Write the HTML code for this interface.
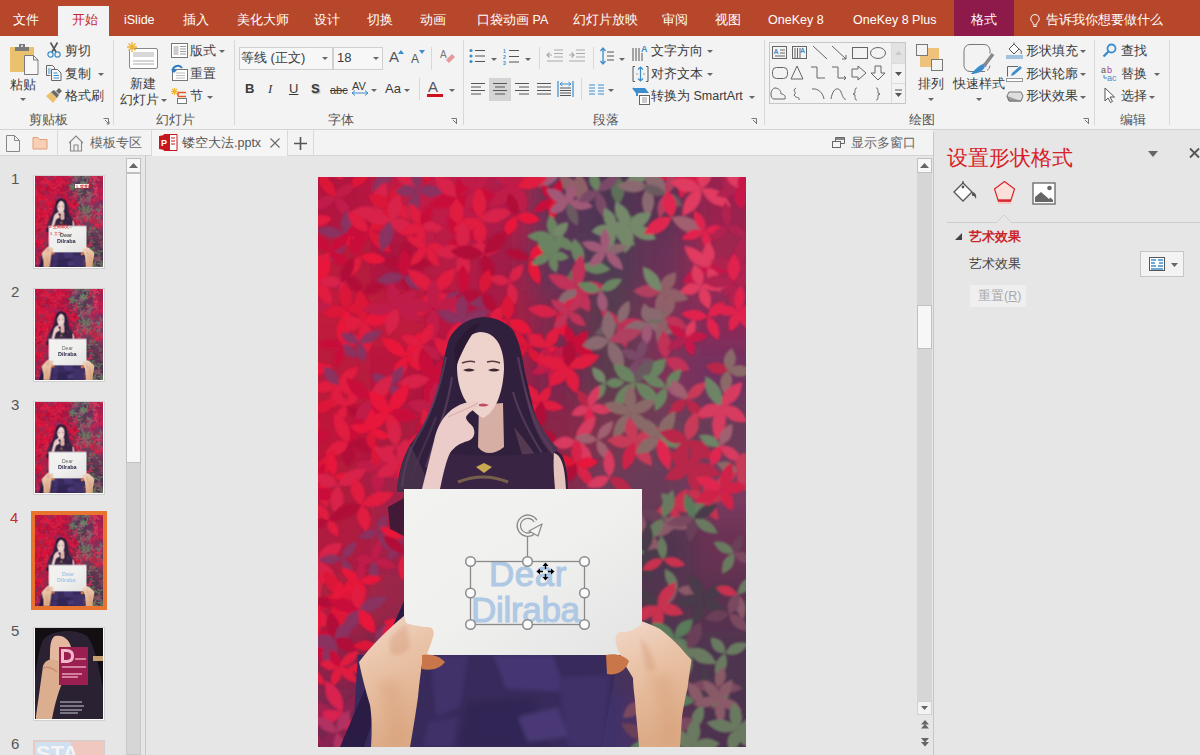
<!DOCTYPE html>
<html><head><meta charset="utf-8">
<style>
*{box-sizing:border-box;margin:0;padding:0}
html,body{width:1200px;height:755px;overflow:hidden;background:#e6e6e6;font-family:"Liberation Sans",sans-serif;color:#444}
.a{position:absolute}
.t{position:absolute;font-size:12.5px;line-height:14px;white-space:nowrap;color:#3a3a3a}
.w{color:#fff}
.dd{position:absolute;width:0;height:0;border-left:3px solid transparent;border-right:3px solid transparent;border-top:3px solid #666}
.vs{position:absolute;width:1px;background:#d8d8d8}
svg{position:absolute;overflow:visible}
</style></head><body>
<!-- TAB BAR -->
<div class="a" style="left:0;top:0;width:1200px;height:36px;background:#b7472a"></div>
<div class="a" style="left:58px;top:6px;width:51px;height:30px;background:#f3f3f3"></div>
<div class="a" style="left:954px;top:0;width:60px;height:36px;background:#8e1a4a"></div>
<div class="t w" style="left:13px;top:13px">文件</div>
<div class="t" style="left:72px;top:13px;color:#c8262b">开始</div>
<div class="t w" style="left:124px;top:13px">iSlide</div>
<div class="t w" style="left:183px;top:13px">插入</div>
<div class="t w" style="left:237px;top:13px">美化大师</div>
<div class="t w" style="left:314px;top:13px">设计</div>
<div class="t w" style="left:367px;top:13px">切换</div>
<div class="t w" style="left:420px;top:13px">动画</div>
<div class="t w" style="left:477px;top:13px">口袋动画 PA</div>
<div class="t w" style="left:573px;top:13px">幻灯片放映</div>
<div class="t w" style="left:662px;top:13px">审阅</div>
<div class="t w" style="left:715px;top:13px">视图</div>
<div class="t w" style="left:768px;top:13px">OneKey 8</div>
<div class="t w" style="left:853px;top:13px">OneKey 8 Plus</div>
<div class="t w" style="left:971px;top:13px">格式</div>
<svg style="left:1029px;top:13px" width="12" height="16" viewBox="0 0 12 16"><path d="M6 1.5a4.3 4.3 0 0 0-2.6 7.7c.6.5.9 1.2.9 2V12h3.4v-.8c0-.8.3-1.5.9-2A4.3 4.3 0 0 0 6 1.5z" fill="none" stroke="#fff" stroke-width="1"/><path d="M4.3 13.5h3.4" stroke="#fff"/></svg>
<div class="t w" style="left:1046px;top:13px">告诉我你想要做什么</div>

<!-- RIBBON -->
<div class="a" style="left:0;top:36px;width:1200px;height:94px;background:#f3f3f3;border-bottom:1px solid #d4d4d4"></div>
<!-- clipboard group -->
<svg style="left:10px;top:44px" width="29" height="31" viewBox="0 0 29 31"><path d="M0 3h24v25H0z" fill="#ecc16e"/><path d="M5 3h14v4H5z" fill="#7a7a7a"/><path d="M9 0h6v3H9z" fill="#7a7a7a"/><circle cx="12" cy="2" r="1" fill="#f3f3f3"/><path d="M14.5 11.5h9l4.5 4.5v14.5h-13.5z" fill="#f7f7f7" stroke="#7a7a7a"/><path d="M23.5 11.5v4.5h4.5" fill="none" stroke="#7a7a7a"/></svg>
<div class="t" style="left:10px;top:78px">粘贴</div>
<div class="dd" style="left:20px;top:98px"></div>
<svg style="left:46px;top:42px" width="16" height="16" viewBox="0 0 16 16"><path d="M4.5 0.5L10 10M11.5 0.5L6 10" stroke="#555" stroke-width="1.6"/><circle cx="4.5" cy="12.5" r="2.6" fill="none" stroke="#3c8dcc" stroke-width="1.2"/><circle cx="11.5" cy="12.5" r="2.6" fill="none" stroke="#3c8dcc" stroke-width="1.2"/></svg>
<div class="t" style="left:65px;top:44px">剪切</div>
<svg style="left:46px;top:65px" width="16" height="16" viewBox="0 0 16 16"><path d="M0.5 0.5h6l2 2v3" fill="none" stroke="#666"/><path d="M0.5 0.5v10h4" fill="none" stroke="#666"/><path d="M2 4h2.5M2 6h2.5M2 8h2.5" stroke="#3c8dcc"/><path d="M5.5 4.5h6l3.5 3.5v7.5h-9.5z" fill="#f7f7f7" stroke="#666"/><path d="M7.5 8h4M7.5 10.5h5.5M7.5 13h5.5" stroke="#3c8dcc"/></svg>
<div class="t" style="left:65px;top:67px">复制</div>
<div class="dd" style="left:98px;top:73px"></div>
<svg style="left:46px;top:88px" width="17" height="16" viewBox="0 0 17 16"><path d="M0 8l5 -4 6 6 -4 5z" fill="#ecc16e"/><path d="M5 4l3 -2 5 5 -2 3z" fill="#6a6a6a"/><path d="M10 3l3 -3 3 3 -3 3z" fill="#6a6a6a"/></svg>
<div class="t" style="left:65px;top:89px">格式刷</div>
<div class="t" style="left:29px;top:113px;color:#555">剪贴板</div>
<svg style="left:103px;top:118px" width="7" height="7" viewBox="0 0 7 7"><path d="M0.5 0.5h5v5M2 2l4 4M3.5 6h2.5v-2.5" fill="none" stroke="#777" stroke-width="1"/></svg>
<div class="vs" style="left:113px;top:40px;height:85px"></div>
<!-- slides group -->
<svg style="left:126px;top:42px" width="32" height="28" viewBox="0 0 32 28"><rect x="3.5" y="6.5" width="28" height="20" rx="1.5" fill="#fff" stroke="#888"/><rect x="7" y="10" width="21" height="5" fill="#d8d8d8"/><path d="M7 19h21M7 22h21" stroke="#aaa"/><g stroke="#f0b535" stroke-width="1.4"><path d="M6 0v10M1 5h10M2.5 1.5l7 7M9.5 1.5l-7 7"/></g></svg>
<div class="t" style="left:130px;top:77px">新建</div>
<div class="t" style="left:120px;top:93px">幻灯片</div>
<div class="dd" style="left:161px;top:99px"></div>
<svg style="left:171px;top:43px" width="17" height="15" viewBox="0 0 17 15"><rect x="0.5" y="0.5" width="16" height="14" fill="#fff" stroke="#777"/><rect x="2.5" y="3" width="5" height="9" fill="#ccc"/><path d="M9 3.5h6M9 6h6M9 8.5h6M9 11h6" stroke="#999"/></svg>
<div class="t" style="left:190px;top:44px">版式</div>
<div class="dd" style="left:219px;top:50px"></div>
<svg style="left:171px;top:65px" width="17" height="16" viewBox="0 0 17 16"><rect x="1.5" y="4.5" width="15" height="11" fill="#fff" stroke="#777"/><path d="M5 8h9M5 10.5h9M5 13h9" stroke="#bbb"/><path d="M2 7a5 5 0 0 1 9-4" fill="none" stroke="#2e7dc2" stroke-width="2"/><path d="M0 4l3 4 3-3z" fill="#2e7dc2"/></svg>
<div class="t" style="left:190px;top:67px">重置</div>
<svg style="left:171px;top:88px" width="17" height="16" viewBox="0 0 17 16"><g stroke="#f0b535" stroke-width="1.1"><path d="M3.5 0v7M0 3.5h7M1 1l5 5M6 1L1 6"/></g><path d="M7 4.5h8M7 4.5v4M7 8.5h8" fill="none" stroke="#e05a2a" stroke-width="1.5"/><rect x="6.5" y="10.5" width="9" height="5" fill="#fff" stroke="#777"/></svg>
<div class="t" style="left:190px;top:89px">节</div>
<div class="dd" style="left:207px;top:96px"></div>
<div class="t" style="left:156px;top:113px;color:#555">幻灯片</div>
<div class="vs" style="left:234px;top:40px;height:85px"></div>
<!-- font group -->
<div class="a" style="left:239px;top:47px;width:94px;height:23px;background:#fff0;border:1px solid #d0d0d0;background:#f7f7f7"></div>
<div class="a" style="left:333px;top:47px;width:50px;height:23px;border:1px solid #d0d0d0;background:#f7f7f7"></div>
<div class="t" style="left:241px;top:51px;font-size:13px">等线 (正文)</div>
<div class="dd" style="left:322px;top:57px"></div>
<div class="t" style="left:337px;top:51px;font-size:13px">18</div>
<div class="dd" style="left:373px;top:57px"></div>
<div class="t" style="left:389px;top:50px;font-size:15px;color:#555">A</div>
<svg style="left:398px;top:50px" width="6" height="4" viewBox="0 0 6 4"><path d="M0 4L3 0l3 4z" fill="#3c8dcc"/></svg>
<div class="t" style="left:411px;top:52px;font-size:12px;color:#555">A</div>
<svg style="left:419px;top:50px" width="6" height="4" viewBox="0 0 6 4"><path d="M0 0h6L3 4z" fill="#3c8dcc"/></svg>
<div class="vs" style="left:431px;top:47px;height:23px"></div>
<svg style="left:440px;top:49px" width="16" height="16" viewBox="0 0 16 16"><text x="0" y="9" font-size="10" fill="#777" font-family="Liberation Sans">A</text><path d="M6 11l6-6 3 3-6 6z" fill="#e8989a"/></svg>
<div class="t" style="left:245px;top:82px;font-weight:bold;font-size:13px">B</div>
<div class="t" style="left:268px;top:82px;font-style:italic;font-size:13px;font-family:'Liberation Serif'">I</div>
<div class="t" style="left:289px;top:82px;text-decoration:underline;font-size:13px">U</div>
<div class="t" style="left:311px;top:82px;font-weight:bold;font-size:13px;text-shadow:1px 1px 1px #aaa">S</div>
<div class="t" style="left:330px;top:83px;font-size:11px;text-decoration:line-through">abc</div>
<div class="t" style="left:352px;top:79px;font-size:11px">AV</div>
<svg style="left:351px;top:90px" width="18" height="6" viewBox="0 0 18 6"><path d="M1 3h16M4 0.5L1 3l3 2.5M14 0.5L17 3l-3 2.5" fill="none" stroke="#3c8dcc"/></svg>
<div class="dd" style="left:371px;top:89px"></div>
<div class="t" style="left:385px;top:82px;font-size:13px">Aa</div>
<div class="dd" style="left:404px;top:89px"></div>
<div class="vs" style="left:419px;top:78px;height:22px"></div>
<div class="t" style="left:428px;top:80px;font-size:15px;color:#555">A</div>
<div class="a" style="left:427px;top:94px;width:16px;height:3px;background:#d0101a"></div>
<div class="dd" style="left:449px;top:89px"></div>
<div class="t" style="left:328px;top:113px;color:#555">字体</div>
<svg style="left:451px;top:118px" width="7" height="7" viewBox="0 0 7 7"><path d="M0.5 0.5h5v5M2 2l4 4" fill="none" stroke="#777"/></svg>
<div class="vs" style="left:463px;top:40px;height:85px"></div>
<!-- paragraph group -->
<svg style="left:469px;top:48px" width="17" height="16" viewBox="0 0 17 16"><g fill="#3c8dcc"><circle cx="2" cy="2.5" r="1.6"/><circle cx="2" cy="8" r="1.6"/><circle cx="2" cy="13.5" r="1.6"/></g><path d="M6 2.5h10M6 8h10M6 13.5h10" stroke="#555"/></svg>
<div class="dd" style="left:491px;top:58px"></div>
<svg style="left:503px;top:48px" width="17" height="17" viewBox="0 0 17 17"><g fill="#3c8dcc" font-size="5" font-family="Liberation Sans" font-weight="bold"><text x="0" y="5">1</text><text x="0" y="11">2</text><text x="0" y="16.5">3</text></g><path d="M6 2.5h10M6 8.5h10M6 14h10" stroke="#555"/></svg>
<div class="dd" style="left:525px;top:58px"></div>
<div class="vs" style="left:539px;top:47px;height:22px"></div>
<svg style="left:546px;top:49px" width="18" height="14" viewBox="0 0 18 14"><path d="M8 1h9M8 4.5h9M8 8h9M1 12h16" stroke="#aaa"/><path d="M6 6H1M3.5 3.5L1 6l2.5 2.5" fill="none" stroke="#aaa" stroke-width="1.2"/></svg>
<svg style="left:568px;top:49px" width="18" height="14" viewBox="0 0 18 14"><path d="M8 1h9M8 4.5h9M8 8h9M1 12h16" stroke="#aaa"/><path d="M1 6h5M3.5 3.5L6 6 3.5 8.5" fill="none" stroke="#aaa" stroke-width="1.2"/></svg>
<div class="vs" style="left:593px;top:47px;height:22px"></div>
<svg style="left:600px;top:47px" width="14" height="18" viewBox="0 0 14 18"><path d="M3 1v16M0.5 4L3 1l2.5 3M0.5 14L3 17l2.5-3" fill="none" stroke="#3c8dcc" stroke-width="1.3"/><path d="M7 5h7M7 9h7M7 13h7" stroke="#555"/></svg>
<div class="dd" style="left:619px;top:58px"></div>
<svg style="left:632px;top:44px" width="17" height="18" viewBox="0 0 17 18"><path d="M1 4v13M4 4v13M7 4v13M10 9v8" stroke="#555"/><text x="9" y="8" font-size="9" fill="#3c8dcc" font-family="Liberation Sans" font-weight="bold">A</text></svg>
<div class="t" style="left:651px;top:44px">文字方向</div>
<div class="dd" style="left:707px;top:50px"></div>
<svg style="left:632px;top:65px" width="17" height="18" viewBox="0 0 17 18"><path d="M3 1.5H1v15h2M14 1.5h2v15h-2" fill="none" stroke="#555"/><path d="M8.5 2v14M6 4.5L8.5 2 11 4.5M6 13.5L8.5 16l2.5-2.5" fill="none" stroke="#3c8dcc" stroke-width="1.2"/><path d="M4 9h2M11 9h2" stroke="#999"/></svg>
<div class="t" style="left:651px;top:67px">对齐文本</div>
<div class="dd" style="left:707px;top:73px"></div>
<svg style="left:632px;top:87px" width="19" height="18" viewBox="0 0 19 18"><path d="M1 1h12l4 5H5z" fill="#3c8dcc"/><path d="M1 1l4 5v3" fill="none" stroke="#3c8dcc" stroke-width="2"/><rect x="7.5" y="8.5" width="10" height="9" fill="#fff" stroke="#666"/><path d="M10 11h5M10 13h5M10 15h5" stroke="#999"/></svg>
<div class="t" style="left:651px;top:89px">转换为 SmartArt</div>
<div class="dd" style="left:749px;top:96px"></div>
<svg style="left:470px;top:82px" width="16" height="14" viewBox="0 0 16 14"><path d="M1 1.5h14M1 5h10M1 8.5h14M1 12h10" stroke="#555"/></svg>
<div class="a" style="left:489px;top:78px;width:22px;height:23px;background:#d4d4d4"></div>
<svg style="left:492px;top:82px" width="16" height="14" viewBox="0 0 16 14"><path d="M1 1.5h14M3 5h10M1 8.5h14M3 12h10" stroke="#555"/></svg>
<svg style="left:514px;top:82px" width="16" height="14" viewBox="0 0 16 14"><path d="M1 1.5h14M5 5h10M1 8.5h14M5 12h10" stroke="#555"/></svg>
<svg style="left:536px;top:82px" width="16" height="14" viewBox="0 0 16 14"><path d="M1 1.5h14M1 5h14M1 8.5h14M1 12h14" stroke="#555"/></svg>
<svg style="left:557px;top:80px" width="17" height="18" viewBox="0 0 17 18"><path d="M1 1v16M16 1v16" stroke="#3c8dcc" stroke-width="1.2"/><path d="M3 4h11M5.5 2L3 4l2.5 2M11.5 2L14 4l-2.5 2" fill="none" stroke="#3c8dcc"/><path d="M3 8h11M3 10.5h11M3 13h11M3 15.5h11" stroke="#555"/></svg>
<div class="vs" style="left:581px;top:78px;height:22px"></div>
<svg style="left:589px;top:84px" width="15" height="11" viewBox="0 0 15 11"><path d="M0 1h6M9 1h6M0 4h6M9 4h6M0 7h6M9 7h6M0 10h6M9 10h6" stroke="#3c8dcc"/></svg>
<div class="dd" style="left:608px;top:89px"></div>
<div class="t" style="left:593px;top:113px;color:#555">段落</div>
<svg style="left:751px;top:118px" width="7" height="7" viewBox="0 0 7 7"><path d="M0.5 0.5h5v5M2 2l4 4" fill="none" stroke="#777"/></svg>
<div class="vs" style="left:764px;top:40px;height:85px"></div>
<!-- drawing group -->
<div class="a" style="left:769px;top:42px;width:137px;height:62px;border:1px solid #c6c6c6;background:#f3f3f3"></div>
<div class="a" style="left:891px;top:43px;width:14px;height:60px;border-left:1px solid #dcdcdc;background:#f3f3f3"></div>
<div class="a" style="left:892px;top:43px;width:13px;height:20px;background:#e2e2e2"></div>
<div class="a" style="left:892px;top:83px;width:13px;height:1px;background:#dcdcdc"></div>
<div class="a" style="left:892px;top:63px;width:13px;height:1px;background:#dcdcdc"></div>
<svg style="left:895px;top:51px" width="7" height="4"><path d="M0 4L3.5 0 7 4z" fill="#c8c8c8"/></svg>
<svg style="left:895px;top:72px" width="7" height="4"><path d="M0 0h7L3.5 4z" fill="#555"/></svg>
<svg style="left:895px;top:89px" width="7" height="8"><path d="M0 1h7" stroke="#555"/><path d="M0 4h7L3.5 8z" fill="#555"/></svg>
<svg style="left:769px;top:44px" width="120" height="58" viewBox="0 0 120 58" fill="none" stroke="#666" stroke-width="1">
<rect x="3.5" y="2.5" width="14" height="12"/><path d="M11 6h5M11 9h5M6 12h10" stroke="#666"/><text x="4.5" y="10" font-size="7" fill="#3c8dcc" stroke="none" font-family="Liberation Sans" font-weight="bold">A</text>
<rect x="23.5" y="2.5" width="14" height="12"/><path d="M26 4v10M28.5 4v10M31 4v10" /><text x="31" y="9" font-size="7" fill="#3c8dcc" stroke="none" font-family="Liberation Sans" font-weight="bold">A</text>
<path d="M44 2l14 13M63 2l14 13M77 11v4h-4"/>
<rect x="83.5" y="3.5" width="15" height="11"/><ellipse cx="109" cy="9" rx="7.5" ry="5.5"/>
<rect x="3.5" y="23.5" width="15" height="11" rx="4"/><path d="M28 22l-6 13h12z"/><path d="M42 23h6v11h8M63 23h6v11h8M75 32l2 2-2 2"/><path d="M83 25h6v-3l8 7-8 7v-3h-6z"/><path d="M106 22h6v7h4l-7 7-7-7h4z"/>
<path d="M5 55h11c1-4-2-5-4-5 0-4-3-6-6-6-2 0-4 3-4 6s1 5 3 5z"/><path d="M27 44c-5 3 2 4-2 7 2 4 6 1 5 5"/><path d="M43 45c6-1 11 4 12 10M62 55c2-12 8-12 10-7s3 8 5 7"/><path d="M88 44c-2 0-2 1-2 5l-2 1 2 1c0 4 0 5 2 5M107 44c2 0 2 1 2 5l2 1-2 1c0 4 0 5-2 5"/>
</svg>
<svg style="left:915px;top:43px" width="30" height="30" viewBox="0 0 30 30"><rect x="5" y="5" width="19" height="19" fill="#eec27a"/><rect x="1.5" y="1.5" width="11" height="11" fill="#f3f3f3" stroke="#777"/><rect x="16.5" y="16.5" width="11" height="11" fill="#f3f3f3" stroke="#777"/></svg>
<div class="t" style="left:918px;top:77px">排列</div>
<div class="dd" style="left:928px;top:98px"></div>
<svg style="left:963px;top:44px" width="32" height="32" viewBox="0 0 32 32"><path d="M22 27.5H7a6 6 0 0 1-6-6v-15a6 6 0 0 1 6-6h14a6 6 0 0 1 6 6v3" fill="none" stroke="#777"/><path d="M27 21.5a6 6 0 0 1-3 5" fill="none" stroke="#777"/><path d="M30 10l-9 12" stroke="#888" stroke-width="3.5"/><path d="M20 20c-3 1-8 5-12 10 6 0 11-2 14-7z" fill="#3c8dcc"/><path d="M20 20c2 0 3 1 3 3" stroke="#a070c0" fill="none" stroke-width="0.8"/></svg>
<div class="t" style="left:953px;top:77px">快速样式</div>
<div class="dd" style="left:976px;top:98px"></div>
<div class="t" style="left:909px;top:113px;color:#555">绘图</div>
<svg style="left:1083px;top:118px" width="7" height="7" viewBox="0 0 7 7"><path d="M0.5 0.5h5v5M2 2l4 4" fill="none" stroke="#777"/></svg>
<svg style="left:1006px;top:42px" width="18" height="17" viewBox="0 0 18 17"><path d="M3 7l5-5 5 5-5 5z" fill="#fff" stroke="#555"/><path d="M8 2V0.5M13 7c2 1 3 3 2 5" fill="none" stroke="#555"/><rect x="0" y="13" width="17" height="4" fill="#a3c2e0"/></svg>
<div class="t" style="left:1026px;top:44px">形状填充</div>
<div class="dd" style="left:1080px;top:50px"></div>
<svg style="left:1006px;top:65px" width="18" height="17" viewBox="0 0 18 17"><path d="M12 1.5H1.5v10" fill="none" stroke="#666"/><path d="M5 11l1-3 8-7 2 2-8 7z" fill="#3c8dcc"/><rect x="0.5" y="13.5" width="16" height="3" fill="#fff" stroke="#999"/></svg>
<div class="t" style="left:1026px;top:67px">形状轮廓</div>
<div class="dd" style="left:1080px;top:73px"></div>
<svg style="left:1006px;top:88px" width="18" height="16" viewBox="0 0 18 16"><path d="M3 4h12l2 4-2 5H3L1 8z" fill="#ddd" stroke="#777"/><path d="M1 8l2 5h12" fill="#999" stroke="#777"/></svg>
<div class="t" style="left:1026px;top:89px">形状效果</div>
<div class="dd" style="left:1080px;top:96px"></div>
<div class="vs" style="left:1094px;top:40px;height:85px"></div>
<!-- editing group -->
<svg style="left:1102px;top:43px" width="15" height="15" viewBox="0 0 15 15"><circle cx="9.5" cy="5.5" r="4" fill="none" stroke="#3c8dcc" stroke-width="1.8"/><path d="M6.5 8.5L1.5 13.5" stroke="#3c8dcc" stroke-width="2.4"/></svg>
<div class="t" style="left:1121px;top:44px">查找</div>
<svg style="left:1101px;top:65px" width="18" height="17" viewBox="0 0 18 17"><text x="0" y="8" font-size="9" fill="#555" font-family="Liberation Sans">a</text><text x="6" y="8" font-size="9" fill="#a0409a" font-family="Liberation Sans">b</text><text x="6" y="16" font-size="9" fill="#3c8dcc" font-family="Liberation Sans">ac</text><path d="M3 10v3H6" fill="none" stroke="#3c8dcc"/></svg>
<div class="t" style="left:1121px;top:67px">替换</div>
<div class="dd" style="left:1154px;top:73px"></div>
<svg style="left:1104px;top:87px" width="12" height="16" viewBox="0 0 12 16"><path d="M1 1v13l3-3 2.5 4.5 2-1L6 10h4.5z" fill="#fff" stroke="#555"/></svg>
<div class="t" style="left:1121px;top:89px">选择</div>
<div class="dd" style="left:1149px;top:96px"></div>
<div class="t" style="left:1120px;top:113px;color:#555">编辑</div>
<div class="vs" style="left:1169px;top:40px;height:85px"></div>


<!-- TAB ROW -->
<div class="a" style="left:0;top:130px;width:933px;height:26px;background:#f3f3f3;border-bottom:1px solid #d5d5d5"></div>
<svg style="left:5px;top:135px" width="16" height="17" viewBox="0 0 16 17"><path d="M1.5 0.5h8l5 5v11h-13z" fill="none" stroke="#888"/><path d="M9.5 0.5v5h5" fill="none" stroke="#888"/></svg>
<svg style="left:32px;top:136px" width="16" height="14" viewBox="0 0 16 14"><path d="M1 1.5h5l1.5 2H15v9.5H1z" fill="#f8ceb4" stroke="#e0a078"/></svg>
<div class="a" style="left:57px;top:130px;width:1px;height:25px;background:#dadada"></div>
<svg style="left:68px;top:135px" width="16" height="17" viewBox="0 0 16 17"><path d="M1 8L8 1l7 7M2.5 6.5v9.5h11V6.5M6 16v-6h4v6" fill="none" stroke="#888" stroke-width="1.1"/></svg>
<div class="t" style="left:90px;top:136px;color:#666">模板专区</div>
<div class="a" style="left:151px;top:130px;width:1px;height:25px;background:#dadada"></div>
<div class="a" style="left:152px;top:130px;width:135px;height:26px;background:#f5f5f5"></div>
<svg style="left:159px;top:134px" width="19" height="17" viewBox="0 0 19 17"><path d="M5 0.5h13v16H5z" fill="#fff" stroke="#c8161d"/><path d="M0 2l11-2v17L0 15z" fill="#c8161d"/><text x="2" y="12" font-size="9" font-weight="bold" fill="#fff" font-family="Liberation Sans">P</text><path d="M12 4h4M12 7h4M12 10h4" stroke="#c8161d"/></svg>
<div class="t" style="left:182px;top:136px;color:#555;font-size:12.5px">镂空大法.pptx</div>
<svg style="left:270px;top:138px" width="10" height="10" viewBox="0 0 10 10"><path d="M0.5 0.5l9 9M9.5 0.5l-9 9" stroke="#666" stroke-width="1.1"/></svg>
<div class="a" style="left:287px;top:130px;width:1px;height:25px;background:#dadada"></div>
<svg style="left:294px;top:137px" width="13" height="13" viewBox="0 0 13 13"><path d="M6.5 0v13M0 6.5h13" stroke="#555" stroke-width="1.6"/></svg>
<div class="a" style="left:313px;top:130px;width:1px;height:25px;background:#dadada"></div>
<svg style="left:832px;top:137px" width="13" height="11" viewBox="0 0 13 11"><rect x="0.5" y="4.5" width="8" height="6" fill="none" stroke="#666"/><path d="M3.5 4.5v-4h9v6h-4" fill="none" stroke="#666"/><path d="M3.5 2h9" stroke="#666" stroke-width="1.5"/></svg>
<div class="t" style="left:851px;top:136px;color:#666">显示多窗口</div>


<!-- LEFT PANEL -->
<div class="a" style="left:126px;top:158px;width:15px;height:597px;background:#d6d6d6;border:1px solid #c8c8c8;border-top:0"></div>
<div class="a" style="left:126px;top:158px;width:15px;height:15px;background:#f7f7f7;border:1px solid #c0c0c0"></div>
<svg style="left:129px;top:163px" width="9" height="5"><path d="M0 5L4.5 0 9 5z" fill="#666"/></svg>
<div class="a" style="left:126px;top:173px;width:15px;height:290px;background:#f7f7f7;border:1px solid #c0c0c0"></div>
<div class="a" style="left:145px;top:155px;width:1px;height:600px;background:#c8c8c8"></div>
<div class="t" style="left:11px;top:171px;font-size:15px;line-height:16px;color:#555">1</div>
<div class="t" style="left:11px;top:284px;font-size:15px;line-height:16px;color:#555">2</div>
<div class="t" style="left:11px;top:397px;font-size:15px;line-height:16px;color:#555">3</div>
<div class="t" style="left:10px;top:510px;font-size:15px;line-height:16px;color:#c43030">4</div>
<div class="t" style="left:11px;top:623px;font-size:15px;line-height:16px;color:#555">5</div>
<div class="t" style="left:11px;top:736px;font-size:15px;line-height:16px;color:#555">6</div>
<div class="a" style="left:33px;top:175px;width:72px;height:94px;border:1px solid #d0d0d0;background:#fff"></div>
<div class="a" style="left:33px;top:288px;width:72px;height:94px;border:1px solid #d0d0d0;background:#fff"></div>
<div class="a" style="left:33px;top:401px;width:72px;height:94px;border:1px solid #d0d0d0;background:#fff"></div>
<div class="a" style="left:31px;top:511px;width:76px;height:99px;background:#e8742f"></div>
<div class="a" style="left:33px;top:627px;width:72px;height:94px;border:1px solid #d0d0d0;background:#fff"></div>
<div class="a" style="left:33px;top:740px;width:72px;height:20px;border:1px solid #d0d0d0;background:#fff"></div>


<!-- SLIDE -->
<svg width="0" height="0" style="position:absolute;left:0;top:0">
<defs>
<filter id="bl" filterUnits="userSpaceOnUse" x="-60" y="-60" width="548" height="690"><feGaussianBlur stdDeviation="14"/></filter>
<filter id="bl3"><feGaussianBlur stdDeviation="0.8"/></filter>
<filter id="bl4" x="-50%" y="-50%" width="200%" height="200%"><feGaussianBlur stdDeviation="5"/></filter>
<filter id="bl2"><feGaussianBlur stdDeviation="2"/></filter>
<clipPath id="clp"><rect x="0" y="0" width="428" height="570"/></clipPath>
<symbol id="photo" viewBox="0 0 428 570">
<g clip-path="url(#clp)">
<g filter="url(#bl)"><rect x="-41.0" y="-41.0" width="95.5" height="99.0" fill="#B01840"/>
<rect x="52.5" y="-41.0" width="55.5" height="99.0" fill="#C01A44"/>
<rect x="106.0" y="-41.0" width="55.5" height="99.0" fill="#C01A48"/>
<rect x="159.5" y="-41.0" width="55.5" height="99.0" fill="#B01A48"/>
<rect x="213.0" y="-41.0" width="55.5" height="99.0" fill="#5A3458"/>
<rect x="266.5" y="-41.0" width="55.5" height="99.0" fill="#4E3452"/>
<rect x="320.0" y="-41.0" width="55.5" height="99.0" fill="#5A3052"/>
<rect x="373.5" y="-41.0" width="95.5" height="99.0" fill="#9A2450"/>
<rect x="-41.0" y="56.0" width="95.5" height="59.0" fill="#B81A3C"/>
<rect x="52.5" y="56.0" width="55.5" height="59.0" fill="#A81840"/>
<rect x="106.0" y="56.0" width="55.5" height="59.0" fill="#B81A44"/>
<rect x="159.5" y="56.0" width="55.5" height="59.0" fill="#A01A48"/>
<rect x="213.0" y="56.0" width="55.5" height="59.0" fill="#5A3658"/>
<rect x="266.5" y="56.0" width="55.5" height="59.0" fill="#503A52"/>
<rect x="320.0" y="56.0" width="55.5" height="59.0" fill="#6A3258"/>
<rect x="373.5" y="56.0" width="95.5" height="59.0" fill="#A02850"/>
<rect x="-41.0" y="113.0" width="95.5" height="59.0" fill="#C01A3C"/>
<rect x="52.5" y="113.0" width="55.5" height="59.0" fill="#C01A3C"/>
<rect x="106.0" y="113.0" width="55.5" height="59.0" fill="#B81840"/>
<rect x="159.5" y="113.0" width="55.5" height="59.0" fill="#A81A44"/>
<rect x="213.0" y="113.0" width="55.5" height="59.0" fill="#7A2A50"/>
<rect x="266.5" y="113.0" width="55.5" height="59.0" fill="#563A50"/>
<rect x="320.0" y="113.0" width="55.5" height="59.0" fill="#7A3058"/>
<rect x="373.5" y="113.0" width="95.5" height="59.0" fill="#8A2A58"/>
<rect x="-41.0" y="170.0" width="95.5" height="59.0" fill="#B81A3C"/>
<rect x="52.5" y="170.0" width="55.5" height="59.0" fill="#B8183C"/>
<rect x="106.0" y="170.0" width="55.5" height="59.0" fill="#A01840"/>
<rect x="159.5" y="170.0" width="55.5" height="59.0" fill="#A01A44"/>
<rect x="213.0" y="170.0" width="55.5" height="59.0" fill="#7A2850"/>
<rect x="266.5" y="170.0" width="55.5" height="59.0" fill="#5A3A50"/>
<rect x="320.0" y="170.0" width="55.5" height="59.0" fill="#803058"/>
<rect x="373.5" y="170.0" width="95.5" height="59.0" fill="#703060"/>
<rect x="-41.0" y="227.0" width="95.5" height="59.0" fill="#C0183A"/>
<rect x="52.5" y="227.0" width="55.5" height="59.0" fill="#A81A40"/>
<rect x="106.0" y="227.0" width="55.5" height="59.0" fill="#B01A40"/>
<rect x="159.5" y="227.0" width="55.5" height="59.0" fill="#901A40"/>
<rect x="213.0" y="227.0" width="55.5" height="59.0" fill="#8A2848"/>
<rect x="266.5" y="227.0" width="55.5" height="59.0" fill="#7A3450"/>
<rect x="320.0" y="227.0" width="55.5" height="59.0" fill="#6A4058"/>
<rect x="373.5" y="227.0" width="95.5" height="59.0" fill="#6A3A58"/>
<rect x="-41.0" y="284.0" width="95.5" height="59.0" fill="#B01A3C"/>
<rect x="52.5" y="284.0" width="55.5" height="59.0" fill="#A02448"/>
<rect x="106.0" y="284.0" width="55.5" height="59.0" fill="#982848"/>
<rect x="159.5" y="284.0" width="55.5" height="59.0" fill="#8A2848"/>
<rect x="213.0" y="284.0" width="55.5" height="59.0" fill="#8A2848"/>
<rect x="266.5" y="284.0" width="55.5" height="59.0" fill="#6A3A58"/>
<rect x="320.0" y="284.0" width="55.5" height="59.0" fill="#6A3A58"/>
<rect x="373.5" y="284.0" width="95.5" height="59.0" fill="#7A3A60"/>
<rect x="-41.0" y="341.0" width="95.5" height="59.0" fill="#B01E40"/>
<rect x="52.5" y="341.0" width="55.5" height="59.0" fill="#A02448"/>
<rect x="106.0" y="341.0" width="55.5" height="59.0" fill="#882444"/>
<rect x="159.5" y="341.0" width="55.5" height="59.0" fill="#6A4060"/>
<rect x="213.0" y="341.0" width="55.5" height="59.0" fill="#6A4060"/>
<rect x="266.5" y="341.0" width="55.5" height="59.0" fill="#4E3450"/>
<rect x="320.0" y="341.0" width="55.5" height="59.0" fill="#4E3450"/>
<rect x="373.5" y="341.0" width="95.5" height="59.0" fill="#6A3052"/>
<rect x="-41.0" y="398.0" width="95.5" height="59.0" fill="#A82040"/>
<rect x="52.5" y="398.0" width="55.5" height="59.0" fill="#982848"/>
<rect x="106.0" y="398.0" width="55.5" height="59.0" fill="#5A3A60"/>
<rect x="159.5" y="398.0" width="55.5" height="59.0" fill="#5A3A60"/>
<rect x="213.0" y="398.0" width="55.5" height="59.0" fill="#5A3A60"/>
<rect x="266.5" y="398.0" width="55.5" height="59.0" fill="#4E3450"/>
<rect x="320.0" y="398.0" width="55.5" height="59.0" fill="#523450"/>
<rect x="373.5" y="398.0" width="95.5" height="59.0" fill="#5A3050"/>
<rect x="-41.0" y="455.0" width="95.5" height="59.0" fill="#902448"/>
<rect x="52.5" y="455.0" width="55.5" height="59.0" fill="#502848"/>
<rect x="106.0" y="455.0" width="55.5" height="59.0" fill="#3A2C60"/>
<rect x="159.5" y="455.0" width="55.5" height="59.0" fill="#3A2C60"/>
<rect x="213.0" y="455.0" width="55.5" height="59.0" fill="#3A2C60"/>
<rect x="266.5" y="455.0" width="55.5" height="59.0" fill="#44305A"/>
<rect x="320.0" y="455.0" width="55.5" height="59.0" fill="#4E3450"/>
<rect x="373.5" y="455.0" width="95.5" height="59.0" fill="#4E3450"/>
<rect x="-41.0" y="512.0" width="95.5" height="99.0" fill="#782850"/>
<rect x="52.5" y="512.0" width="55.5" height="99.0" fill="#302040"/>
<rect x="106.0" y="512.0" width="55.5" height="99.0" fill="#3A2C60"/>
<rect x="159.5" y="512.0" width="55.5" height="99.0" fill="#3A2C60"/>
<rect x="213.0" y="512.0" width="55.5" height="99.0" fill="#3A2C60"/>
<rect x="266.5" y="512.0" width="55.5" height="99.0" fill="#40306A"/>
<rect x="320.0" y="512.0" width="55.5" height="99.0" fill="#5A3050"/>
<rect x="373.5" y="512.0" width="95.5" height="99.0" fill="#4E3050"/></g>
<g filter="url(#bl3)"><path transform="translate(-14.2 -18.4) rotate(186)" d="M0 0Q13.8 -13.7 0 -30.5Q-13.8 -13.7 0 0Z" fill="#e8143a" opacity="1"/><path transform="translate(-14.2 -18.4) rotate(277)" d="M0 0Q13.8 -12.1 0 -26.9Q-13.8 -12.1 0 0Z" fill="#e8143a" opacity="1"/><path transform="translate(-14.2 -18.4) rotate(374)" d="M0 0Q13.8 -14.4 0 -32.0Q-13.8 -14.4 0 0Z" fill="#e8143a" opacity="1"/><path transform="translate(-14.2 -18.4) rotate(460)" d="M0 0Q13.8 -14.3 0 -31.8Q-13.8 -14.3 0 0Z" fill="#e8143a" opacity="1"/><path transform="translate(11.2 -11.9) rotate(203)" d="M0 0Q9.8 -8.7 0 -19.3Q-9.8 -8.7 0 0Z" fill="#e01a40" opacity="1"/><path transform="translate(11.2 -11.9) rotate(279)" d="M0 0Q9.8 -10.3 0 -22.9Q-9.8 -10.3 0 0Z" fill="#e01a40" opacity="1"/><path transform="translate(11.2 -11.9) rotate(346)" d="M0 0Q9.8 -10.8 0 -24.0Q-9.8 -10.8 0 0Z" fill="#e01a40" opacity="1"/><path transform="translate(11.2 -11.9) rotate(417)" d="M0 0Q9.8 -9.3 0 -20.7Q-9.8 -9.3 0 0Z" fill="#b01038" opacity="1"/><path transform="translate(11.2 -11.9) rotate(497)" d="M0 0Q9.8 -9.1 0 -20.3Q-9.8 -9.1 0 0Z" fill="#e01a40" opacity="1"/><path transform="translate(51.8 -9.4) rotate(96)" d="M0 0Q11.8 -13.7 0 -30.4Q-11.8 -13.7 0 0Z" fill="#dc1238" opacity="1"/><path transform="translate(51.8 -9.4) rotate(222)" d="M0 0Q11.8 -13.0 0 -29.0Q-11.8 -13.0 0 0Z" fill="#dc1238" opacity="1"/><path transform="translate(51.8 -9.4) rotate(345)" d="M0 0Q11.8 -11.4 0 -25.4Q-11.8 -11.4 0 0Z" fill="#b01038" opacity="1"/><path transform="translate(76.4 -10.1) rotate(23)" d="M0 0Q12.8 -13.6 0 -30.2Q-12.8 -13.6 0 0Z" fill="#d82448" opacity="1"/><path transform="translate(76.4 -10.1) rotate(136)" d="M0 0Q12.8 -13.9 0 -30.8Q-12.8 -13.9 0 0Z" fill="#d82448" opacity="1"/><path transform="translate(76.4 -10.1) rotate(223)" d="M0 0Q12.8 -14.8 0 -32.9Q-12.8 -14.8 0 0Z" fill="#8a3060" opacity="1"/><path transform="translate(76.4 -10.1) rotate(300)" d="M0 0Q12.8 -13.0 0 -28.8Q-12.8 -13.0 0 0Z" fill="#8a3060" opacity="1"/><path transform="translate(103.2 -15.1) rotate(328)" d="M0 0Q10.1 -9.1 0 -20.2Q-10.1 -9.1 0 0Z" fill="#dc1238" opacity="1"/><path transform="translate(103.2 -15.1) rotate(418)" d="M0 0Q10.1 -10.9 0 -24.3Q-10.1 -10.9 0 0Z" fill="#dc1238" opacity="1"/><path transform="translate(103.2 -15.1) rotate(522)" d="M0 0Q10.1 -9.9 0 -21.9Q-10.1 -9.9 0 0Z" fill="#dc1238" opacity="1"/><path transform="translate(103.2 -15.1) rotate(594)" d="M0 0Q10.1 -9.1 0 -20.3Q-10.1 -9.1 0 0Z" fill="#dc1238" opacity="1"/><path transform="translate(143.8 -21.7) rotate(104)" d="M0 0Q11.9 -10.7 0 -23.8Q-11.9 -10.7 0 0Z" fill="#e01a40" opacity="1"/><path transform="translate(143.8 -21.7) rotate(230)" d="M0 0Q11.9 -12.0 0 -26.6Q-11.9 -12.0 0 0Z" fill="#e8143a" opacity="1"/><path transform="translate(143.8 -21.7) rotate(350)" d="M0 0Q11.9 -11.7 0 -26.1Q-11.9 -11.7 0 0Z" fill="#c01a48" opacity="1"/><path transform="translate(167.6 -19.5) rotate(20)" d="M0 0Q10.1 -8.6 0 -19.2Q-10.1 -8.6 0 0Z" fill="#8a3060" opacity="1"/><path transform="translate(167.6 -19.5) rotate(136)" d="M0 0Q10.1 -9.8 0 -21.8Q-10.1 -9.8 0 0Z" fill="#8a3060" opacity="1"/><path transform="translate(167.6 -19.5) rotate(253)" d="M0 0Q10.1 -9.1 0 -20.2Q-10.1 -9.1 0 0Z" fill="#e01a40" opacity="1"/><path transform="translate(194.1 -13.7) rotate(296)" d="M0 0Q11.7 -11.3 0 -25.1Q-11.7 -11.3 0 0Z" fill="#8a3060" opacity="1"/><path transform="translate(194.1 -13.7) rotate(390)" d="M0 0Q11.7 -11.9 0 -26.6Q-11.7 -11.9 0 0Z" fill="#e01a40" opacity="1"/><path transform="translate(194.1 -13.7) rotate(479)" d="M0 0Q11.7 -10.6 0 -23.5Q-11.7 -10.6 0 0Z" fill="#b01038" opacity="1"/><path transform="translate(194.1 -13.7) rotate(577)" d="M0 0Q11.7 -12.0 0 -26.7Q-11.7 -12.0 0 0Z" fill="#8a3060" opacity="1"/><path transform="translate(241.5 -1.3) rotate(133)" d="M0 0Q13.1 -13.9 0 -31.0Q-13.1 -13.9 0 0Z" fill="#906068" opacity="1"/><path transform="translate(241.5 -1.3) rotate(255)" d="M0 0Q13.1 -14.7 0 -32.6Q-13.1 -14.7 0 0Z" fill="#a05a78" opacity="1"/><path transform="translate(241.5 -1.3) rotate(380)" d="M0 0Q13.1 -12.1 0 -26.9Q-13.1 -12.1 0 0Z" fill="#a05a78" opacity="1"/><path transform="translate(259.8 -4.5) rotate(169)" d="M0 0Q14.1 -16.4 0 -36.4Q-14.1 -16.4 0 0Z" fill="#906068" opacity="1"/><path transform="translate(259.8 -4.5) rotate(287)" d="M0 0Q14.1 -13.1 0 -29.1Q-14.1 -13.1 0 0Z" fill="#c03058" opacity="1"/><path transform="translate(259.8 -4.5) rotate(403)" d="M0 0Q14.1 -14.9 0 -33.1Q-14.1 -14.9 0 0Z" fill="#c03058" opacity="1"/><path transform="translate(299.6 -1.8) rotate(295)" d="M0 0Q13.8 -15.8 0 -35.1Q-13.8 -15.8 0 0Z" fill="#5e7058" opacity="1"/><path transform="translate(299.6 -1.8) rotate(406)" d="M0 0Q13.8 -12.2 0 -27.2Q-13.8 -12.2 0 0Z" fill="#74886a" opacity="1"/><path transform="translate(299.6 -1.8) rotate(539)" d="M0 0Q13.8 -13.6 0 -30.3Q-13.8 -13.6 0 0Z" fill="#5e7058" opacity="1"/><path transform="translate(330.7 -4.6) rotate(57)" d="M0 0Q12.3 -14.3 0 -31.7Q-12.3 -14.3 0 0Z" fill="#8a6a70" opacity="1"/><path transform="translate(330.7 -4.6) rotate(136)" d="M0 0Q12.3 -10.6 0 -23.7Q-12.3 -10.6 0 0Z" fill="#8a6a70" opacity="1"/><path transform="translate(330.7 -4.6) rotate(242)" d="M0 0Q12.3 -12.6 0 -28.1Q-12.3 -12.6 0 0Z" fill="#74886a" opacity="1"/><path transform="translate(330.7 -4.6) rotate(335)" d="M0 0Q12.3 -14.0 0 -31.1Q-12.3 -14.0 0 0Z" fill="#8a6a70" opacity="1"/><path transform="translate(357.8 -16.9) rotate(85)" d="M0 0Q10.5 -12.1 0 -26.9Q-10.5 -12.1 0 0Z" fill="#c81848" opacity="1"/><path transform="translate(357.8 -16.9) rotate(155)" d="M0 0Q10.5 -11.0 0 -24.5Q-10.5 -11.0 0 0Z" fill="#c81848" opacity="1"/><path transform="translate(357.8 -16.9) rotate(240)" d="M0 0Q10.5 -12.2 0 -27.0Q-10.5 -12.2 0 0Z" fill="#c81848" opacity="1"/><path transform="translate(357.8 -16.9) rotate(303)" d="M0 0Q10.5 -10.8 0 -24.0Q-10.5 -10.8 0 0Z" fill="#c81848" opacity="1"/><path transform="translate(357.8 -16.9) rotate(363)" d="M0 0Q10.5 -9.7 0 -21.5Q-10.5 -9.7 0 0Z" fill="#c81848" opacity="1"/><path transform="translate(368.1 -2.8) rotate(262)" d="M0 0Q10.9 -12.1 0 -26.8Q-10.9 -12.1 0 0Z" fill="#d81a48" opacity="1"/><path transform="translate(368.1 -2.8) rotate(324)" d="M0 0Q10.9 -10.2 0 -22.7Q-10.9 -10.2 0 0Z" fill="#d81a48" opacity="1"/><path transform="translate(368.1 -2.8) rotate(400)" d="M0 0Q10.9 -10.9 0 -24.2Q-10.9 -10.9 0 0Z" fill="#b02050" opacity="1"/><path transform="translate(368.1 -2.8) rotate(466)" d="M0 0Q10.9 -10.9 0 -24.2Q-10.9 -10.9 0 0Z" fill="#d81a48" opacity="1"/><path transform="translate(368.1 -2.8) rotate(552)" d="M0 0Q10.9 -11.1 0 -24.7Q-10.9 -11.1 0 0Z" fill="#d81a48" opacity="1"/><path transform="translate(414.6 -11.1) rotate(350)" d="M0 0Q13.7 -14.2 0 -31.5Q-13.7 -14.2 0 0Z" fill="#b02050" opacity="1"/><path transform="translate(414.6 -11.1) rotate(422)" d="M0 0Q13.7 -13.5 0 -30.1Q-13.7 -13.5 0 0Z" fill="#e0204e" opacity="1"/><path transform="translate(414.6 -11.1) rotate(480)" d="M0 0Q13.7 -14.7 0 -32.6Q-13.7 -14.7 0 0Z" fill="#b02050" opacity="1"/><path transform="translate(414.6 -11.1) rotate(553)" d="M0 0Q13.7 -13.0 0 -29.0Q-13.7 -13.0 0 0Z" fill="#b02050" opacity="1"/><path transform="translate(414.6 -11.1) rotate(618)" d="M0 0Q13.7 -12.3 0 -27.4Q-13.7 -12.3 0 0Z" fill="#c81848" opacity="1"/><path transform="translate(17.6 19.7) rotate(56)" d="M0 0Q11.3 -10.0 0 -22.2Q-11.3 -10.0 0 0Z" fill="#c01a48" opacity="1"/><path transform="translate(17.6 19.7) rotate(145)" d="M0 0Q11.3 -11.3 0 -25.2Q-11.3 -11.3 0 0Z" fill="#c01a48" opacity="1"/><path transform="translate(17.6 19.7) rotate(243)" d="M0 0Q11.3 -11.5 0 -25.6Q-11.3 -11.5 0 0Z" fill="#c01a48" opacity="1"/><path transform="translate(17.6 19.7) rotate(323)" d="M0 0Q11.3 -13.2 0 -29.4Q-11.3 -13.2 0 0Z" fill="#dc1238" opacity="1"/><path transform="translate(56.9 31.3) rotate(22)" d="M0 0Q13.0 -12.9 0 -28.6Q-13.0 -12.9 0 0Z" fill="#d82448" opacity="1"/><path transform="translate(56.9 31.3) rotate(135)" d="M0 0Q13.0 -13.3 0 -29.5Q-13.0 -13.3 0 0Z" fill="#d82448" opacity="1"/><path transform="translate(56.9 31.3) rotate(250)" d="M0 0Q13.0 -14.5 0 -32.3Q-13.0 -14.5 0 0Z" fill="#d82448" opacity="1"/><path transform="translate(72.4 29.5) rotate(25)" d="M0 0Q12.3 -11.0 0 -24.5Q-12.3 -11.0 0 0Z" fill="#dc1238" opacity="1"/><path transform="translate(72.4 29.5) rotate(110)" d="M0 0Q12.3 -14.2 0 -31.6Q-12.3 -14.2 0 0Z" fill="#e01a40" opacity="1"/><path transform="translate(72.4 29.5) rotate(206)" d="M0 0Q12.3 -12.6 0 -28.1Q-12.3 -12.6 0 0Z" fill="#dc1238" opacity="1"/><path transform="translate(72.4 29.5) rotate(296)" d="M0 0Q12.3 -11.2 0 -24.9Q-12.3 -11.2 0 0Z" fill="#dc1238" opacity="1"/><path transform="translate(99.2 12.8) rotate(266)" d="M0 0Q11.8 -10.1 0 -22.6Q-11.8 -10.1 0 0Z" fill="#8a3060" opacity="1"/><path transform="translate(99.2 12.8) rotate(357)" d="M0 0Q11.8 -12.9 0 -28.6Q-11.8 -12.9 0 0Z" fill="#8a3060" opacity="1"/><path transform="translate(99.2 12.8) rotate(455)" d="M0 0Q11.8 -11.9 0 -26.4Q-11.8 -11.9 0 0Z" fill="#8a3060" opacity="1"/><path transform="translate(99.2 12.8) rotate(554)" d="M0 0Q11.8 -13.2 0 -29.3Q-11.8 -13.2 0 0Z" fill="#8a3060" opacity="1"/><path transform="translate(138.4 19.9) rotate(179)" d="M0 0Q14.2 -14.0 0 -31.1Q-14.2 -14.0 0 0Z" fill="#e01a40" opacity="1"/><path transform="translate(138.4 19.9) rotate(251)" d="M0 0Q14.2 -12.8 0 -28.3Q-14.2 -12.8 0 0Z" fill="#c8103a" opacity="1"/><path transform="translate(138.4 19.9) rotate(316)" d="M0 0Q14.2 -14.1 0 -31.4Q-14.2 -14.1 0 0Z" fill="#d82448" opacity="1"/><path transform="translate(138.4 19.9) rotate(388)" d="M0 0Q14.2 -13.9 0 -30.9Q-14.2 -13.9 0 0Z" fill="#c8103a" opacity="1"/><path transform="translate(138.4 19.9) rotate(471)" d="M0 0Q14.2 -15.3 0 -34.1Q-14.2 -15.3 0 0Z" fill="#c8103a" opacity="1"/><path transform="translate(159.1 12.4) rotate(120)" d="M0 0Q10.9 -10.6 0 -23.5Q-10.9 -10.6 0 0Z" fill="#c8103a" opacity="1"/><path transform="translate(159.1 12.4) rotate(209)" d="M0 0Q10.9 -11.0 0 -24.4Q-10.9 -11.0 0 0Z" fill="#c01a48" opacity="1"/><path transform="translate(159.1 12.4) rotate(311)" d="M0 0Q10.9 -11.1 0 -24.6Q-10.9 -11.1 0 0Z" fill="#c01a48" opacity="1"/><path transform="translate(159.1 12.4) rotate(389)" d="M0 0Q10.9 -9.6 0 -21.4Q-10.9 -9.6 0 0Z" fill="#c01a48" opacity="1"/><path transform="translate(197.6 9.0) rotate(76)" d="M0 0Q13.5 -14.9 0 -33.2Q-13.5 -14.9 0 0Z" fill="#e01a40" opacity="1"/><path transform="translate(197.6 9.0) rotate(161)" d="M0 0Q13.5 -12.8 0 -28.5Q-13.5 -12.8 0 0Z" fill="#c01a48" opacity="1"/><path transform="translate(197.6 9.0) rotate(231)" d="M0 0Q13.5 -15.2 0 -33.8Q-13.5 -15.2 0 0Z" fill="#c01a48" opacity="1"/><path transform="translate(197.6 9.0) rotate(305)" d="M0 0Q13.5 -13.5 0 -29.9Q-13.5 -13.5 0 0Z" fill="#c01a48" opacity="1"/><path transform="translate(197.6 9.0) rotate(377)" d="M0 0Q13.5 -15.6 0 -34.6Q-13.5 -15.6 0 0Z" fill="#c01a48" opacity="1"/><path transform="translate(236.1 21.6) rotate(236)" d="M0 0Q9.7 -11.3 0 -25.0Q-9.7 -11.3 0 0Z" fill="#c8103a" opacity="1"/><path transform="translate(236.1 21.6) rotate(316)" d="M0 0Q9.7 -8.4 0 -18.8Q-9.7 -8.4 0 0Z" fill="#c8103a" opacity="1"/><path transform="translate(236.1 21.6) rotate(380)" d="M0 0Q9.7 -9.0 0 -20.1Q-9.7 -9.0 0 0Z" fill="#c8103a" opacity="1"/><path transform="translate(236.1 21.6) rotate(457)" d="M0 0Q9.7 -8.5 0 -18.9Q-9.7 -8.5 0 0Z" fill="#c8103a" opacity="1"/><path transform="translate(236.1 21.6) rotate(546)" d="M0 0Q9.7 -10.3 0 -23.0Q-9.7 -10.3 0 0Z" fill="#dc1238" opacity="1"/><path transform="translate(249.6 25.7) rotate(99)" d="M0 0Q10.4 -11.7 0 -26.1Q-10.4 -11.7 0 0Z" fill="#a05a78" opacity="1"/><path transform="translate(249.6 25.7) rotate(157)" d="M0 0Q10.4 -11.5 0 -25.5Q-10.4 -11.5 0 0Z" fill="#6a5a60" opacity="1"/><path transform="translate(249.6 25.7) rotate(242)" d="M0 0Q10.4 -9.2 0 -20.4Q-10.4 -9.2 0 0Z" fill="#a05a78" opacity="1"/><path transform="translate(249.6 25.7) rotate(303)" d="M0 0Q10.4 -11.4 0 -25.3Q-10.4 -11.4 0 0Z" fill="#a05a78" opacity="1"/><path transform="translate(249.6 25.7) rotate(379)" d="M0 0Q10.4 -9.0 0 -19.9Q-10.4 -9.0 0 0Z" fill="#a05a78" opacity="1"/><path transform="translate(279.5 14.5) rotate(242)" d="M0 0Q10.7 -9.8 0 -21.9Q-10.7 -9.8 0 0Z" fill="#7a4a68" opacity="1"/><path transform="translate(279.5 14.5) rotate(345)" d="M0 0Q10.7 -10.1 0 -22.6Q-10.7 -10.1 0 0Z" fill="#6a8462" opacity="1"/><path transform="translate(279.5 14.5) rotate(413)" d="M0 0Q10.7 -12.6 0 -27.9Q-10.7 -12.6 0 0Z" fill="#7a4a68" opacity="1"/><path transform="translate(279.5 14.5) rotate(525)" d="M0 0Q10.7 -12.3 0 -27.3Q-10.7 -12.3 0 0Z" fill="#7a4a68" opacity="1"/><path transform="translate(330.3 9.8) rotate(97)" d="M0 0Q12.3 -11.0 0 -24.4Q-12.3 -11.0 0 0Z" fill="#8a6a70" opacity="1"/><path transform="translate(330.3 9.8) rotate(181)" d="M0 0Q12.3 -14.0 0 -31.1Q-12.3 -14.0 0 0Z" fill="#8a6a70" opacity="1"/><path transform="translate(330.3 9.8) rotate(272)" d="M0 0Q12.3 -14.3 0 -31.7Q-12.3 -14.3 0 0Z" fill="#8a6a70" opacity="1"/><path transform="translate(330.3 9.8) rotate(369)" d="M0 0Q12.3 -13.4 0 -29.8Q-12.3 -13.4 0 0Z" fill="#8a6a70" opacity="1"/><path transform="translate(348.0 17.0) rotate(127)" d="M0 0Q9.8 -9.2 0 -20.5Q-9.8 -9.2 0 0Z" fill="#6a5a60" opacity="1"/><path transform="translate(348.0 17.0) rotate(196)" d="M0 0Q9.8 -11.2 0 -24.9Q-9.8 -11.2 0 0Z" fill="#b04060" opacity="1"/><path transform="translate(348.0 17.0) rotate(287)" d="M0 0Q9.8 -11.1 0 -24.8Q-9.8 -11.1 0 0Z" fill="#6a5a60" opacity="1"/><path transform="translate(348.0 17.0) rotate(382)" d="M0 0Q9.8 -10.5 0 -23.4Q-9.8 -10.5 0 0Z" fill="#b04060" opacity="1"/><path transform="translate(383.2 11.6) rotate(121)" d="M0 0Q13.7 -15.8 0 -35.0Q-13.7 -15.8 0 0Z" fill="#e03a60" opacity="1"/><path transform="translate(383.2 11.6) rotate(214)" d="M0 0Q13.7 -14.9 0 -33.1Q-13.7 -14.9 0 0Z" fill="#e03a60" opacity="1"/><path transform="translate(383.2 11.6) rotate(283)" d="M0 0Q13.7 -14.4 0 -32.1Q-13.7 -14.4 0 0Z" fill="#e03a60" opacity="1"/><path transform="translate(383.2 11.6) rotate(375)" d="M0 0Q13.7 -12.0 0 -26.6Q-13.7 -12.0 0 0Z" fill="#e03a60" opacity="1"/><path transform="translate(420.2 11.1) rotate(101)" d="M0 0Q11.3 -12.1 0 -26.9Q-11.3 -12.1 0 0Z" fill="#c81848" opacity="1"/><path transform="translate(420.2 11.1) rotate(170)" d="M0 0Q11.3 -9.9 0 -22.1Q-11.3 -9.9 0 0Z" fill="#c81848" opacity="1"/><path transform="translate(420.2 11.1) rotate(251)" d="M0 0Q11.3 -10.5 0 -23.3Q-11.3 -10.5 0 0Z" fill="#b02050" opacity="1"/><path transform="translate(420.2 11.1) rotate(333)" d="M0 0Q11.3 -11.2 0 -24.9Q-11.3 -11.2 0 0Z" fill="#e03a60" opacity="1"/><path transform="translate(420.2 11.1) rotate(396)" d="M0 0Q11.3 -10.3 0 -22.9Q-11.3 -10.3 0 0Z" fill="#c81848" opacity="1"/><path transform="translate(-8.7 45.7) rotate(79)" d="M0 0Q11.2 -10.5 0 -23.4Q-11.2 -10.5 0 0Z" fill="#e01a40" opacity="1"/><path transform="translate(-8.7 45.7) rotate(199)" d="M0 0Q11.2 -11.6 0 -25.9Q-11.2 -11.6 0 0Z" fill="#e01a40" opacity="1"/><path transform="translate(-8.7 45.7) rotate(309)" d="M0 0Q11.2 -11.5 0 -25.5Q-11.2 -11.5 0 0Z" fill="#e01a40" opacity="1"/><path transform="translate(27.0 58.4) rotate(134)" d="M0 0Q11.4 -10.3 0 -22.8Q-11.4 -10.3 0 0Z" fill="#e8143a" opacity="1"/><path transform="translate(27.0 58.4) rotate(209)" d="M0 0Q11.4 -13.3 0 -29.6Q-11.4 -13.3 0 0Z" fill="#8a3060" opacity="1"/><path transform="translate(27.0 58.4) rotate(282)" d="M0 0Q11.4 -13.2 0 -29.3Q-11.4 -13.2 0 0Z" fill="#8a3060" opacity="1"/><path transform="translate(27.0 58.4) rotate(365)" d="M0 0Q11.4 -11.5 0 -25.6Q-11.4 -11.5 0 0Z" fill="#8a3060" opacity="1"/><path transform="translate(27.0 58.4) rotate(425)" d="M0 0Q11.4 -10.4 0 -23.0Q-11.4 -10.4 0 0Z" fill="#c8103a" opacity="1"/><path transform="translate(50.5 54.4) rotate(222)" d="M0 0Q12.0 -12.5 0 -27.8Q-12.0 -12.5 0 0Z" fill="#c8103a" opacity="1"/><path transform="translate(50.5 54.4) rotate(312)" d="M0 0Q12.0 -12.7 0 -28.3Q-12.0 -12.7 0 0Z" fill="#e01a40" opacity="1"/><path transform="translate(50.5 54.4) rotate(414)" d="M0 0Q12.0 -13.3 0 -29.5Q-12.0 -13.3 0 0Z" fill="#dc1238" opacity="1"/><path transform="translate(50.5 54.4) rotate(493)" d="M0 0Q12.0 -13.9 0 -31.0Q-12.0 -13.9 0 0Z" fill="#dc1238" opacity="1"/><path transform="translate(72.6 44.3) rotate(197)" d="M0 0Q14.1 -14.4 0 -32.1Q-14.1 -14.4 0 0Z" fill="#8a3060" opacity="1"/><path transform="translate(72.6 44.3) rotate(285)" d="M0 0Q14.1 -13.9 0 -30.9Q-14.1 -13.9 0 0Z" fill="#d82448" opacity="1"/><path transform="translate(72.6 44.3) rotate(377)" d="M0 0Q14.1 -12.9 0 -28.8Q-14.1 -12.9 0 0Z" fill="#d82448" opacity="1"/><path transform="translate(72.6 44.3) rotate(473)" d="M0 0Q14.1 -12.4 0 -27.6Q-14.1 -12.4 0 0Z" fill="#d82448" opacity="1"/><path transform="translate(103.5 48.2) rotate(248)" d="M0 0Q11.1 -10.5 0 -23.4Q-11.1 -10.5 0 0Z" fill="#e01a40" opacity="1"/><path transform="translate(103.5 48.2) rotate(331)" d="M0 0Q11.1 -11.2 0 -25.0Q-11.1 -11.2 0 0Z" fill="#e01a40" opacity="1"/><path transform="translate(103.5 48.2) rotate(387)" d="M0 0Q11.1 -10.3 0 -22.9Q-11.1 -10.3 0 0Z" fill="#c8103a" opacity="1"/><path transform="translate(103.5 48.2) rotate(460)" d="M0 0Q11.1 -9.9 0 -21.9Q-11.1 -9.9 0 0Z" fill="#d82448" opacity="1"/><path transform="translate(103.5 48.2) rotate(541)" d="M0 0Q11.1 -12.7 0 -28.2Q-11.1 -12.7 0 0Z" fill="#e01a40" opacity="1"/><path transform="translate(139.6 59.8) rotate(334)" d="M0 0Q9.4 -10.2 0 -22.6Q-9.4 -10.2 0 0Z" fill="#c8103a" opacity="1"/><path transform="translate(139.6 59.8) rotate(444)" d="M0 0Q9.4 -10.2 0 -22.6Q-9.4 -10.2 0 0Z" fill="#c8103a" opacity="1"/><path transform="translate(139.6 59.8) rotate(567)" d="M0 0Q9.4 -8.3 0 -18.4Q-9.4 -8.3 0 0Z" fill="#c8103a" opacity="1"/><path transform="translate(162.0 42.6) rotate(180)" d="M0 0Q13.5 -12.0 0 -26.7Q-13.5 -12.0 0 0Z" fill="#e01a40" opacity="1"/><path transform="translate(162.0 42.6) rotate(248)" d="M0 0Q13.5 -13.4 0 -29.7Q-13.5 -13.4 0 0Z" fill="#e01a40" opacity="1"/><path transform="translate(162.0 42.6) rotate(358)" d="M0 0Q13.5 -14.8 0 -33.0Q-13.5 -14.8 0 0Z" fill="#e01a40" opacity="1"/><path transform="translate(162.0 42.6) rotate(435)" d="M0 0Q13.5 -15.1 0 -33.6Q-13.5 -15.1 0 0Z" fill="#d82448" opacity="1"/><path transform="translate(198.4 39.2) rotate(341)" d="M0 0Q11.1 -11.0 0 -24.3Q-11.1 -11.0 0 0Z" fill="#b01038" opacity="1"/><path transform="translate(198.4 39.2) rotate(459)" d="M0 0Q11.1 -10.8 0 -24.1Q-11.1 -10.8 0 0Z" fill="#e8143a" opacity="1"/><path transform="translate(198.4 39.2) rotate(570)" d="M0 0Q11.1 -10.4 0 -23.1Q-11.1 -10.4 0 0Z" fill="#e8143a" opacity="1"/><path transform="translate(235.9 59.6) rotate(350)" d="M0 0Q10.6 -10.0 0 -22.2Q-10.6 -10.0 0 0Z" fill="#6a8462" opacity="1"/><path transform="translate(235.9 59.6) rotate(405)" d="M0 0Q10.6 -9.1 0 -20.3Q-10.6 -9.1 0 0Z" fill="#74886a" opacity="1"/><path transform="translate(235.9 59.6) rotate(482)" d="M0 0Q10.6 -12.3 0 -27.3Q-10.6 -12.3 0 0Z" fill="#6a8462" opacity="1"/><path transform="translate(235.9 59.6) rotate(572)" d="M0 0Q10.6 -9.9 0 -22.0Q-10.6 -9.9 0 0Z" fill="#6a8462" opacity="1"/><path transform="translate(235.9 59.6) rotate(631)" d="M0 0Q10.6 -12.2 0 -27.1Q-10.6 -12.2 0 0Z" fill="#6a8462" opacity="1"/><path transform="translate(296.5 52.6) rotate(128)" d="M0 0Q11.8 -11.7 0 -26.0Q-11.8 -11.7 0 0Z" fill="#74886a" opacity="1"/><path transform="translate(296.5 52.6) rotate(206)" d="M0 0Q11.8 -12.2 0 -27.1Q-11.8 -12.2 0 0Z" fill="#74886a" opacity="1"/><path transform="translate(296.5 52.6) rotate(266)" d="M0 0Q11.8 -10.5 0 -23.4Q-11.8 -10.5 0 0Z" fill="#74886a" opacity="1"/><path transform="translate(296.5 52.6) rotate(336)" d="M0 0Q11.8 -10.9 0 -24.3Q-11.8 -10.9 0 0Z" fill="#74886a" opacity="1"/><path transform="translate(296.5 52.6) rotate(416)" d="M0 0Q11.8 -10.8 0 -24.0Q-11.8 -10.8 0 0Z" fill="#5e7058" opacity="1"/><path transform="translate(311.2 49.1) rotate(189)" d="M0 0Q13.2 -12.4 0 -27.6Q-13.2 -12.4 0 0Z" fill="#74886a" opacity="1"/><path transform="translate(311.2 49.1) rotate(260)" d="M0 0Q13.2 -13.1 0 -29.2Q-13.2 -13.1 0 0Z" fill="#74886a" opacity="1"/><path transform="translate(311.2 49.1) rotate(330)" d="M0 0Q13.2 -12.5 0 -27.7Q-13.2 -12.5 0 0Z" fill="#74886a" opacity="1"/><path transform="translate(311.2 49.1) rotate(420)" d="M0 0Q13.2 -11.6 0 -25.7Q-13.2 -11.6 0 0Z" fill="#74886a" opacity="1"/><path transform="translate(311.2 49.1) rotate(476)" d="M0 0Q13.2 -13.5 0 -30.0Q-13.2 -13.5 0 0Z" fill="#74886a" opacity="1"/><path transform="translate(353.6 40.4) rotate(-9)" d="M0 0Q13.8 -12.4 0 -27.6Q-13.8 -12.4 0 0Z" fill="#e02850" opacity="1"/><path transform="translate(353.6 40.4) rotate(114)" d="M0 0Q13.8 -16.0 0 -35.6Q-13.8 -16.0 0 0Z" fill="#a06070" opacity="1"/><path transform="translate(353.6 40.4) rotate(239)" d="M0 0Q13.8 -14.6 0 -32.3Q-13.8 -14.6 0 0Z" fill="#e02850" opacity="1"/><path transform="translate(386.6 54.0) rotate(252)" d="M0 0Q9.4 -11.1 0 -24.7Q-9.4 -11.1 0 0Z" fill="#e0204e" opacity="1"/><path transform="translate(386.6 54.0) rotate(334)" d="M0 0Q9.4 -10.6 0 -23.4Q-9.4 -10.6 0 0Z" fill="#e0204e" opacity="1"/><path transform="translate(386.6 54.0) rotate(443)" d="M0 0Q9.4 -9.2 0 -20.5Q-9.4 -9.2 0 0Z" fill="#e0204e" opacity="1"/><path transform="translate(386.6 54.0) rotate(528)" d="M0 0Q9.4 -8.2 0 -18.2Q-9.4 -8.2 0 0Z" fill="#e0204e" opacity="1"/><path transform="translate(409.9 49.6) rotate(231)" d="M0 0Q9.7 -9.6 0 -21.3Q-9.7 -9.6 0 0Z" fill="#b02050" opacity="1"/><path transform="translate(409.9 49.6) rotate(354)" d="M0 0Q9.7 -11.3 0 -25.1Q-9.7 -11.3 0 0Z" fill="#b02050" opacity="1"/><path transform="translate(409.9 49.6) rotate(475)" d="M0 0Q9.7 -9.4 0 -20.9Q-9.7 -9.4 0 0Z" fill="#b02050" opacity="1"/><path transform="translate(-12.0 88.7) rotate(59)" d="M0 0Q10.3 -9.2 0 -20.4Q-10.3 -9.2 0 0Z" fill="#e01a40" opacity="1"/><path transform="translate(-12.0 88.7) rotate(133)" d="M0 0Q10.3 -10.0 0 -22.2Q-10.3 -10.0 0 0Z" fill="#e01a40" opacity="1"/><path transform="translate(-12.0 88.7) rotate(222)" d="M0 0Q10.3 -9.0 0 -19.9Q-10.3 -9.0 0 0Z" fill="#e01a40" opacity="1"/><path transform="translate(-12.0 88.7) rotate(278)" d="M0 0Q10.3 -9.1 0 -20.2Q-10.3 -9.1 0 0Z" fill="#e01a40" opacity="1"/><path transform="translate(-12.0 88.7) rotate(362)" d="M0 0Q10.3 -10.5 0 -23.3Q-10.3 -10.5 0 0Z" fill="#e01a40" opacity="1"/><path transform="translate(11.5 74.8) rotate(47)" d="M0 0Q10.8 -12.4 0 -27.5Q-10.8 -12.4 0 0Z" fill="#c8103a" opacity="1"/><path transform="translate(11.5 74.8) rotate(125)" d="M0 0Q10.8 -11.4 0 -25.4Q-10.8 -11.4 0 0Z" fill="#c8103a" opacity="1"/><path transform="translate(11.5 74.8) rotate(209)" d="M0 0Q10.8 -11.4 0 -25.4Q-10.8 -11.4 0 0Z" fill="#e01a40" opacity="1"/><path transform="translate(11.5 74.8) rotate(318)" d="M0 0Q10.8 -11.3 0 -25.2Q-10.8 -11.3 0 0Z" fill="#c8103a" opacity="1"/><path transform="translate(42.7 79.4) rotate(329)" d="M0 0Q11.1 -9.6 0 -21.4Q-11.1 -9.6 0 0Z" fill="#c8103a" opacity="1"/><path transform="translate(42.7 79.4) rotate(459)" d="M0 0Q11.1 -11.8 0 -26.3Q-11.1 -11.8 0 0Z" fill="#e8143a" opacity="1"/><path transform="translate(42.7 79.4) rotate(574)" d="M0 0Q11.1 -11.1 0 -24.6Q-11.1 -11.1 0 0Z" fill="#e01a40" opacity="1"/><path transform="translate(88.4 86.7) rotate(88)" d="M0 0Q11.5 -12.1 0 -27.0Q-11.5 -12.1 0 0Z" fill="#b01038" opacity="1"/><path transform="translate(88.4 86.7) rotate(179)" d="M0 0Q11.5 -12.7 0 -28.2Q-11.5 -12.7 0 0Z" fill="#b01038" opacity="1"/><path transform="translate(88.4 86.7) rotate(276)" d="M0 0Q11.5 -10.5 0 -23.4Q-11.5 -10.5 0 0Z" fill="#b01038" opacity="1"/><path transform="translate(88.4 86.7) rotate(359)" d="M0 0Q11.5 -10.3 0 -22.9Q-11.5 -10.3 0 0Z" fill="#b01038" opacity="1"/><path transform="translate(108.3 70.2) rotate(20)" d="M0 0Q9.7 -8.5 0 -18.9Q-9.7 -8.5 0 0Z" fill="#c01a48" opacity="1"/><path transform="translate(108.3 70.2) rotate(93)" d="M0 0Q9.7 -8.4 0 -18.6Q-9.7 -8.4 0 0Z" fill="#e01a40" opacity="1"/><path transform="translate(108.3 70.2) rotate(148)" d="M0 0Q9.7 -10.4 0 -23.2Q-9.7 -10.4 0 0Z" fill="#e01a40" opacity="1"/><path transform="translate(108.3 70.2) rotate(221)" d="M0 0Q9.7 -11.0 0 -24.5Q-9.7 -11.0 0 0Z" fill="#e01a40" opacity="1"/><path transform="translate(108.3 70.2) rotate(298)" d="M0 0Q9.7 -10.4 0 -23.1Q-9.7 -10.4 0 0Z" fill="#e01a40" opacity="1"/><path transform="translate(145.3 73.3) rotate(90)" d="M0 0Q13.8 -16.1 0 -35.8Q-13.8 -16.1 0 0Z" fill="#d82448" opacity="1"/><path transform="translate(145.3 73.3) rotate(180)" d="M0 0Q13.8 -14.6 0 -32.4Q-13.8 -14.6 0 0Z" fill="#d82448" opacity="1"/><path transform="translate(145.3 73.3) rotate(264)" d="M0 0Q13.8 -12.7 0 -28.2Q-13.8 -12.7 0 0Z" fill="#d82448" opacity="1"/><path transform="translate(145.3 73.3) rotate(358)" d="M0 0Q13.8 -13.1 0 -29.0Q-13.8 -13.1 0 0Z" fill="#d82448" opacity="1"/><path transform="translate(165.9 77.0) rotate(275)" d="M0 0Q14.1 -15.2 0 -33.8Q-14.1 -15.2 0 0Z" fill="#b01038" opacity="1"/><path transform="translate(165.9 77.0) rotate(406)" d="M0 0Q14.1 -14.5 0 -32.3Q-14.1 -14.5 0 0Z" fill="#b01038" opacity="1"/><path transform="translate(165.9 77.0) rotate(525)" d="M0 0Q14.1 -13.3 0 -29.5Q-14.1 -13.3 0 0Z" fill="#b01038" opacity="1"/><path transform="translate(211.8 81.9) rotate(160)" d="M0 0Q10.7 -12.5 0 -27.9Q-10.7 -12.5 0 0Z" fill="#e8143a" opacity="1"/><path transform="translate(211.8 81.9) rotate(288)" d="M0 0Q10.7 -11.7 0 -26.1Q-10.7 -11.7 0 0Z" fill="#b01038" opacity="1"/><path transform="translate(211.8 81.9) rotate(405)" d="M0 0Q10.7 -10.2 0 -22.7Q-10.7 -10.2 0 0Z" fill="#e8143a" opacity="1"/><path transform="translate(233.0 78.0) rotate(164)" d="M0 0Q9.4 -8.3 0 -18.5Q-9.4 -8.3 0 0Z" fill="#6a8462" opacity="1"/><path transform="translate(233.0 78.0) rotate(244)" d="M0 0Q9.4 -9.8 0 -21.7Q-9.4 -9.8 0 0Z" fill="#6a8462" opacity="1"/><path transform="translate(233.0 78.0) rotate(322)" d="M0 0Q9.4 -9.9 0 -22.0Q-9.4 -9.9 0 0Z" fill="#6a8462" opacity="1"/><path transform="translate(233.0 78.0) rotate(391)" d="M0 0Q9.4 -10.8 0 -24.1Q-9.4 -10.8 0 0Z" fill="#6a8462" opacity="1"/><path transform="translate(233.0 78.0) rotate(458)" d="M0 0Q9.4 -8.3 0 -18.5Q-9.4 -8.3 0 0Z" fill="#6a8462" opacity="1"/><path transform="translate(263.3 88.9) rotate(97)" d="M0 0Q12.5 -13.3 0 -29.6Q-12.5 -13.3 0 0Z" fill="#6a8462" opacity="1"/><path transform="translate(263.3 88.9) rotate(214)" d="M0 0Q12.5 -11.7 0 -26.0Q-12.5 -11.7 0 0Z" fill="#5e7058" opacity="1"/><path transform="translate(263.3 88.9) rotate(345)" d="M0 0Q12.5 -12.8 0 -28.5Q-12.5 -12.8 0 0Z" fill="#6a8462" opacity="1"/><path transform="translate(287.7 73.7) rotate(-3)" d="M0 0Q10.0 -10.2 0 -22.6Q-10.0 -10.2 0 0Z" fill="#a05a78" opacity="1"/><path transform="translate(287.7 73.7) rotate(80)" d="M0 0Q10.0 -10.2 0 -22.6Q-10.0 -10.2 0 0Z" fill="#8a6a70" opacity="1"/><path transform="translate(287.7 73.7) rotate(138)" d="M0 0Q10.0 -11.7 0 -26.0Q-10.0 -11.7 0 0Z" fill="#a05a78" opacity="1"/><path transform="translate(287.7 73.7) rotate(226)" d="M0 0Q10.0 -10.3 0 -22.8Q-10.0 -10.3 0 0Z" fill="#a05a78" opacity="1"/><path transform="translate(287.7 73.7) rotate(289)" d="M0 0Q10.0 -11.5 0 -25.5Q-10.0 -11.5 0 0Z" fill="#a05a78" opacity="1"/><path transform="translate(390.2 90.6) rotate(239)" d="M0 0Q12.7 -13.5 0 -30.0Q-12.7 -13.5 0 0Z" fill="#c81848" opacity="1"/><path transform="translate(390.2 90.6) rotate(312)" d="M0 0Q12.7 -14.5 0 -32.2Q-12.7 -14.5 0 0Z" fill="#e03a60" opacity="1"/><path transform="translate(390.2 90.6) rotate(361)" d="M0 0Q12.7 -11.8 0 -26.3Q-12.7 -11.8 0 0Z" fill="#e03a60" opacity="1"/><path transform="translate(390.2 90.6) rotate(451)" d="M0 0Q12.7 -11.7 0 -25.9Q-12.7 -11.7 0 0Z" fill="#c81848" opacity="1"/><path transform="translate(390.2 90.6) rotate(514)" d="M0 0Q12.7 -12.4 0 -27.6Q-12.7 -12.4 0 0Z" fill="#e03a60" opacity="1"/><path transform="translate(418.4 90.1) rotate(202)" d="M0 0Q12.8 -13.9 0 -30.9Q-12.8 -13.9 0 0Z" fill="#b02050" opacity="1"/><path transform="translate(418.4 90.1) rotate(285)" d="M0 0Q12.8 -11.8 0 -26.2Q-12.8 -11.8 0 0Z" fill="#b02050" opacity="1"/><path transform="translate(418.4 90.1) rotate(376)" d="M0 0Q12.8 -14.7 0 -32.6Q-12.8 -14.7 0 0Z" fill="#b02050" opacity="1"/><path transform="translate(418.4 90.1) rotate(455)" d="M0 0Q12.8 -11.4 0 -25.3Q-12.8 -11.4 0 0Z" fill="#b02050" opacity="1"/><path transform="translate(0.3 106.3) rotate(21)" d="M0 0Q12.8 -13.4 0 -29.7Q-12.8 -13.4 0 0Z" fill="#e8143a" opacity="1"/><path transform="translate(0.3 106.3) rotate(84)" d="M0 0Q12.8 -14.6 0 -32.4Q-12.8 -14.6 0 0Z" fill="#c01a48" opacity="1"/><path transform="translate(0.3 106.3) rotate(149)" d="M0 0Q12.8 -11.4 0 -25.3Q-12.8 -11.4 0 0Z" fill="#e01a40" opacity="1"/><path transform="translate(0.3 106.3) rotate(224)" d="M0 0Q12.8 -11.1 0 -24.6Q-12.8 -11.1 0 0Z" fill="#e8143a" opacity="1"/><path transform="translate(0.3 106.3) rotate(311)" d="M0 0Q12.8 -14.3 0 -31.8Q-12.8 -14.3 0 0Z" fill="#dc1238" opacity="1"/><path transform="translate(23.2 104.9) rotate(271)" d="M0 0Q10.8 -10.2 0 -22.7Q-10.8 -10.2 0 0Z" fill="#d82448" opacity="1"/><path transform="translate(23.2 104.9) rotate(387)" d="M0 0Q10.8 -12.5 0 -27.7Q-10.8 -12.5 0 0Z" fill="#b01038" opacity="1"/><path transform="translate(23.2 104.9) rotate(519)" d="M0 0Q10.8 -11.0 0 -24.4Q-10.8 -11.0 0 0Z" fill="#d82448" opacity="1"/><path transform="translate(44.9 115.9) rotate(176)" d="M0 0Q11.6 -12.6 0 -28.0Q-11.6 -12.6 0 0Z" fill="#b01038" opacity="1"/><path transform="translate(44.9 115.9) rotate(315)" d="M0 0Q11.6 -11.0 0 -24.5Q-11.6 -11.0 0 0Z" fill="#b01038" opacity="1"/><path transform="translate(44.9 115.9) rotate(425)" d="M0 0Q11.6 -11.0 0 -24.5Q-11.6 -11.0 0 0Z" fill="#b01038" opacity="1"/><path transform="translate(86.0 99.3) rotate(261)" d="M0 0Q12.2 -12.8 0 -28.3Q-12.2 -12.8 0 0Z" fill="#8a3060" opacity="1"/><path transform="translate(86.0 99.3) rotate(362)" d="M0 0Q12.2 -12.4 0 -27.6Q-12.2 -12.4 0 0Z" fill="#c8103a" opacity="1"/><path transform="translate(86.0 99.3) rotate(481)" d="M0 0Q12.2 -10.8 0 -24.0Q-12.2 -10.8 0 0Z" fill="#8a3060" opacity="1"/><path transform="translate(116.9 114.7) rotate(134)" d="M0 0Q13.7 -14.6 0 -32.5Q-13.7 -14.6 0 0Z" fill="#e01a40" opacity="1"/><path transform="translate(116.9 114.7) rotate(215)" d="M0 0Q13.7 -13.7 0 -30.4Q-13.7 -13.7 0 0Z" fill="#e01a40" opacity="1"/><path transform="translate(116.9 114.7) rotate(309)" d="M0 0Q13.7 -16.1 0 -35.8Q-13.7 -16.1 0 0Z" fill="#e01a40" opacity="1"/><path transform="translate(116.9 114.7) rotate(401)" d="M0 0Q13.7 -14.1 0 -31.4Q-13.7 -14.1 0 0Z" fill="#e01a40" opacity="1"/><path transform="translate(146.1 116.1) rotate(123)" d="M0 0Q12.6 -12.6 0 -27.9Q-12.6 -12.6 0 0Z" fill="#8a3060" opacity="1"/><path transform="translate(146.1 116.1) rotate(244)" d="M0 0Q12.6 -11.3 0 -25.1Q-12.6 -11.3 0 0Z" fill="#8a3060" opacity="1"/><path transform="translate(146.1 116.1) rotate(357)" d="M0 0Q12.6 -12.8 0 -28.5Q-12.6 -12.8 0 0Z" fill="#c8103a" opacity="1"/><path transform="translate(164.4 116.1) rotate(257)" d="M0 0Q12.3 -14.3 0 -31.8Q-12.3 -14.3 0 0Z" fill="#b01038" opacity="1"/><path transform="translate(164.4 116.1) rotate(375)" d="M0 0Q12.3 -11.2 0 -24.8Q-12.3 -11.2 0 0Z" fill="#dc1238" opacity="1"/><path transform="translate(164.4 116.1) rotate(504)" d="M0 0Q12.3 -11.1 0 -24.7Q-12.3 -11.1 0 0Z" fill="#b01038" opacity="1"/><path transform="translate(191.6 105.3) rotate(37)" d="M0 0Q10.3 -10.1 0 -22.5Q-10.3 -10.1 0 0Z" fill="#d82448" opacity="1"/><path transform="translate(191.6 105.3) rotate(166)" d="M0 0Q10.3 -10.5 0 -23.3Q-10.3 -10.5 0 0Z" fill="#d82448" opacity="1"/><path transform="translate(191.6 105.3) rotate(283)" d="M0 0Q10.3 -9.3 0 -20.6Q-10.3 -9.3 0 0Z" fill="#d82448" opacity="1"/><path transform="translate(258.3 111.8) rotate(87)" d="M0 0Q13.5 -13.6 0 -30.2Q-13.5 -13.6 0 0Z" fill="#c03058" opacity="1"/><path transform="translate(258.3 111.8) rotate(150)" d="M0 0Q13.5 -12.0 0 -26.7Q-13.5 -12.0 0 0Z" fill="#c03058" opacity="1"/><path transform="translate(258.3 111.8) rotate(224)" d="M0 0Q13.5 -12.7 0 -28.2Q-13.5 -12.7 0 0Z" fill="#8a6a70" opacity="1"/><path transform="translate(258.3 111.8) rotate(296)" d="M0 0Q13.5 -14.3 0 -31.8Q-13.5 -14.3 0 0Z" fill="#c03058" opacity="1"/><path transform="translate(258.3 111.8) rotate(368)" d="M0 0Q13.5 -15.6 0 -34.8Q-13.5 -15.6 0 0Z" fill="#c03058" opacity="1"/><path transform="translate(282.4 113.7) rotate(170)" d="M0 0Q10.5 -10.8 0 -23.9Q-10.5 -10.8 0 0Z" fill="#a05a78" opacity="1"/><path transform="translate(282.4 113.7) rotate(287)" d="M0 0Q10.5 -10.8 0 -24.1Q-10.5 -10.8 0 0Z" fill="#6a8462" opacity="1"/><path transform="translate(282.4 113.7) rotate(422)" d="M0 0Q10.5 -11.2 0 -24.8Q-10.5 -11.2 0 0Z" fill="#6a8462" opacity="1"/><path transform="translate(343.0 114.4) rotate(38)" d="M0 0Q12.5 -10.9 0 -24.3Q-12.5 -10.9 0 0Z" fill="#906068" opacity="1"/><path transform="translate(343.0 114.4) rotate(106)" d="M0 0Q12.5 -13.0 0 -28.9Q-12.5 -13.0 0 0Z" fill="#906068" opacity="1"/><path transform="translate(343.0 114.4) rotate(179)" d="M0 0Q12.5 -12.3 0 -27.3Q-12.5 -12.3 0 0Z" fill="#906068" opacity="1"/><path transform="translate(343.0 114.4) rotate(271)" d="M0 0Q12.5 -12.5 0 -27.8Q-12.5 -12.5 0 0Z" fill="#b04060" opacity="1"/><path transform="translate(343.0 114.4) rotate(324)" d="M0 0Q12.5 -13.9 0 -30.9Q-12.5 -13.9 0 0Z" fill="#74886a" opacity="1"/><path transform="translate(383.2 109.3) rotate(342)" d="M0 0Q11.6 -10.4 0 -23.1Q-11.6 -10.4 0 0Z" fill="#e03a60" opacity="1"/><path transform="translate(383.2 109.3) rotate(445)" d="M0 0Q11.6 -13.1 0 -29.1Q-11.6 -13.1 0 0Z" fill="#e03a60" opacity="1"/><path transform="translate(383.2 109.3) rotate(521)" d="M0 0Q11.6 -10.9 0 -24.2Q-11.6 -10.9 0 0Z" fill="#e03a60" opacity="1"/><path transform="translate(383.2 109.3) rotate(615)" d="M0 0Q11.6 -10.0 0 -22.1Q-11.6 -10.0 0 0Z" fill="#e03a60" opacity="1"/><path transform="translate(415.3 104.7) rotate(176)" d="M0 0Q12.5 -14.4 0 -32.0Q-12.5 -14.4 0 0Z" fill="#b02050" opacity="1"/><path transform="translate(415.3 104.7) rotate(271)" d="M0 0Q12.5 -14.0 0 -31.1Q-12.5 -14.0 0 0Z" fill="#b02050" opacity="1"/><path transform="translate(415.3 104.7) rotate(362)" d="M0 0Q12.5 -12.8 0 -28.4Q-12.5 -12.8 0 0Z" fill="#e0204e" opacity="1"/><path transform="translate(415.3 104.7) rotate(439)" d="M0 0Q12.5 -13.3 0 -29.6Q-12.5 -13.3 0 0Z" fill="#b02050" opacity="1"/><path transform="translate(-17.0 129.7) rotate(205)" d="M0 0Q13.2 -15.1 0 -33.5Q-13.2 -15.1 0 0Z" fill="#e01a40" opacity="1"/><path transform="translate(-17.0 129.7) rotate(335)" d="M0 0Q13.2 -15.0 0 -33.4Q-13.2 -15.0 0 0Z" fill="#e01a40" opacity="1"/><path transform="translate(-17.0 129.7) rotate(451)" d="M0 0Q13.2 -14.6 0 -32.5Q-13.2 -14.6 0 0Z" fill="#c01a48" opacity="1"/><path transform="translate(28.1 132.7) rotate(261)" d="M0 0Q12.0 -10.9 0 -24.1Q-12.0 -10.9 0 0Z" fill="#dc1238" opacity="1"/><path transform="translate(28.1 132.7) rotate(357)" d="M0 0Q12.0 -12.1 0 -26.9Q-12.0 -12.1 0 0Z" fill="#dc1238" opacity="1"/><path transform="translate(28.1 132.7) rotate(439)" d="M0 0Q12.0 -12.2 0 -27.2Q-12.0 -12.2 0 0Z" fill="#dc1238" opacity="1"/><path transform="translate(28.1 132.7) rotate(538)" d="M0 0Q12.0 -10.9 0 -24.3Q-12.0 -10.9 0 0Z" fill="#e8143a" opacity="1"/><path transform="translate(45.7 144.7) rotate(172)" d="M0 0Q14.3 -13.9 0 -30.9Q-14.3 -13.9 0 0Z" fill="#e01a40" opacity="1"/><path transform="translate(45.7 144.7) rotate(261)" d="M0 0Q14.3 -12.5 0 -27.7Q-14.3 -12.5 0 0Z" fill="#e01a40" opacity="1"/><path transform="translate(45.7 144.7) rotate(353)" d="M0 0Q14.3 -14.6 0 -32.4Q-14.3 -14.6 0 0Z" fill="#dc1238" opacity="1"/><path transform="translate(45.7 144.7) rotate(437)" d="M0 0Q14.3 -13.2 0 -29.4Q-14.3 -13.2 0 0Z" fill="#e8143a" opacity="1"/><path transform="translate(78.0 131.0) rotate(116)" d="M0 0Q13.1 -13.0 0 -29.0Q-13.1 -13.0 0 0Z" fill="#c01a48" opacity="1"/><path transform="translate(78.0 131.0) rotate(196)" d="M0 0Q13.1 -12.7 0 -28.3Q-13.1 -12.7 0 0Z" fill="#d82448" opacity="1"/><path transform="translate(78.0 131.0) rotate(267)" d="M0 0Q13.1 -15.4 0 -34.2Q-13.1 -15.4 0 0Z" fill="#c01a48" opacity="1"/><path transform="translate(78.0 131.0) rotate(348)" d="M0 0Q13.1 -12.1 0 -26.9Q-13.1 -12.1 0 0Z" fill="#c01a48" opacity="1"/><path transform="translate(78.0 131.0) rotate(411)" d="M0 0Q13.1 -12.1 0 -26.8Q-13.1 -12.1 0 0Z" fill="#c01a48" opacity="1"/><path transform="translate(115.1 131.1) rotate(360)" d="M0 0Q13.7 -13.1 0 -29.0Q-13.7 -13.1 0 0Z" fill="#c01a48" opacity="1"/><path transform="translate(115.1 131.1) rotate(437)" d="M0 0Q13.7 -15.8 0 -35.1Q-13.7 -15.8 0 0Z" fill="#c01a48" opacity="1"/><path transform="translate(115.1 131.1) rotate(541)" d="M0 0Q13.7 -15.2 0 -33.8Q-13.7 -15.2 0 0Z" fill="#c01a48" opacity="1"/><path transform="translate(115.1 131.1) rotate(639)" d="M0 0Q13.7 -14.5 0 -32.1Q-13.7 -14.5 0 0Z" fill="#c01a48" opacity="1"/><path transform="translate(143.0 144.7) rotate(69)" d="M0 0Q12.4 -14.1 0 -31.3Q-12.4 -14.1 0 0Z" fill="#8a3060" opacity="1"/><path transform="translate(143.0 144.7) rotate(147)" d="M0 0Q12.4 -14.3 0 -31.8Q-12.4 -14.3 0 0Z" fill="#8a3060" opacity="1"/><path transform="translate(143.0 144.7) rotate(209)" d="M0 0Q12.4 -13.8 0 -30.6Q-12.4 -13.8 0 0Z" fill="#e01a40" opacity="1"/><path transform="translate(143.0 144.7) rotate(294)" d="M0 0Q12.4 -11.8 0 -26.3Q-12.4 -11.8 0 0Z" fill="#8a3060" opacity="1"/><path transform="translate(143.0 144.7) rotate(363)" d="M0 0Q12.4 -12.3 0 -27.4Q-12.4 -12.3 0 0Z" fill="#8a3060" opacity="1"/><path transform="translate(173.4 150.4) rotate(24)" d="M0 0Q12.1 -10.5 0 -23.2Q-12.1 -10.5 0 0Z" fill="#e01a40" opacity="1"/><path transform="translate(173.4 150.4) rotate(131)" d="M0 0Q12.1 -14.1 0 -31.3Q-12.1 -14.1 0 0Z" fill="#e01a40" opacity="1"/><path transform="translate(173.4 150.4) rotate(266)" d="M0 0Q12.1 -12.0 0 -26.7Q-12.1 -12.0 0 0Z" fill="#e01a40" opacity="1"/><path transform="translate(190.4 143.5) rotate(-3)" d="M0 0Q12.7 -11.8 0 -26.1Q-12.7 -11.8 0 0Z" fill="#dc1238" opacity="1"/><path transform="translate(190.4 143.5) rotate(117)" d="M0 0Q12.7 -12.0 0 -26.7Q-12.7 -12.0 0 0Z" fill="#e8143a" opacity="1"/><path transform="translate(190.4 143.5) rotate(247)" d="M0 0Q12.7 -13.9 0 -30.9Q-12.7 -13.9 0 0Z" fill="#e8143a" opacity="1"/><path transform="translate(240.1 136.8) rotate(57)" d="M0 0Q12.4 -14.4 0 -31.9Q-12.4 -14.4 0 0Z" fill="#d82448" opacity="1"/><path transform="translate(240.1 136.8) rotate(166)" d="M0 0Q12.4 -10.7 0 -23.7Q-12.4 -10.7 0 0Z" fill="#e8143a" opacity="1"/><path transform="translate(240.1 136.8) rotate(280)" d="M0 0Q12.4 -13.9 0 -30.9Q-12.4 -13.9 0 0Z" fill="#d82448" opacity="1"/><path transform="translate(249.9 135.5) rotate(307)" d="M0 0Q9.5 -9.5 0 -21.2Q-9.5 -9.5 0 0Z" fill="#c03058" opacity="1"/><path transform="translate(249.9 135.5) rotate(404)" d="M0 0Q9.5 -10.6 0 -23.6Q-9.5 -10.6 0 0Z" fill="#c03058" opacity="1"/><path transform="translate(249.9 135.5) rotate(487)" d="M0 0Q9.5 -10.1 0 -22.5Q-9.5 -10.1 0 0Z" fill="#c03058" opacity="1"/><path transform="translate(249.9 135.5) rotate(578)" d="M0 0Q9.5 -10.6 0 -23.5Q-9.5 -10.6 0 0Z" fill="#c03058" opacity="1"/><path transform="translate(300.7 146.8) rotate(24)" d="M0 0Q10.9 -11.5 0 -25.5Q-10.9 -11.5 0 0Z" fill="#8a6a70" opacity="1"/><path transform="translate(300.7 146.8) rotate(89)" d="M0 0Q10.9 -12.5 0 -27.7Q-10.9 -12.5 0 0Z" fill="#c03058" opacity="1"/><path transform="translate(300.7 146.8) rotate(163)" d="M0 0Q10.9 -11.5 0 -25.5Q-10.9 -11.5 0 0Z" fill="#c03058" opacity="1"/><path transform="translate(300.7 146.8) rotate(247)" d="M0 0Q10.9 -11.8 0 -26.2Q-10.9 -11.8 0 0Z" fill="#6a5a60" opacity="1"/><path transform="translate(300.7 146.8) rotate(306)" d="M0 0Q10.9 -9.9 0 -22.0Q-10.9 -9.9 0 0Z" fill="#c03058" opacity="1"/><path transform="translate(330.1 146.3) rotate(59)" d="M0 0Q10.6 -10.3 0 -22.9Q-10.6 -10.3 0 0Z" fill="#5e7058" opacity="1"/><path transform="translate(330.1 146.3) rotate(113)" d="M0 0Q10.6 -11.8 0 -26.3Q-10.6 -11.8 0 0Z" fill="#8a6a70" opacity="1"/><path transform="translate(330.1 146.3) rotate(187)" d="M0 0Q10.6 -10.2 0 -22.6Q-10.6 -10.2 0 0Z" fill="#a05a78" opacity="1"/><path transform="translate(330.1 146.3) rotate(256)" d="M0 0Q10.6 -11.5 0 -25.6Q-10.6 -11.5 0 0Z" fill="#8a6a70" opacity="1"/><path transform="translate(330.1 146.3) rotate(349)" d="M0 0Q10.6 -9.1 0 -20.3Q-10.6 -9.1 0 0Z" fill="#8a6a70" opacity="1"/><path transform="translate(347.2 141.0) rotate(17)" d="M0 0Q11.9 -12.0 0 -26.6Q-11.9 -12.0 0 0Z" fill="#906068" opacity="1"/><path transform="translate(347.2 141.0) rotate(115)" d="M0 0Q11.9 -10.9 0 -24.2Q-11.9 -10.9 0 0Z" fill="#c03058" opacity="1"/><path transform="translate(347.2 141.0) rotate(195)" d="M0 0Q11.9 -12.4 0 -27.5Q-11.9 -12.4 0 0Z" fill="#906068" opacity="1"/><path transform="translate(347.2 141.0) rotate(289)" d="M0 0Q11.9 -11.1 0 -24.7Q-11.9 -11.1 0 0Z" fill="#8a6a70" opacity="1"/><path transform="translate(390.1 139.8) rotate(156)" d="M0 0Q10.8 -11.4 0 -25.3Q-10.8 -11.4 0 0Z" fill="#e0204e" opacity="1"/><path transform="translate(390.1 139.8) rotate(277)" d="M0 0Q10.8 -12.3 0 -27.4Q-10.8 -12.3 0 0Z" fill="#e0204e" opacity="1"/><path transform="translate(390.1 139.8) rotate(408)" d="M0 0Q10.8 -10.0 0 -22.3Q-10.8 -10.0 0 0Z" fill="#e0204e" opacity="1"/><path transform="translate(420.2 134.7) rotate(202)" d="M0 0Q10.5 -9.6 0 -21.4Q-10.5 -9.6 0 0Z" fill="#e0204e" opacity="1"/><path transform="translate(420.2 134.7) rotate(276)" d="M0 0Q10.5 -10.9 0 -24.2Q-10.5 -10.9 0 0Z" fill="#e0204e" opacity="1"/><path transform="translate(420.2 134.7) rotate(366)" d="M0 0Q10.5 -12.2 0 -27.2Q-10.5 -12.2 0 0Z" fill="#e0204e" opacity="1"/><path transform="translate(420.2 134.7) rotate(439)" d="M0 0Q10.5 -11.0 0 -24.5Q-10.5 -11.0 0 0Z" fill="#e0204e" opacity="1"/><path transform="translate(420.2 134.7) rotate(499)" d="M0 0Q10.5 -12.3 0 -27.2Q-10.5 -12.3 0 0Z" fill="#e0204e" opacity="1"/><path transform="translate(24.1 167.4) rotate(358)" d="M0 0Q10.1 -11.6 0 -25.8Q-10.1 -11.6 0 0Z" fill="#e8143a" opacity="1"/><path transform="translate(24.1 167.4) rotate(429)" d="M0 0Q10.1 -9.5 0 -21.1Q-10.1 -9.5 0 0Z" fill="#e8143a" opacity="1"/><path transform="translate(24.1 167.4) rotate(492)" d="M0 0Q10.1 -8.8 0 -19.7Q-10.1 -8.8 0 0Z" fill="#8a3060" opacity="1"/><path transform="translate(24.1 167.4) rotate(555)" d="M0 0Q10.1 -10.9 0 -24.1Q-10.1 -10.9 0 0Z" fill="#c8103a" opacity="1"/><path transform="translate(24.1 167.4) rotate(631)" d="M0 0Q10.1 -11.1 0 -24.7Q-10.1 -11.1 0 0Z" fill="#c8103a" opacity="1"/><path transform="translate(40.5 165.8) rotate(165)" d="M0 0Q10.4 -9.0 0 -20.0Q-10.4 -9.0 0 0Z" fill="#8a3060" opacity="1"/><path transform="translate(40.5 165.8) rotate(298)" d="M0 0Q10.4 -9.1 0 -20.2Q-10.4 -9.1 0 0Z" fill="#8a3060" opacity="1"/><path transform="translate(40.5 165.8) rotate(424)" d="M0 0Q10.4 -12.1 0 -26.9Q-10.4 -12.1 0 0Z" fill="#8a3060" opacity="1"/><path transform="translate(88.8 179.3) rotate(34)" d="M0 0Q12.4 -13.9 0 -30.9Q-12.4 -13.9 0 0Z" fill="#e8143a" opacity="1"/><path transform="translate(88.8 179.3) rotate(124)" d="M0 0Q12.4 -11.2 0 -24.9Q-12.4 -11.2 0 0Z" fill="#e8143a" opacity="1"/><path transform="translate(88.8 179.3) rotate(208)" d="M0 0Q12.4 -13.5 0 -30.0Q-12.4 -13.5 0 0Z" fill="#e8143a" opacity="1"/><path transform="translate(88.8 179.3) rotate(306)" d="M0 0Q12.4 -14.1 0 -31.3Q-12.4 -14.1 0 0Z" fill="#e8143a" opacity="1"/><path transform="translate(104.4 167.9) rotate(293)" d="M0 0Q10.6 -10.7 0 -23.7Q-10.6 -10.7 0 0Z" fill="#e01a40" opacity="1"/><path transform="translate(104.4 167.9) rotate(384)" d="M0 0Q10.6 -11.2 0 -24.9Q-10.6 -11.2 0 0Z" fill="#e01a40" opacity="1"/><path transform="translate(104.4 167.9) rotate(489)" d="M0 0Q10.6 -10.7 0 -23.7Q-10.6 -10.7 0 0Z" fill="#c01a48" opacity="1"/><path transform="translate(104.4 167.9) rotate(567)" d="M0 0Q10.6 -9.7 0 -21.6Q-10.6 -9.7 0 0Z" fill="#e01a40" opacity="1"/><path transform="translate(136.7 181.8) rotate(25)" d="M0 0Q13.8 -12.4 0 -27.6Q-13.8 -12.4 0 0Z" fill="#d82448" opacity="1"/><path transform="translate(136.7 181.8) rotate(128)" d="M0 0Q13.8 -14.0 0 -31.2Q-13.8 -14.0 0 0Z" fill="#e01a40" opacity="1"/><path transform="translate(136.7 181.8) rotate(215)" d="M0 0Q13.8 -15.3 0 -34.0Q-13.8 -15.3 0 0Z" fill="#e01a40" opacity="1"/><path transform="translate(136.7 181.8) rotate(316)" d="M0 0Q13.8 -13.4 0 -29.7Q-13.8 -13.4 0 0Z" fill="#e01a40" opacity="1"/><path transform="translate(159.0 167.8) rotate(296)" d="M0 0Q12.8 -11.4 0 -25.2Q-12.8 -11.4 0 0Z" fill="#c8103a" opacity="1"/><path transform="translate(159.0 167.8) rotate(378)" d="M0 0Q12.8 -12.1 0 -26.9Q-12.8 -12.1 0 0Z" fill="#c8103a" opacity="1"/><path transform="translate(159.0 167.8) rotate(441)" d="M0 0Q12.8 -13.9 0 -30.9Q-12.8 -13.9 0 0Z" fill="#c8103a" opacity="1"/><path transform="translate(159.0 167.8) rotate(527)" d="M0 0Q12.8 -11.8 0 -26.3Q-12.8 -11.8 0 0Z" fill="#c8103a" opacity="1"/><path transform="translate(159.0 167.8) rotate(581)" d="M0 0Q12.8 -14.5 0 -32.1Q-12.8 -14.5 0 0Z" fill="#e01a40" opacity="1"/><path transform="translate(210.0 170.4) rotate(240)" d="M0 0Q9.3 -10.6 0 -23.6Q-9.3 -10.6 0 0Z" fill="#dc1238" opacity="1"/><path transform="translate(210.0 170.4) rotate(314)" d="M0 0Q9.3 -10.5 0 -23.3Q-9.3 -10.5 0 0Z" fill="#dc1238" opacity="1"/><path transform="translate(210.0 170.4) rotate(407)" d="M0 0Q9.3 -9.1 0 -20.2Q-9.3 -9.1 0 0Z" fill="#dc1238" opacity="1"/><path transform="translate(210.0 170.4) rotate(502)" d="M0 0Q9.3 -9.5 0 -21.2Q-9.3 -9.5 0 0Z" fill="#dc1238" opacity="1"/><path transform="translate(228.7 170.4) rotate(304)" d="M0 0Q12.1 -10.8 0 -24.1Q-12.1 -10.8 0 0Z" fill="#e01a40" opacity="1"/><path transform="translate(228.7 170.4) rotate(389)" d="M0 0Q12.1 -10.5 0 -23.4Q-12.1 -10.5 0 0Z" fill="#e01a40" opacity="1"/><path transform="translate(228.7 170.4) rotate(481)" d="M0 0Q12.1 -11.4 0 -25.2Q-12.1 -11.4 0 0Z" fill="#e01a40" opacity="1"/><path transform="translate(228.7 170.4) rotate(554)" d="M0 0Q12.1 -11.1 0 -24.6Q-12.1 -11.1 0 0Z" fill="#e01a40" opacity="1"/><path transform="translate(255.5 171.3) rotate(342)" d="M0 0Q10.6 -10.6 0 -23.6Q-10.6 -10.6 0 0Z" fill="#c8103a" opacity="1"/><path transform="translate(255.5 171.3) rotate(399)" d="M0 0Q10.6 -10.2 0 -22.8Q-10.6 -10.2 0 0Z" fill="#c8103a" opacity="1"/><path transform="translate(255.5 171.3) rotate(468)" d="M0 0Q10.6 -10.0 0 -22.2Q-10.6 -10.0 0 0Z" fill="#c8103a" opacity="1"/><path transform="translate(255.5 171.3) rotate(549)" d="M0 0Q10.6 -11.6 0 -25.9Q-10.6 -11.6 0 0Z" fill="#c8103a" opacity="1"/><path transform="translate(255.5 171.3) rotate(612)" d="M0 0Q10.6 -12.1 0 -26.8Q-10.6 -12.1 0 0Z" fill="#c8103a" opacity="1"/><path transform="translate(291.0 163.5) rotate(155)" d="M0 0Q14.0 -15.1 0 -33.7Q-14.0 -15.1 0 0Z" fill="#8a6a70" opacity="1"/><path transform="translate(291.0 163.5) rotate(259)" d="M0 0Q14.0 -12.2 0 -27.1Q-14.0 -12.2 0 0Z" fill="#8a6a70" opacity="1"/><path transform="translate(291.0 163.5) rotate(358)" d="M0 0Q14.0 -13.7 0 -30.3Q-14.0 -13.7 0 0Z" fill="#8a6a70" opacity="1"/><path transform="translate(291.0 163.5) rotate(434)" d="M0 0Q14.0 -15.8 0 -35.1Q-14.0 -15.8 0 0Z" fill="#b04060" opacity="1"/><path transform="translate(321.5 181.7) rotate(206)" d="M0 0Q10.0 -11.3 0 -25.2Q-10.0 -11.3 0 0Z" fill="#7a4a68" opacity="1"/><path transform="translate(321.5 181.7) rotate(296)" d="M0 0Q10.0 -8.9 0 -19.8Q-10.0 -8.9 0 0Z" fill="#7a4a68" opacity="1"/><path transform="translate(321.5 181.7) rotate(374)" d="M0 0Q10.0 -9.2 0 -20.4Q-10.0 -9.2 0 0Z" fill="#7a4a68" opacity="1"/><path transform="translate(321.5 181.7) rotate(476)" d="M0 0Q10.0 -9.9 0 -22.0Q-10.0 -9.9 0 0Z" fill="#7a4a68" opacity="1"/><path transform="translate(347.5 181.9) rotate(356)" d="M0 0Q13.6 -12.9 0 -28.6Q-13.6 -12.9 0 0Z" fill="#c03058" opacity="1"/><path transform="translate(347.5 181.9) rotate(474)" d="M0 0Q13.6 -12.1 0 -26.9Q-13.6 -12.1 0 0Z" fill="#c03058" opacity="1"/><path transform="translate(347.5 181.9) rotate(584)" d="M0 0Q13.6 -12.7 0 -28.2Q-13.6 -12.7 0 0Z" fill="#6a8462" opacity="1"/><path transform="translate(368.9 160.7) rotate(24)" d="M0 0Q9.7 -8.7 0 -19.3Q-9.7 -8.7 0 0Z" fill="#e03a60" opacity="1"/><path transform="translate(368.9 160.7) rotate(85)" d="M0 0Q9.7 -9.5 0 -21.2Q-9.7 -9.5 0 0Z" fill="#c81848" opacity="1"/><path transform="translate(368.9 160.7) rotate(161)" d="M0 0Q9.7 -8.6 0 -19.0Q-9.7 -8.6 0 0Z" fill="#c81848" opacity="1"/><path transform="translate(368.9 160.7) rotate(239)" d="M0 0Q9.7 -10.4 0 -23.2Q-9.7 -10.4 0 0Z" fill="#b02050" opacity="1"/><path transform="translate(368.9 160.7) rotate(303)" d="M0 0Q9.7 -10.0 0 -22.2Q-9.7 -10.0 0 0Z" fill="#c81848" opacity="1"/><path transform="translate(-21.3 196.0) rotate(341)" d="M0 0Q13.9 -14.4 0 -32.0Q-13.9 -14.4 0 0Z" fill="#b01038" opacity="1"/><path transform="translate(-21.3 196.0) rotate(439)" d="M0 0Q13.9 -16.3 0 -36.3Q-13.9 -16.3 0 0Z" fill="#e8143a" opacity="1"/><path transform="translate(-21.3 196.0) rotate(524)" d="M0 0Q13.9 -14.4 0 -31.9Q-13.9 -14.4 0 0Z" fill="#e01a40" opacity="1"/><path transform="translate(-21.3 196.0) rotate(622)" d="M0 0Q13.9 -14.9 0 -33.0Q-13.9 -14.9 0 0Z" fill="#e8143a" opacity="1"/><path transform="translate(20.4 208.0) rotate(192)" d="M0 0Q11.3 -10.5 0 -23.2Q-11.3 -10.5 0 0Z" fill="#e01a40" opacity="1"/><path transform="translate(20.4 208.0) rotate(262)" d="M0 0Q11.3 -12.8 0 -28.4Q-11.3 -12.8 0 0Z" fill="#e01a40" opacity="1"/><path transform="translate(20.4 208.0) rotate(322)" d="M0 0Q11.3 -10.7 0 -23.8Q-11.3 -10.7 0 0Z" fill="#8a3060" opacity="1"/><path transform="translate(20.4 208.0) rotate(407)" d="M0 0Q11.3 -12.3 0 -27.3Q-11.3 -12.3 0 0Z" fill="#e01a40" opacity="1"/><path transform="translate(20.4 208.0) rotate(473)" d="M0 0Q11.3 -11.2 0 -24.9Q-11.3 -11.2 0 0Z" fill="#e01a40" opacity="1"/><path transform="translate(71.6 208.4) rotate(36)" d="M0 0Q10.7 -11.0 0 -24.4Q-10.7 -11.0 0 0Z" fill="#8a3060" opacity="1"/><path transform="translate(71.6 208.4) rotate(132)" d="M0 0Q10.7 -9.2 0 -20.4Q-10.7 -9.2 0 0Z" fill="#8a3060" opacity="1"/><path transform="translate(71.6 208.4) rotate(226)" d="M0 0Q10.7 -10.7 0 -23.8Q-10.7 -10.7 0 0Z" fill="#e01a40" opacity="1"/><path transform="translate(71.6 208.4) rotate(302)" d="M0 0Q10.7 -9.7 0 -21.5Q-10.7 -9.7 0 0Z" fill="#8a3060" opacity="1"/><path transform="translate(111.8 202.0) rotate(109)" d="M0 0Q14.1 -16.2 0 -36.0Q-14.1 -16.2 0 0Z" fill="#c8103a" opacity="1"/><path transform="translate(111.8 202.0) rotate(177)" d="M0 0Q14.1 -14.6 0 -32.5Q-14.1 -14.6 0 0Z" fill="#c8103a" opacity="1"/><path transform="translate(111.8 202.0) rotate(261)" d="M0 0Q14.1 -14.5 0 -32.2Q-14.1 -14.5 0 0Z" fill="#d82448" opacity="1"/><path transform="translate(111.8 202.0) rotate(345)" d="M0 0Q14.1 -14.4 0 -32.0Q-14.1 -14.4 0 0Z" fill="#c8103a" opacity="1"/><path transform="translate(111.8 202.0) rotate(409)" d="M0 0Q14.1 -13.7 0 -30.4Q-14.1 -13.7 0 0Z" fill="#c8103a" opacity="1"/><path transform="translate(142.3 196.4) rotate(187)" d="M0 0Q11.1 -11.6 0 -25.8Q-11.1 -11.6 0 0Z" fill="#e01a40" opacity="1"/><path transform="translate(142.3 196.4) rotate(318)" d="M0 0Q11.1 -11.0 0 -24.4Q-11.1 -11.0 0 0Z" fill="#8a3060" opacity="1"/><path transform="translate(142.3 196.4) rotate(436)" d="M0 0Q11.1 -12.0 0 -26.7Q-11.1 -12.0 0 0Z" fill="#b01038" opacity="1"/><path transform="translate(175.9 190.2) rotate(31)" d="M0 0Q10.1 -9.8 0 -21.8Q-10.1 -9.8 0 0Z" fill="#c01a48" opacity="1"/><path transform="translate(175.9 190.2) rotate(127)" d="M0 0Q10.1 -11.8 0 -26.3Q-10.1 -11.8 0 0Z" fill="#c01a48" opacity="1"/><path transform="translate(175.9 190.2) rotate(210)" d="M0 0Q10.1 -11.3 0 -25.2Q-10.1 -11.3 0 0Z" fill="#c01a48" opacity="1"/><path transform="translate(175.9 190.2) rotate(290)" d="M0 0Q10.1 -9.3 0 -20.6Q-10.1 -9.3 0 0Z" fill="#e01a40" opacity="1"/><path transform="translate(233.3 189.0) rotate(106)" d="M0 0Q9.3 -9.9 0 -22.1Q-9.3 -9.9 0 0Z" fill="#e8143a" opacity="1"/><path transform="translate(233.3 189.0) rotate(175)" d="M0 0Q9.3 -9.6 0 -21.3Q-9.3 -9.6 0 0Z" fill="#c01a48" opacity="1"/><path transform="translate(233.3 189.0) rotate(249)" d="M0 0Q9.3 -9.5 0 -21.2Q-9.3 -9.5 0 0Z" fill="#c01a48" opacity="1"/><path transform="translate(233.3 189.0) rotate(338)" d="M0 0Q9.3 -9.2 0 -20.4Q-9.3 -9.2 0 0Z" fill="#c01a48" opacity="1"/><path transform="translate(233.3 189.0) rotate(389)" d="M0 0Q9.3 -10.2 0 -22.7Q-9.3 -10.2 0 0Z" fill="#c01a48" opacity="1"/><path transform="translate(250.6 190.4) rotate(286)" d="M0 0Q13.3 -14.7 0 -32.7Q-13.3 -14.7 0 0Z" fill="#e01a40" opacity="1"/><path transform="translate(250.6 190.4) rotate(364)" d="M0 0Q13.3 -12.6 0 -28.0Q-13.3 -12.6 0 0Z" fill="#b01038" opacity="1"/><path transform="translate(250.6 190.4) rotate(429)" d="M0 0Q13.3 -15.1 0 -33.5Q-13.3 -15.1 0 0Z" fill="#e01a40" opacity="1"/><path transform="translate(250.6 190.4) rotate(523)" d="M0 0Q13.3 -12.2 0 -27.2Q-13.3 -12.2 0 0Z" fill="#e01a40" opacity="1"/><path transform="translate(250.6 190.4) rotate(587)" d="M0 0Q13.3 -12.3 0 -27.4Q-13.3 -12.3 0 0Z" fill="#e01a40" opacity="1"/><path transform="translate(287.5 206.3) rotate(88)" d="M0 0Q10.0 -8.6 0 -19.2Q-10.0 -8.6 0 0Z" fill="#6a8462" opacity="1"/><path transform="translate(287.5 206.3) rotate(215)" d="M0 0Q10.0 -10.0 0 -22.1Q-10.0 -10.0 0 0Z" fill="#6a8462" opacity="1"/><path transform="translate(287.5 206.3) rotate(320)" d="M0 0Q10.0 -9.4 0 -20.9Q-10.0 -9.4 0 0Z" fill="#74886a" opacity="1"/><path transform="translate(317.4 205.2) rotate(309)" d="M0 0Q13.2 -12.9 0 -28.6Q-13.2 -12.9 0 0Z" fill="#6a8462" opacity="1"/><path transform="translate(317.4 205.2) rotate(398)" d="M0 0Q13.2 -13.0 0 -29.0Q-13.2 -13.0 0 0Z" fill="#6a5a60" opacity="1"/><path transform="translate(317.4 205.2) rotate(492)" d="M0 0Q13.2 -15.1 0 -33.4Q-13.2 -15.1 0 0Z" fill="#6a8462" opacity="1"/><path transform="translate(317.4 205.2) rotate(581)" d="M0 0Q13.2 -15.4 0 -34.3Q-13.2 -15.4 0 0Z" fill="#6a8462" opacity="1"/><path transform="translate(348.1 209.9) rotate(113)" d="M0 0Q10.6 -11.5 0 -25.6Q-10.6 -11.5 0 0Z" fill="#a05a78" opacity="1"/><path transform="translate(348.1 209.9) rotate(204)" d="M0 0Q10.6 -12.0 0 -26.6Q-10.6 -12.0 0 0Z" fill="#6a8462" opacity="1"/><path transform="translate(348.1 209.9) rotate(295)" d="M0 0Q10.6 -12.0 0 -26.6Q-10.6 -12.0 0 0Z" fill="#6a8462" opacity="1"/><path transform="translate(348.1 209.9) rotate(401)" d="M0 0Q10.6 -10.3 0 -23.0Q-10.6 -10.3 0 0Z" fill="#6a8462" opacity="1"/><path transform="translate(410.1 193.5) rotate(92)" d="M0 0Q11.9 -10.7 0 -23.8Q-11.9 -10.7 0 0Z" fill="#8a6a68" opacity="1"/><path transform="translate(410.1 193.5) rotate(190)" d="M0 0Q11.9 -10.6 0 -23.5Q-11.9 -10.6 0 0Z" fill="#8a6a68" opacity="1"/><path transform="translate(410.1 193.5) rotate(282)" d="M0 0Q11.9 -10.3 0 -23.0Q-11.9 -10.3 0 0Z" fill="#b82848" opacity="1"/><path transform="translate(410.1 193.5) rotate(369)" d="M0 0Q11.9 -10.3 0 -22.9Q-11.9 -10.3 0 0Z" fill="#8a6a68" opacity="1"/><path transform="translate(-4.9 234.7) rotate(64)" d="M0 0Q12.1 -11.5 0 -25.6Q-12.1 -11.5 0 0Z" fill="#dc1238" opacity="1"/><path transform="translate(-4.9 234.7) rotate(177)" d="M0 0Q12.1 -11.2 0 -24.9Q-12.1 -11.2 0 0Z" fill="#dc1238" opacity="1"/><path transform="translate(-4.9 234.7) rotate(299)" d="M0 0Q12.1 -11.7 0 -26.1Q-12.1 -11.7 0 0Z" fill="#d82448" opacity="1"/><path transform="translate(28.3 229.1) rotate(315)" d="M0 0Q9.4 -9.1 0 -20.2Q-9.4 -9.1 0 0Z" fill="#e01a40" opacity="1"/><path transform="translate(28.3 229.1) rotate(399)" d="M0 0Q9.4 -10.2 0 -22.6Q-9.4 -10.2 0 0Z" fill="#e01a40" opacity="1"/><path transform="translate(28.3 229.1) rotate(485)" d="M0 0Q9.4 -10.8 0 -24.0Q-9.4 -10.8 0 0Z" fill="#b01038" opacity="1"/><path transform="translate(28.3 229.1) rotate(571)" d="M0 0Q9.4 -8.9 0 -19.7Q-9.4 -8.9 0 0Z" fill="#e01a40" opacity="1"/><path transform="translate(52.6 223.3) rotate(211)" d="M0 0Q13.1 -12.5 0 -27.8Q-13.1 -12.5 0 0Z" fill="#c01a48" opacity="1"/><path transform="translate(52.6 223.3) rotate(312)" d="M0 0Q13.1 -14.7 0 -32.7Q-13.1 -14.7 0 0Z" fill="#c8103a" opacity="1"/><path transform="translate(52.6 223.3) rotate(401)" d="M0 0Q13.1 -15.1 0 -33.5Q-13.1 -15.1 0 0Z" fill="#d82448" opacity="1"/><path transform="translate(52.6 223.3) rotate(493)" d="M0 0Q13.1 -15.1 0 -33.6Q-13.1 -15.1 0 0Z" fill="#c8103a" opacity="1"/><path transform="translate(70.7 236.3) rotate(319)" d="M0 0Q14.1 -13.6 0 -30.2Q-14.1 -13.6 0 0Z" fill="#e8143a" opacity="1"/><path transform="translate(70.7 236.3) rotate(394)" d="M0 0Q14.1 -16.3 0 -36.2Q-14.1 -16.3 0 0Z" fill="#e8143a" opacity="1"/><path transform="translate(70.7 236.3) rotate(457)" d="M0 0Q14.1 -13.4 0 -29.8Q-14.1 -13.4 0 0Z" fill="#c8103a" opacity="1"/><path transform="translate(70.7 236.3) rotate(521)" d="M0 0Q14.1 -14.1 0 -31.4Q-14.1 -14.1 0 0Z" fill="#e01a40" opacity="1"/><path transform="translate(70.7 236.3) rotate(599)" d="M0 0Q14.1 -15.3 0 -33.9Q-14.1 -15.3 0 0Z" fill="#e8143a" opacity="1"/><path transform="translate(118.1 233.0) rotate(81)" d="M0 0Q13.5 -12.4 0 -27.6Q-13.5 -12.4 0 0Z" fill="#c01a48" opacity="1"/><path transform="translate(118.1 233.0) rotate(157)" d="M0 0Q13.5 -12.7 0 -28.2Q-13.5 -12.7 0 0Z" fill="#c01a48" opacity="1"/><path transform="translate(118.1 233.0) rotate(219)" d="M0 0Q13.5 -13.9 0 -31.0Q-13.5 -13.9 0 0Z" fill="#c8103a" opacity="1"/><path transform="translate(118.1 233.0) rotate(284)" d="M0 0Q13.5 -13.1 0 -29.2Q-13.5 -13.1 0 0Z" fill="#c01a48" opacity="1"/><path transform="translate(118.1 233.0) rotate(360)" d="M0 0Q13.5 -12.9 0 -28.7Q-13.5 -12.9 0 0Z" fill="#c01a48" opacity="1"/><path transform="translate(131.3 235.0) rotate(90)" d="M0 0Q9.9 -8.9 0 -19.8Q-9.9 -8.9 0 0Z" fill="#8a3060" opacity="1"/><path transform="translate(131.3 235.0) rotate(164)" d="M0 0Q9.9 -9.3 0 -20.6Q-9.9 -9.3 0 0Z" fill="#8a3060" opacity="1"/><path transform="translate(131.3 235.0) rotate(234)" d="M0 0Q9.9 -9.8 0 -21.9Q-9.9 -9.8 0 0Z" fill="#8a3060" opacity="1"/><path transform="translate(131.3 235.0) rotate(314)" d="M0 0Q9.9 -9.0 0 -20.0Q-9.9 -9.0 0 0Z" fill="#8a3060" opacity="1"/><path transform="translate(131.3 235.0) rotate(387)" d="M0 0Q9.9 -11.1 0 -24.8Q-9.9 -11.1 0 0Z" fill="#e01a40" opacity="1"/><path transform="translate(160.7 224.9) rotate(27)" d="M0 0Q10.2 -9.1 0 -20.3Q-10.2 -9.1 0 0Z" fill="#d82448" opacity="1"/><path transform="translate(160.7 224.9) rotate(108)" d="M0 0Q10.2 -10.0 0 -22.1Q-10.2 -10.0 0 0Z" fill="#d82448" opacity="1"/><path transform="translate(160.7 224.9) rotate(194)" d="M0 0Q10.2 -8.8 0 -19.6Q-10.2 -8.8 0 0Z" fill="#d82448" opacity="1"/><path transform="translate(160.7 224.9) rotate(304)" d="M0 0Q10.2 -11.2 0 -25.0Q-10.2 -11.2 0 0Z" fill="#dc1238" opacity="1"/><path transform="translate(196.0 235.7) rotate(340)" d="M0 0Q13.2 -11.7 0 -26.0Q-13.2 -11.7 0 0Z" fill="#c8103a" opacity="1"/><path transform="translate(196.0 235.7) rotate(429)" d="M0 0Q13.2 -14.4 0 -32.0Q-13.2 -14.4 0 0Z" fill="#c8103a" opacity="1"/><path transform="translate(196.0 235.7) rotate(529)" d="M0 0Q13.2 -11.6 0 -25.9Q-13.2 -11.6 0 0Z" fill="#c8103a" opacity="1"/><path transform="translate(196.0 235.7) rotate(620)" d="M0 0Q13.2 -13.0 0 -28.8Q-13.2 -13.0 0 0Z" fill="#c8103a" opacity="1"/><path transform="translate(221.5 226.8) rotate(328)" d="M0 0Q9.8 -10.3 0 -22.9Q-9.8 -10.3 0 0Z" fill="#e01a40" opacity="1"/><path transform="translate(221.5 226.8) rotate(392)" d="M0 0Q9.8 -9.5 0 -21.1Q-9.8 -9.5 0 0Z" fill="#e01a40" opacity="1"/><path transform="translate(221.5 226.8) rotate(460)" d="M0 0Q9.8 -11.2 0 -25.0Q-9.8 -11.2 0 0Z" fill="#e01a40" opacity="1"/><path transform="translate(221.5 226.8) rotate(547)" d="M0 0Q9.8 -8.5 0 -19.0Q-9.8 -8.5 0 0Z" fill="#e01a40" opacity="1"/><path transform="translate(221.5 226.8) rotate(601)" d="M0 0Q9.8 -11.2 0 -24.9Q-9.8 -11.2 0 0Z" fill="#e01a40" opacity="1"/><path transform="translate(270.7 229.9) rotate(101)" d="M0 0Q10.0 -10.6 0 -23.5Q-10.0 -10.6 0 0Z" fill="#d83a60" opacity="1"/><path transform="translate(270.7 229.9) rotate(177)" d="M0 0Q10.0 -10.1 0 -22.4Q-10.0 -10.1 0 0Z" fill="#e02850" opacity="1"/><path transform="translate(270.7 229.9) rotate(245)" d="M0 0Q10.0 -8.6 0 -19.2Q-10.0 -8.6 0 0Z" fill="#d83a60" opacity="1"/><path transform="translate(270.7 229.9) rotate(327)" d="M0 0Q10.0 -9.0 0 -20.0Q-10.0 -9.0 0 0Z" fill="#b82848" opacity="1"/><path transform="translate(270.7 229.9) rotate(386)" d="M0 0Q10.0 -10.8 0 -24.0Q-10.0 -10.8 0 0Z" fill="#d83a60" opacity="1"/><path transform="translate(312.2 235.4) rotate(289)" d="M0 0Q12.1 -12.4 0 -27.5Q-12.1 -12.4 0 0Z" fill="#8a6a68" opacity="1"/><path transform="translate(312.2 235.4) rotate(360)" d="M0 0Q12.1 -12.8 0 -28.5Q-12.1 -12.8 0 0Z" fill="#8a6a68" opacity="1"/><path transform="translate(312.2 235.4) rotate(425)" d="M0 0Q12.1 -12.7 0 -28.3Q-12.1 -12.7 0 0Z" fill="#8a6a68" opacity="1"/><path transform="translate(312.2 235.4) rotate(495)" d="M0 0Q12.1 -12.7 0 -28.3Q-12.1 -12.7 0 0Z" fill="#8a6a68" opacity="1"/><path transform="translate(312.2 235.4) rotate(573)" d="M0 0Q12.1 -14.1 0 -31.3Q-12.1 -14.1 0 0Z" fill="#8a6a68" opacity="1"/><path transform="translate(368.7 222.5) rotate(232)" d="M0 0Q11.1 -10.4 0 -23.1Q-11.1 -10.4 0 0Z" fill="#b82848" opacity="1"/><path transform="translate(368.7 222.5) rotate(321)" d="M0 0Q11.1 -11.4 0 -25.4Q-11.1 -11.4 0 0Z" fill="#a06070" opacity="1"/><path transform="translate(368.7 222.5) rotate(408)" d="M0 0Q11.1 -11.8 0 -26.2Q-11.1 -11.8 0 0Z" fill="#c83a58" opacity="1"/><path transform="translate(368.7 222.5) rotate(500)" d="M0 0Q11.1 -12.0 0 -26.7Q-11.1 -12.0 0 0Z" fill="#b82848" opacity="1"/><path transform="translate(403.4 229.0) rotate(332)" d="M0 0Q13.5 -15.4 0 -34.1Q-13.5 -15.4 0 0Z" fill="#6e8466" opacity="1"/><path transform="translate(403.4 229.0) rotate(401)" d="M0 0Q13.5 -14.3 0 -31.8Q-13.5 -14.3 0 0Z" fill="#d83a60" opacity="1"/><path transform="translate(403.4 229.0) rotate(482)" d="M0 0Q13.5 -13.6 0 -30.2Q-13.5 -13.6 0 0Z" fill="#d83a60" opacity="1"/><path transform="translate(403.4 229.0) rotate(548)" d="M0 0Q13.5 -15.8 0 -35.1Q-13.5 -15.8 0 0Z" fill="#d83a60" opacity="1"/><path transform="translate(403.4 229.0) rotate(608)" d="M0 0Q13.5 -12.0 0 -26.7Q-13.5 -12.0 0 0Z" fill="#d83a60" opacity="1"/><path transform="translate(-13.0 262.9) rotate(6)" d="M0 0Q11.6 -13.3 0 -29.5Q-11.6 -13.3 0 0Z" fill="#c8103a" opacity="1"/><path transform="translate(-13.0 262.9) rotate(77)" d="M0 0Q11.6 -12.0 0 -26.7Q-11.6 -12.0 0 0Z" fill="#c8103a" opacity="1"/><path transform="translate(-13.0 262.9) rotate(169)" d="M0 0Q11.6 -11.3 0 -25.0Q-11.6 -11.3 0 0Z" fill="#e01a40" opacity="1"/><path transform="translate(-13.0 262.9) rotate(239)" d="M0 0Q11.6 -13.0 0 -28.8Q-11.6 -13.0 0 0Z" fill="#e8143a" opacity="1"/><path transform="translate(-13.0 262.9) rotate(294)" d="M0 0Q11.6 -12.6 0 -28.1Q-11.6 -12.6 0 0Z" fill="#c8103a" opacity="1"/><path transform="translate(30.8 265.3) rotate(27)" d="M0 0Q13.3 -12.5 0 -27.7Q-13.3 -12.5 0 0Z" fill="#c8103a" opacity="1"/><path transform="translate(30.8 265.3) rotate(101)" d="M0 0Q13.3 -15.0 0 -33.3Q-13.3 -15.0 0 0Z" fill="#b01038" opacity="1"/><path transform="translate(30.8 265.3) rotate(182)" d="M0 0Q13.3 -11.5 0 -25.5Q-13.3 -11.5 0 0Z" fill="#b01038" opacity="1"/><path transform="translate(30.8 265.3) rotate(243)" d="M0 0Q13.3 -12.0 0 -26.7Q-13.3 -12.0 0 0Z" fill="#e01a40" opacity="1"/><path transform="translate(30.8 265.3) rotate(334)" d="M0 0Q13.3 -15.0 0 -33.2Q-13.3 -15.0 0 0Z" fill="#e01a40" opacity="1"/><path transform="translate(52.1 254.0) rotate(109)" d="M0 0Q9.4 -9.5 0 -21.1Q-9.4 -9.5 0 0Z" fill="#e8143a" opacity="1"/><path transform="translate(52.1 254.0) rotate(175)" d="M0 0Q9.4 -8.6 0 -19.1Q-9.4 -8.6 0 0Z" fill="#dc1238" opacity="1"/><path transform="translate(52.1 254.0) rotate(284)" d="M0 0Q9.4 -9.2 0 -20.5Q-9.4 -9.2 0 0Z" fill="#e8143a" opacity="1"/><path transform="translate(52.1 254.0) rotate(366)" d="M0 0Q9.4 -10.6 0 -23.5Q-9.4 -10.6 0 0Z" fill="#e8143a" opacity="1"/><path transform="translate(77.4 269.0) rotate(121)" d="M0 0Q13.7 -12.5 0 -27.8Q-13.7 -12.5 0 0Z" fill="#d82448" opacity="1"/><path transform="translate(77.4 269.0) rotate(235)" d="M0 0Q13.7 -14.3 0 -31.8Q-13.7 -14.3 0 0Z" fill="#d82448" opacity="1"/><path transform="translate(77.4 269.0) rotate(356)" d="M0 0Q13.7 -11.8 0 -26.2Q-13.7 -11.8 0 0Z" fill="#d82448" opacity="1"/><path transform="translate(111.9 256.0) rotate(347)" d="M0 0Q12.9 -11.3 0 -25.2Q-12.9 -11.3 0 0Z" fill="#e01a40" opacity="1"/><path transform="translate(111.9 256.0) rotate(487)" d="M0 0Q12.9 -13.4 0 -29.9Q-12.9 -13.4 0 0Z" fill="#e01a40" opacity="1"/><path transform="translate(111.9 256.0) rotate(597)" d="M0 0Q12.9 -14.0 0 -31.0Q-12.9 -14.0 0 0Z" fill="#e01a40" opacity="1"/><path transform="translate(150.0 269.7) rotate(148)" d="M0 0Q11.1 -11.9 0 -26.5Q-11.1 -11.9 0 0Z" fill="#e01a40" opacity="1"/><path transform="translate(150.0 269.7) rotate(221)" d="M0 0Q11.1 -11.3 0 -25.1Q-11.1 -11.3 0 0Z" fill="#b01038" opacity="1"/><path transform="translate(150.0 269.7) rotate(301)" d="M0 0Q11.1 -11.4 0 -25.4Q-11.1 -11.4 0 0Z" fill="#dc1238" opacity="1"/><path transform="translate(150.0 269.7) rotate(367)" d="M0 0Q11.1 -10.7 0 -23.8Q-11.1 -10.7 0 0Z" fill="#dc1238" opacity="1"/><path transform="translate(150.0 269.7) rotate(437)" d="M0 0Q11.1 -11.3 0 -25.1Q-11.1 -11.3 0 0Z" fill="#8a3060" opacity="1"/><path transform="translate(179.5 267.4) rotate(71)" d="M0 0Q11.3 -11.8 0 -26.2Q-11.3 -11.8 0 0Z" fill="#e01a40" opacity="1"/><path transform="translate(179.5 267.4) rotate(137)" d="M0 0Q11.3 -12.3 0 -27.3Q-11.3 -12.3 0 0Z" fill="#d82448" opacity="1"/><path transform="translate(179.5 267.4) rotate(219)" d="M0 0Q11.3 -9.9 0 -22.1Q-11.3 -9.9 0 0Z" fill="#b01038" opacity="1"/><path transform="translate(179.5 267.4) rotate(282)" d="M0 0Q11.3 -10.8 0 -23.9Q-11.3 -10.8 0 0Z" fill="#e01a40" opacity="1"/><path transform="translate(179.5 267.4) rotate(358)" d="M0 0Q11.3 -13.2 0 -29.3Q-11.3 -13.2 0 0Z" fill="#8a3060" opacity="1"/><path transform="translate(204.6 265.3) rotate(116)" d="M0 0Q13.8 -12.8 0 -28.5Q-13.8 -12.8 0 0Z" fill="#d82448" opacity="1"/><path transform="translate(204.6 265.3) rotate(223)" d="M0 0Q13.8 -13.8 0 -30.6Q-13.8 -13.8 0 0Z" fill="#d82448" opacity="1"/><path transform="translate(204.6 265.3) rotate(364)" d="M0 0Q13.8 -14.0 0 -31.2Q-13.8 -14.0 0 0Z" fill="#d82448" opacity="1"/><path transform="translate(220.4 253.8) rotate(6)" d="M0 0Q12.9 -13.7 0 -30.4Q-12.9 -13.7 0 0Z" fill="#b01038" opacity="1"/><path transform="translate(220.4 253.8) rotate(126)" d="M0 0Q12.9 -11.1 0 -24.8Q-12.9 -11.1 0 0Z" fill="#b01038" opacity="1"/><path transform="translate(220.4 253.8) rotate(253)" d="M0 0Q12.9 -13.7 0 -30.5Q-12.9 -13.7 0 0Z" fill="#e8143a" opacity="1"/><path transform="translate(257.7 264.3) rotate(145)" d="M0 0Q12.4 -13.0 0 -28.9Q-12.4 -13.0 0 0Z" fill="#d83a60" opacity="1"/><path transform="translate(257.7 264.3) rotate(263)" d="M0 0Q12.4 -10.7 0 -23.7Q-12.4 -10.7 0 0Z" fill="#d83a60" opacity="1"/><path transform="translate(257.7 264.3) rotate(399)" d="M0 0Q12.4 -14.6 0 -32.4Q-12.4 -14.6 0 0Z" fill="#d83a60" opacity="1"/><path transform="translate(279.3 262.7) rotate(40)" d="M0 0Q10.0 -11.1 0 -24.8Q-10.0 -11.1 0 0Z" fill="#a06070" opacity="1"/><path transform="translate(279.3 262.7) rotate(152)" d="M0 0Q10.0 -10.4 0 -23.2Q-10.0 -10.4 0 0Z" fill="#a06070" opacity="1"/><path transform="translate(279.3 262.7) rotate(275)" d="M0 0Q10.0 -10.5 0 -23.2Q-10.0 -10.5 0 0Z" fill="#a06070" opacity="1"/><path transform="translate(315.9 265.8) rotate(276)" d="M0 0Q12.5 -12.2 0 -27.1Q-12.5 -12.2 0 0Z" fill="#c83a58" opacity="1"/><path transform="translate(315.9 265.8) rotate(348)" d="M0 0Q12.5 -11.8 0 -26.1Q-12.5 -11.8 0 0Z" fill="#c83a58" opacity="1"/><path transform="translate(315.9 265.8) rotate(420)" d="M0 0Q12.5 -14.0 0 -31.1Q-12.5 -14.0 0 0Z" fill="#c83a58" opacity="1"/><path transform="translate(315.9 265.8) rotate(502)" d="M0 0Q12.5 -13.3 0 -29.5Q-12.5 -13.3 0 0Z" fill="#c83a58" opacity="1"/><path transform="translate(315.9 265.8) rotate(560)" d="M0 0Q12.5 -13.2 0 -29.4Q-12.5 -13.2 0 0Z" fill="#d02048" opacity="1"/><path transform="translate(340.9 261.0) rotate(103)" d="M0 0Q13.0 -13.3 0 -29.6Q-13.0 -13.3 0 0Z" fill="#6e8466" opacity="1"/><path transform="translate(340.9 261.0) rotate(162)" d="M0 0Q13.0 -15.2 0 -33.8Q-13.0 -15.2 0 0Z" fill="#e02850" opacity="1"/><path transform="translate(340.9 261.0) rotate(237)" d="M0 0Q13.0 -12.5 0 -27.9Q-13.0 -12.5 0 0Z" fill="#8a6a68" opacity="1"/><path transform="translate(340.9 261.0) rotate(316)" d="M0 0Q13.0 -12.5 0 -27.7Q-13.0 -12.5 0 0Z" fill="#8a6a68" opacity="1"/><path transform="translate(340.9 261.0) rotate(391)" d="M0 0Q13.0 -14.2 0 -31.5Q-13.0 -14.2 0 0Z" fill="#8a6a68" opacity="1"/><path transform="translate(369.6 263.5) rotate(206)" d="M0 0Q14.0 -13.1 0 -29.2Q-14.0 -13.1 0 0Z" fill="#b82848" opacity="1"/><path transform="translate(369.6 263.5) rotate(287)" d="M0 0Q14.0 -13.0 0 -29.0Q-14.0 -13.0 0 0Z" fill="#b82848" opacity="1"/><path transform="translate(369.6 263.5) rotate(376)" d="M0 0Q14.0 -13.3 0 -29.7Q-14.0 -13.3 0 0Z" fill="#c83a58" opacity="1"/><path transform="translate(369.6 263.5) rotate(485)" d="M0 0Q14.0 -14.6 0 -32.4Q-14.0 -14.6 0 0Z" fill="#b82848" opacity="1"/><path transform="translate(401.8 268.7) rotate(296)" d="M0 0Q10.9 -10.5 0 -23.3Q-10.9 -10.5 0 0Z" fill="#6e8466" opacity="1"/><path transform="translate(401.8 268.7) rotate(389)" d="M0 0Q10.9 -11.4 0 -25.3Q-10.9 -11.4 0 0Z" fill="#a06070" opacity="1"/><path transform="translate(401.8 268.7) rotate(485)" d="M0 0Q10.9 -12.5 0 -27.7Q-10.9 -12.5 0 0Z" fill="#d83a60" opacity="1"/><path transform="translate(401.8 268.7) rotate(563)" d="M0 0Q10.9 -10.0 0 -22.2Q-10.9 -10.0 0 0Z" fill="#e02850" opacity="1"/><path transform="translate(-1.3 301.9) rotate(32)" d="M0 0Q13.8 -15.2 0 -33.8Q-13.8 -15.2 0 0Z" fill="#dc1238" opacity="1"/><path transform="translate(-1.3 301.9) rotate(159)" d="M0 0Q13.8 -13.7 0 -30.4Q-13.8 -13.7 0 0Z" fill="#e01a40" opacity="1"/><path transform="translate(-1.3 301.9) rotate(284)" d="M0 0Q13.8 -13.6 0 -30.3Q-13.8 -13.6 0 0Z" fill="#e01a40" opacity="1"/><path transform="translate(16.1 299.5) rotate(228)" d="M0 0Q9.9 -10.7 0 -23.8Q-9.9 -10.7 0 0Z" fill="#e8143a" opacity="1"/><path transform="translate(16.1 299.5) rotate(351)" d="M0 0Q9.9 -11.4 0 -25.2Q-9.9 -11.4 0 0Z" fill="#e8143a" opacity="1"/><path transform="translate(16.1 299.5) rotate(455)" d="M0 0Q9.9 -11.6 0 -25.7Q-9.9 -11.6 0 0Z" fill="#e8143a" opacity="1"/><path transform="translate(61.3 290.6) rotate(185)" d="M0 0Q11.8 -12.0 0 -26.6Q-11.8 -12.0 0 0Z" fill="#c01a48" opacity="1"/><path transform="translate(61.3 290.6) rotate(277)" d="M0 0Q11.8 -10.9 0 -24.2Q-11.8 -10.9 0 0Z" fill="#c01a48" opacity="1"/><path transform="translate(61.3 290.6) rotate(350)" d="M0 0Q11.8 -11.1 0 -24.7Q-11.8 -11.1 0 0Z" fill="#dc1238" opacity="1"/><path transform="translate(61.3 290.6) rotate(403)" d="M0 0Q11.8 -10.3 0 -23.0Q-11.8 -10.3 0 0Z" fill="#c01a48" opacity="1"/><path transform="translate(61.3 290.6) rotate(472)" d="M0 0Q11.8 -11.6 0 -25.8Q-11.8 -11.6 0 0Z" fill="#c01a48" opacity="1"/><path transform="translate(81.4 286.7) rotate(240)" d="M0 0Q12.0 -11.8 0 -26.3Q-12.0 -11.8 0 0Z" fill="#d82448" opacity="1"/><path transform="translate(81.4 286.7) rotate(303)" d="M0 0Q12.0 -14.0 0 -31.2Q-12.0 -14.0 0 0Z" fill="#d82448" opacity="1"/><path transform="translate(81.4 286.7) rotate(376)" d="M0 0Q12.0 -11.9 0 -26.4Q-12.0 -11.9 0 0Z" fill="#d82448" opacity="1"/><path transform="translate(81.4 286.7) rotate(443)" d="M0 0Q12.0 -11.2 0 -24.9Q-12.0 -11.2 0 0Z" fill="#e8143a" opacity="1"/><path transform="translate(81.4 286.7) rotate(523)" d="M0 0Q12.0 -14.1 0 -31.4Q-12.0 -14.1 0 0Z" fill="#e01a40" opacity="1"/><path transform="translate(117.8 293.9) rotate(14)" d="M0 0Q11.3 -11.3 0 -25.1Q-11.3 -11.3 0 0Z" fill="#e8143a" opacity="1"/><path transform="translate(117.8 293.9) rotate(88)" d="M0 0Q11.3 -11.8 0 -26.2Q-11.3 -11.8 0 0Z" fill="#e8143a" opacity="1"/><path transform="translate(117.8 293.9) rotate(155)" d="M0 0Q11.3 -11.4 0 -25.3Q-11.3 -11.4 0 0Z" fill="#e8143a" opacity="1"/><path transform="translate(117.8 293.9) rotate(224)" d="M0 0Q11.3 -11.1 0 -24.6Q-11.3 -11.1 0 0Z" fill="#e8143a" opacity="1"/><path transform="translate(117.8 293.9) rotate(308)" d="M0 0Q11.3 -11.0 0 -24.4Q-11.3 -11.0 0 0Z" fill="#e01a40" opacity="1"/><path transform="translate(129.5 301.4) rotate(308)" d="M0 0Q12.6 -14.5 0 -32.1Q-12.6 -14.5 0 0Z" fill="#d82448" opacity="1"/><path transform="translate(129.5 301.4) rotate(417)" d="M0 0Q12.6 -13.2 0 -29.3Q-12.6 -13.2 0 0Z" fill="#c01a48" opacity="1"/><path transform="translate(129.5 301.4) rotate(539)" d="M0 0Q12.6 -14.5 0 -32.3Q-12.6 -14.5 0 0Z" fill="#dc1238" opacity="1"/><path transform="translate(170.7 290.6) rotate(85)" d="M0 0Q13.4 -15.0 0 -33.4Q-13.4 -15.0 0 0Z" fill="#e01a40" opacity="1"/><path transform="translate(170.7 290.6) rotate(215)" d="M0 0Q13.4 -12.9 0 -28.6Q-13.4 -12.9 0 0Z" fill="#e8143a" opacity="1"/><path transform="translate(170.7 290.6) rotate(323)" d="M0 0Q13.4 -12.0 0 -26.7Q-13.4 -12.0 0 0Z" fill="#e01a40" opacity="1"/><path transform="translate(191.7 284.0) rotate(279)" d="M0 0Q11.5 -13.6 0 -30.2Q-11.5 -13.6 0 0Z" fill="#d82448" opacity="1"/><path transform="translate(191.7 284.0) rotate(366)" d="M0 0Q11.5 -11.6 0 -25.9Q-11.5 -11.6 0 0Z" fill="#d82448" opacity="1"/><path transform="translate(191.7 284.0) rotate(440)" d="M0 0Q11.5 -9.9 0 -22.0Q-11.5 -9.9 0 0Z" fill="#e01a40" opacity="1"/><path transform="translate(191.7 284.0) rotate(496)" d="M0 0Q11.5 -12.3 0 -27.4Q-11.5 -12.3 0 0Z" fill="#d82448" opacity="1"/><path transform="translate(191.7 284.0) rotate(580)" d="M0 0Q11.5 -12.8 0 -28.5Q-11.5 -12.8 0 0Z" fill="#d82448" opacity="1"/><path transform="translate(224.1 291.3) rotate(208)" d="M0 0Q10.6 -12.0 0 -26.6Q-10.6 -12.0 0 0Z" fill="#c01a48" opacity="1"/><path transform="translate(224.1 291.3) rotate(293)" d="M0 0Q10.6 -12.0 0 -26.8Q-10.6 -12.0 0 0Z" fill="#c01a48" opacity="1"/><path transform="translate(224.1 291.3) rotate(385)" d="M0 0Q10.6 -11.8 0 -26.2Q-10.6 -11.8 0 0Z" fill="#c01a48" opacity="1"/><path transform="translate(224.1 291.3) rotate(485)" d="M0 0Q10.6 -9.3 0 -20.6Q-10.6 -9.3 0 0Z" fill="#c01a48" opacity="1"/><path transform="translate(258.6 286.8) rotate(144)" d="M0 0Q11.0 -12.7 0 -28.3Q-11.0 -12.7 0 0Z" fill="#d82448" opacity="1"/><path transform="translate(258.6 286.8) rotate(211)" d="M0 0Q11.0 -9.7 0 -21.5Q-11.0 -9.7 0 0Z" fill="#b01038" opacity="1"/><path transform="translate(258.6 286.8) rotate(284)" d="M0 0Q11.0 -12.1 0 -26.9Q-11.0 -12.1 0 0Z" fill="#dc1238" opacity="1"/><path transform="translate(258.6 286.8) rotate(360)" d="M0 0Q11.0 -11.2 0 -24.9Q-11.0 -11.2 0 0Z" fill="#d82448" opacity="1"/><path transform="translate(258.6 286.8) rotate(444)" d="M0 0Q11.0 -9.8 0 -21.8Q-11.0 -9.8 0 0Z" fill="#e8143a" opacity="1"/><path transform="translate(291.5 300.4) rotate(358)" d="M0 0Q11.5 -12.9 0 -28.6Q-11.5 -12.9 0 0Z" fill="#d83a60" opacity="1"/><path transform="translate(291.5 300.4) rotate(482)" d="M0 0Q11.5 -11.8 0 -26.3Q-11.5 -11.8 0 0Z" fill="#b82848" opacity="1"/><path transform="translate(291.5 300.4) rotate(608)" d="M0 0Q11.5 -11.0 0 -24.5Q-11.5 -11.0 0 0Z" fill="#d83a60" opacity="1"/><path transform="translate(373.2 288.9) rotate(302)" d="M0 0Q13.5 -11.8 0 -26.2Q-13.5 -11.8 0 0Z" fill="#b82848" opacity="1"/><path transform="translate(373.2 288.9) rotate(386)" d="M0 0Q13.5 -12.4 0 -27.5Q-13.5 -12.4 0 0Z" fill="#b82848" opacity="1"/><path transform="translate(373.2 288.9) rotate(466)" d="M0 0Q13.5 -13.9 0 -30.9Q-13.5 -13.9 0 0Z" fill="#b82848" opacity="1"/><path transform="translate(373.2 288.9) rotate(527)" d="M0 0Q13.5 -13.2 0 -29.4Q-13.5 -13.2 0 0Z" fill="#b82848" opacity="1"/><path transform="translate(373.2 288.9) rotate(603)" d="M0 0Q13.5 -13.3 0 -29.5Q-13.5 -13.3 0 0Z" fill="#b82848" opacity="1"/><path transform="translate(419.3 294.3) rotate(148)" d="M0 0Q10.8 -11.5 0 -25.5Q-10.8 -11.5 0 0Z" fill="#c83a58" opacity="1"/><path transform="translate(419.3 294.3) rotate(239)" d="M0 0Q10.8 -11.7 0 -26.0Q-10.8 -11.7 0 0Z" fill="#c83a58" opacity="1"/><path transform="translate(419.3 294.3) rotate(292)" d="M0 0Q10.8 -9.9 0 -22.1Q-10.8 -9.9 0 0Z" fill="#8a6a68" opacity="1"/><path transform="translate(419.3 294.3) rotate(383)" d="M0 0Q10.8 -9.4 0 -20.9Q-10.8 -9.4 0 0Z" fill="#c83a58" opacity="1"/><path transform="translate(419.3 294.3) rotate(441)" d="M0 0Q10.8 -10.7 0 -23.7Q-10.8 -10.7 0 0Z" fill="#c83a58" opacity="1"/><path transform="translate(-8.4 315.8) rotate(294)" d="M0 0Q12.8 -12.9 0 -28.6Q-12.8 -12.9 0 0Z" fill="#c8103a" opacity="1"/><path transform="translate(-8.4 315.8) rotate(387)" d="M0 0Q12.8 -14.6 0 -32.5Q-12.8 -14.6 0 0Z" fill="#c8103a" opacity="1"/><path transform="translate(-8.4 315.8) rotate(456)" d="M0 0Q12.8 -13.6 0 -30.3Q-12.8 -13.6 0 0Z" fill="#c8103a" opacity="1"/><path transform="translate(-8.4 315.8) rotate(546)" d="M0 0Q12.8 -14.3 0 -31.9Q-12.8 -14.3 0 0Z" fill="#dc1238" opacity="1"/><path transform="translate(19.9 308.3) rotate(60)" d="M0 0Q13.3 -14.7 0 -32.7Q-13.3 -14.7 0 0Z" fill="#d82448" opacity="1"/><path transform="translate(19.9 308.3) rotate(184)" d="M0 0Q13.3 -13.4 0 -29.7Q-13.3 -13.4 0 0Z" fill="#d82448" opacity="1"/><path transform="translate(19.9 308.3) rotate(292)" d="M0 0Q13.3 -11.6 0 -25.8Q-13.3 -11.6 0 0Z" fill="#d82448" opacity="1"/><path transform="translate(43.4 328.0) rotate(169)" d="M0 0Q13.6 -12.4 0 -27.5Q-13.6 -12.4 0 0Z" fill="#e01a40" opacity="1"/><path transform="translate(43.4 328.0) rotate(248)" d="M0 0Q13.6 -14.8 0 -32.8Q-13.6 -14.8 0 0Z" fill="#b01038" opacity="1"/><path transform="translate(43.4 328.0) rotate(345)" d="M0 0Q13.6 -12.8 0 -28.4Q-13.6 -12.8 0 0Z" fill="#e01a40" opacity="1"/><path transform="translate(43.4 328.0) rotate(430)" d="M0 0Q13.6 -15.8 0 -35.1Q-13.6 -15.8 0 0Z" fill="#e01a40" opacity="1"/><path transform="translate(105.9 311.7) rotate(242)" d="M0 0Q10.0 -9.9 0 -21.9Q-10.0 -9.9 0 0Z" fill="#8a3060" opacity="1"/><path transform="translate(105.9 311.7) rotate(359)" d="M0 0Q10.0 -10.7 0 -23.7Q-10.0 -10.7 0 0Z" fill="#8a3060" opacity="1"/><path transform="translate(105.9 311.7) rotate(483)" d="M0 0Q10.0 -10.2 0 -22.8Q-10.0 -10.2 0 0Z" fill="#8a3060" opacity="1"/><path transform="translate(356.4 329.7) rotate(96)" d="M0 0Q9.7 -8.8 0 -19.6Q-9.7 -8.8 0 0Z" fill="#c83050" opacity="1"/><path transform="translate(356.4 329.7) rotate(175)" d="M0 0Q9.7 -9.5 0 -21.0Q-9.7 -9.5 0 0Z" fill="#c83050" opacity="1"/><path transform="translate(356.4 329.7) rotate(251)" d="M0 0Q9.7 -9.5 0 -21.1Q-9.7 -9.5 0 0Z" fill="#c83050" opacity="1"/><path transform="translate(356.4 329.7) rotate(315)" d="M0 0Q9.7 -8.6 0 -19.0Q-9.7 -8.6 0 0Z" fill="#6a7a60" opacity="1"/><path transform="translate(356.4 329.7) rotate(397)" d="M0 0Q9.7 -10.1 0 -22.4Q-9.7 -10.1 0 0Z" fill="#c83050" opacity="1"/><path transform="translate(386.9 322.3) rotate(16)" d="M0 0Q9.7 -10.1 0 -22.6Q-9.7 -10.1 0 0Z" fill="#c83050" opacity="1"/><path transform="translate(386.9 322.3) rotate(81)" d="M0 0Q9.7 -10.4 0 -23.1Q-9.7 -10.4 0 0Z" fill="#c83050" opacity="1"/><path transform="translate(386.9 322.3) rotate(148)" d="M0 0Q9.7 -11.3 0 -25.1Q-9.7 -11.3 0 0Z" fill="#c83050" opacity="1"/><path transform="translate(386.9 322.3) rotate(224)" d="M0 0Q9.7 -11.0 0 -24.3Q-9.7 -11.0 0 0Z" fill="#6a7a60" opacity="1"/><path transform="translate(386.9 322.3) rotate(295)" d="M0 0Q9.7 -8.7 0 -19.3Q-9.7 -8.7 0 0Z" fill="#c83050" opacity="1"/><path transform="translate(403.7 311.7) rotate(85)" d="M0 0Q11.8 -11.6 0 -25.9Q-11.8 -11.6 0 0Z" fill="#d02048" opacity="1"/><path transform="translate(403.7 311.7) rotate(153)" d="M0 0Q11.8 -11.0 0 -24.5Q-11.8 -11.0 0 0Z" fill="#d02048" opacity="1"/><path transform="translate(403.7 311.7) rotate(241)" d="M0 0Q11.8 -13.5 0 -30.0Q-11.8 -13.5 0 0Z" fill="#d02048" opacity="1"/><path transform="translate(403.7 311.7) rotate(293)" d="M0 0Q11.8 -13.1 0 -29.1Q-11.8 -13.1 0 0Z" fill="#e02850" opacity="1"/><path transform="translate(403.7 311.7) rotate(381)" d="M0 0Q11.8 -12.9 0 -28.7Q-11.8 -12.9 0 0Z" fill="#d02048" opacity="1"/><path transform="translate(-19.9 342.1) rotate(350)" d="M0 0Q12.4 -11.1 0 -24.7Q-12.4 -11.1 0 0Z" fill="#e01a40" opacity="1"/><path transform="translate(-19.9 342.1) rotate(453)" d="M0 0Q12.4 -11.6 0 -25.7Q-12.4 -11.6 0 0Z" fill="#e01a40" opacity="1"/><path transform="translate(-19.9 342.1) rotate(546)" d="M0 0Q12.4 -13.9 0 -30.8Q-12.4 -13.9 0 0Z" fill="#e01a40" opacity="1"/><path transform="translate(-19.9 342.1) rotate(637)" d="M0 0Q12.4 -12.0 0 -26.6Q-12.4 -12.0 0 0Z" fill="#e01a40" opacity="1"/><path transform="translate(10.4 343.2) rotate(69)" d="M0 0Q9.7 -8.9 0 -19.7Q-9.7 -8.9 0 0Z" fill="#b01038" opacity="1"/><path transform="translate(10.4 343.2) rotate(149)" d="M0 0Q9.7 -8.4 0 -18.6Q-9.7 -8.4 0 0Z" fill="#e01a40" opacity="1"/><path transform="translate(10.4 343.2) rotate(250)" d="M0 0Q9.7 -9.9 0 -21.9Q-9.7 -9.9 0 0Z" fill="#b01038" opacity="1"/><path transform="translate(10.4 343.2) rotate(325)" d="M0 0Q9.7 -8.9 0 -19.8Q-9.7 -8.9 0 0Z" fill="#e01a40" opacity="1"/><path transform="translate(60.2 354.5) rotate(25)" d="M0 0Q9.4 -8.3 0 -18.4Q-9.4 -8.3 0 0Z" fill="#8a3060" opacity="1"/><path transform="translate(60.2 354.5) rotate(147)" d="M0 0Q9.4 -10.7 0 -23.8Q-9.4 -10.7 0 0Z" fill="#8a3060" opacity="1"/><path transform="translate(60.2 354.5) rotate(253)" d="M0 0Q9.4 -9.3 0 -20.7Q-9.4 -9.3 0 0Z" fill="#8a3060" opacity="1"/><path transform="translate(83.6 361.3) rotate(297)" d="M0 0Q9.9 -10.9 0 -24.2Q-9.9 -10.9 0 0Z" fill="#e8143a" opacity="1"/><path transform="translate(83.6 361.3) rotate(387)" d="M0 0Q9.9 -9.9 0 -22.0Q-9.9 -9.9 0 0Z" fill="#e01a40" opacity="1"/><path transform="translate(83.6 361.3) rotate(477)" d="M0 0Q9.9 -9.5 0 -21.0Q-9.9 -9.5 0 0Z" fill="#c01a48" opacity="1"/><path transform="translate(83.6 361.3) rotate(570)" d="M0 0Q9.9 -11.5 0 -25.6Q-9.9 -11.5 0 0Z" fill="#8a3060" opacity="1"/><path transform="translate(326.8 357.0) rotate(332)" d="M0 0Q14.0 -15.6 0 -34.6Q-14.0 -15.6 0 0Z" fill="#8a5a68" opacity="1"/><path transform="translate(326.8 357.0) rotate(433)" d="M0 0Q14.0 -15.6 0 -34.6Q-14.0 -15.6 0 0Z" fill="#8a5a68" opacity="1"/><path transform="translate(326.8 357.0) rotate(507)" d="M0 0Q14.0 -12.1 0 -26.9Q-14.0 -12.1 0 0Z" fill="#8a5a68" opacity="1"/><path transform="translate(326.8 357.0) rotate(600)" d="M0 0Q14.0 -13.9 0 -30.8Q-14.0 -13.9 0 0Z" fill="#8a5a68" opacity="1"/><path transform="translate(345.2 341.5) rotate(19)" d="M0 0Q11.6 -13.6 0 -30.3Q-11.6 -13.6 0 0Z" fill="#6a7a60" opacity="1"/><path transform="translate(345.2 341.5) rotate(112)" d="M0 0Q11.6 -12.4 0 -27.5Q-11.6 -12.4 0 0Z" fill="#8a5a68" opacity="1"/><path transform="translate(345.2 341.5) rotate(217)" d="M0 0Q11.6 -12.5 0 -27.7Q-11.6 -12.5 0 0Z" fill="#6a7a60" opacity="1"/><path transform="translate(345.2 341.5) rotate(289)" d="M0 0Q11.6 -11.4 0 -25.3Q-11.6 -11.4 0 0Z" fill="#6a4058" opacity="1"/><path transform="translate(376.0 341.6) rotate(122)" d="M0 0Q10.8 -12.7 0 -28.2Q-10.8 -12.7 0 0Z" fill="#6a7a60" opacity="1"/><path transform="translate(376.0 341.6) rotate(191)" d="M0 0Q10.8 -10.6 0 -23.6Q-10.8 -10.6 0 0Z" fill="#6a4058" opacity="1"/><path transform="translate(376.0 341.6) rotate(259)" d="M0 0Q10.8 -12.5 0 -27.8Q-10.8 -12.5 0 0Z" fill="#7a4a60" opacity="1"/><path transform="translate(376.0 341.6) rotate(341)" d="M0 0Q10.8 -11.8 0 -26.2Q-10.8 -11.8 0 0Z" fill="#5a7a5a" opacity="1"/><path transform="translate(376.0 341.6) rotate(419)" d="M0 0Q10.8 -12.2 0 -27.2Q-10.8 -12.2 0 0Z" fill="#4a3a48" opacity="1"/><path transform="translate(-0.5 384.0) rotate(221)" d="M0 0Q14.1 -14.9 0 -33.1Q-14.1 -14.9 0 0Z" fill="#d82448" opacity="1"/><path transform="translate(-0.5 384.0) rotate(312)" d="M0 0Q14.1 -15.1 0 -33.6Q-14.1 -15.1 0 0Z" fill="#d82448" opacity="1"/><path transform="translate(-0.5 384.0) rotate(414)" d="M0 0Q14.1 -13.7 0 -30.5Q-14.1 -13.7 0 0Z" fill="#d82448" opacity="1"/><path transform="translate(-0.5 384.0) rotate(506)" d="M0 0Q14.1 -15.8 0 -35.2Q-14.1 -15.8 0 0Z" fill="#d82448" opacity="1"/><path transform="translate(24.4 381.4) rotate(266)" d="M0 0Q9.4 -11.0 0 -24.3Q-9.4 -11.0 0 0Z" fill="#8a3060" opacity="1"/><path transform="translate(24.4 381.4) rotate(400)" d="M0 0Q9.4 -9.9 0 -21.9Q-9.4 -9.9 0 0Z" fill="#8a3060" opacity="1"/><path transform="translate(24.4 381.4) rotate(512)" d="M0 0Q9.4 -9.3 0 -20.6Q-9.4 -9.3 0 0Z" fill="#8a3060" opacity="1"/><path transform="translate(55.9 383.4) rotate(276)" d="M0 0Q9.4 -8.3 0 -18.4Q-9.4 -8.3 0 0Z" fill="#c01a48" opacity="1"/><path transform="translate(55.9 383.4) rotate(375)" d="M0 0Q9.4 -9.5 0 -21.1Q-9.4 -9.5 0 0Z" fill="#c01a48" opacity="1"/><path transform="translate(55.9 383.4) rotate(466)" d="M0 0Q9.4 -10.8 0 -23.9Q-9.4 -10.8 0 0Z" fill="#c01a48" opacity="1"/><path transform="translate(55.9 383.4) rotate(540)" d="M0 0Q9.4 -10.5 0 -23.4Q-9.4 -10.5 0 0Z" fill="#8a3060" opacity="1"/><path transform="translate(87.0 376.3) rotate(186)" d="M0 0Q10.8 -12.4 0 -27.6Q-10.8 -12.4 0 0Z" fill="#e01a40" opacity="1"/><path transform="translate(87.0 376.3) rotate(308)" d="M0 0Q10.8 -12.6 0 -28.0Q-10.8 -12.6 0 0Z" fill="#b01038" opacity="1"/><path transform="translate(87.0 376.3) rotate(418)" d="M0 0Q10.8 -12.5 0 -27.8Q-10.8 -12.5 0 0Z" fill="#e01a40" opacity="1"/><path transform="translate(326.7 375.6) rotate(277)" d="M0 0Q12.1 -11.9 0 -26.3Q-12.1 -11.9 0 0Z" fill="#5a7a5a" opacity="1"/><path transform="translate(326.7 375.6) rotate(368)" d="M0 0Q12.1 -13.5 0 -29.9Q-12.1 -13.5 0 0Z" fill="#4a3a48" opacity="1"/><path transform="translate(326.7 375.6) rotate(461)" d="M0 0Q12.1 -12.1 0 -26.8Q-12.1 -12.1 0 0Z" fill="#4a3a48" opacity="1"/><path transform="translate(326.7 375.6) rotate(531)" d="M0 0Q12.1 -13.0 0 -29.0Q-12.1 -13.0 0 0Z" fill="#4a3a48" opacity="1"/><path transform="translate(345.3 382.5) rotate(355)" d="M0 0Q9.7 -10.9 0 -24.1Q-9.7 -10.9 0 0Z" fill="#6a7a60" opacity="1"/><path transform="translate(345.3 382.5) rotate(464)" d="M0 0Q9.7 -10.4 0 -23.0Q-9.7 -10.4 0 0Z" fill="#c83050" opacity="1"/><path transform="translate(345.3 382.5) rotate(604)" d="M0 0Q9.7 -10.5 0 -23.3Q-9.7 -10.5 0 0Z" fill="#c83050" opacity="1"/><path transform="translate(415.8 376.2) rotate(299)" d="M0 0Q10.2 -10.4 0 -23.2Q-10.2 -10.4 0 0Z" fill="#6a7a60" opacity="1"/><path transform="translate(415.8 376.2) rotate(384)" d="M0 0Q10.2 -9.4 0 -20.9Q-10.2 -9.4 0 0Z" fill="#6a4058" opacity="1"/><path transform="translate(415.8 376.2) rotate(474)" d="M0 0Q10.2 -10.4 0 -23.0Q-10.2 -10.4 0 0Z" fill="#7a4a60" opacity="1"/><path transform="translate(415.8 376.2) rotate(569)" d="M0 0Q10.2 -10.6 0 -23.6Q-10.2 -10.6 0 0Z" fill="#6a7a60" opacity="1"/><path transform="translate(-12.3 411.8) rotate(313)" d="M0 0Q10.4 -9.3 0 -20.7Q-10.4 -9.3 0 0Z" fill="#e01a40" opacity="1"/><path transform="translate(-12.3 411.8) rotate(419)" d="M0 0Q10.4 -12.1 0 -26.9Q-10.4 -12.1 0 0Z" fill="#e01a40" opacity="1"/><path transform="translate(-12.3 411.8) rotate(554)" d="M0 0Q10.4 -9.8 0 -21.9Q-10.4 -9.8 0 0Z" fill="#e01a40" opacity="1"/><path transform="translate(23.5 419.0) rotate(325)" d="M0 0Q13.1 -13.8 0 -30.7Q-13.1 -13.8 0 0Z" fill="#dc1238" opacity="1"/><path transform="translate(23.5 419.0) rotate(404)" d="M0 0Q13.1 -12.8 0 -28.4Q-13.1 -12.8 0 0Z" fill="#dc1238" opacity="1"/><path transform="translate(23.5 419.0) rotate(468)" d="M0 0Q13.1 -12.8 0 -28.4Q-13.1 -12.8 0 0Z" fill="#dc1238" opacity="1"/><path transform="translate(23.5 419.0) rotate(543)" d="M0 0Q13.1 -14.8 0 -32.9Q-13.1 -14.8 0 0Z" fill="#dc1238" opacity="1"/><path transform="translate(23.5 419.0) rotate(606)" d="M0 0Q13.1 -13.9 0 -30.9Q-13.1 -13.9 0 0Z" fill="#dc1238" opacity="1"/><path transform="translate(41.3 404.6) rotate(168)" d="M0 0Q9.4 -8.8 0 -19.5Q-9.4 -8.8 0 0Z" fill="#e8143a" opacity="1"/><path transform="translate(41.3 404.6) rotate(236)" d="M0 0Q9.4 -9.1 0 -20.2Q-9.4 -9.1 0 0Z" fill="#e8143a" opacity="1"/><path transform="translate(41.3 404.6) rotate(306)" d="M0 0Q9.4 -10.5 0 -23.3Q-9.4 -10.5 0 0Z" fill="#e8143a" opacity="1"/><path transform="translate(41.3 404.6) rotate(369)" d="M0 0Q9.4 -10.3 0 -22.8Q-9.4 -10.3 0 0Z" fill="#c01a48" opacity="1"/><path transform="translate(41.3 404.6) rotate(442)" d="M0 0Q9.4 -10.6 0 -23.4Q-9.4 -10.6 0 0Z" fill="#e8143a" opacity="1"/><path transform="translate(359.1 412.8) rotate(228)" d="M0 0Q10.1 -11.5 0 -25.6Q-10.1 -11.5 0 0Z" fill="#8a5a68" opacity="1"/><path transform="translate(359.1 412.8) rotate(330)" d="M0 0Q10.1 -10.9 0 -24.3Q-10.1 -10.9 0 0Z" fill="#6a7a60" opacity="1"/><path transform="translate(359.1 412.8) rotate(454)" d="M0 0Q10.1 -10.4 0 -23.2Q-10.1 -10.4 0 0Z" fill="#8a5a68" opacity="1"/><path transform="translate(384.8 421.4) rotate(330)" d="M0 0Q12.3 -12.2 0 -27.2Q-12.3 -12.2 0 0Z" fill="#4a3a48" opacity="1"/><path transform="translate(384.8 421.4) rotate(421)" d="M0 0Q12.3 -13.5 0 -30.1Q-12.3 -13.5 0 0Z" fill="#4a3a48" opacity="1"/><path transform="translate(384.8 421.4) rotate(486)" d="M0 0Q12.3 -13.1 0 -29.0Q-12.3 -13.1 0 0Z" fill="#4a3a48" opacity="1"/><path transform="translate(384.8 421.4) rotate(559)" d="M0 0Q12.3 -12.0 0 -26.6Q-12.3 -12.0 0 0Z" fill="#4a3a48" opacity="1"/><path transform="translate(384.8 421.4) rotate(620)" d="M0 0Q12.3 -12.0 0 -26.6Q-12.3 -12.0 0 0Z" fill="#4a3a48" opacity="1"/><path transform="translate(419.6 417.3) rotate(43)" d="M0 0Q10.0 -11.8 0 -26.2Q-10.0 -11.8 0 0Z" fill="#6a7a60" opacity="1"/><path transform="translate(419.6 417.3) rotate(167)" d="M0 0Q10.0 -11.5 0 -25.5Q-10.0 -11.5 0 0Z" fill="#8a5a68" opacity="1"/><path transform="translate(419.6 417.3) rotate(288)" d="M0 0Q10.0 -10.4 0 -23.1Q-10.0 -10.4 0 0Z" fill="#c83050" opacity="1"/><path transform="translate(-9.8 433.0) rotate(19)" d="M0 0Q14.0 -15.3 0 -34.0Q-14.0 -15.3 0 0Z" fill="#d82448" opacity="1"/><path transform="translate(-9.8 433.0) rotate(125)" d="M0 0Q14.0 -12.6 0 -28.0Q-14.0 -12.6 0 0Z" fill="#e01a40" opacity="1"/><path transform="translate(-9.8 433.0) rotate(236)" d="M0 0Q14.0 -14.6 0 -32.5Q-14.0 -14.6 0 0Z" fill="#d82448" opacity="1"/><path transform="translate(17.1 428.2) rotate(285)" d="M0 0Q10.3 -9.9 0 -22.0Q-10.3 -9.9 0 0Z" fill="#b01038" opacity="1"/><path transform="translate(17.1 428.2) rotate(374)" d="M0 0Q10.3 -11.3 0 -25.2Q-10.3 -11.3 0 0Z" fill="#e8143a" opacity="1"/><path transform="translate(17.1 428.2) rotate(473)" d="M0 0Q10.3 -9.5 0 -21.1Q-10.3 -9.5 0 0Z" fill="#e8143a" opacity="1"/><path transform="translate(17.1 428.2) rotate(549)" d="M0 0Q10.3 -10.8 0 -23.9Q-10.3 -10.8 0 0Z" fill="#dc1238" opacity="1"/><path transform="translate(41.0 432.8) rotate(212)" d="M0 0Q13.1 -11.9 0 -26.5Q-13.1 -11.9 0 0Z" fill="#8a3060" opacity="1"/><path transform="translate(41.0 432.8) rotate(286)" d="M0 0Q13.1 -14.2 0 -31.6Q-13.1 -14.2 0 0Z" fill="#c8103a" opacity="1"/><path transform="translate(41.0 432.8) rotate(354)" d="M0 0Q13.1 -11.7 0 -26.0Q-13.1 -11.7 0 0Z" fill="#e01a40" opacity="1"/><path transform="translate(41.0 432.8) rotate(427)" d="M0 0Q13.1 -14.2 0 -31.4Q-13.1 -14.2 0 0Z" fill="#8a3060" opacity="1"/><path transform="translate(41.0 432.8) rotate(506)" d="M0 0Q13.1 -12.9 0 -28.6Q-13.1 -12.9 0 0Z" fill="#e8143a" opacity="1"/><path transform="translate(86.9 447.8) rotate(278)" d="M0 0Q9.7 -9.8 0 -21.7Q-9.7 -9.8 0 0Z" fill="#e8143a" opacity="1"/><path transform="translate(86.9 447.8) rotate(385)" d="M0 0Q9.7 -10.7 0 -23.9Q-9.7 -10.7 0 0Z" fill="#c8103a" opacity="1"/><path transform="translate(86.9 447.8) rotate(496)" d="M0 0Q9.7 -10.1 0 -22.5Q-9.7 -10.1 0 0Z" fill="#c8103a" opacity="1"/><path transform="translate(339.7 428.7) rotate(38)" d="M0 0Q12.3 -13.4 0 -29.7Q-12.3 -13.4 0 0Z" fill="#c83050" opacity="1"/><path transform="translate(339.7 428.7) rotate(107)" d="M0 0Q12.3 -12.4 0 -27.5Q-12.3 -12.4 0 0Z" fill="#c83050" opacity="1"/><path transform="translate(339.7 428.7) rotate(179)" d="M0 0Q12.3 -11.4 0 -25.3Q-12.3 -11.4 0 0Z" fill="#c83050" opacity="1"/><path transform="translate(339.7 428.7) rotate(239)" d="M0 0Q12.3 -13.9 0 -30.9Q-12.3 -13.9 0 0Z" fill="#c83050" opacity="1"/><path transform="translate(339.7 428.7) rotate(312)" d="M0 0Q12.3 -11.4 0 -25.3Q-12.3 -11.4 0 0Z" fill="#4a3a48" opacity="1"/><path transform="translate(411.1 436.5) rotate(258)" d="M0 0Q11.1 -11.3 0 -25.0Q-11.1 -11.3 0 0Z" fill="#6a4058" opacity="1"/><path transform="translate(411.1 436.5) rotate(385)" d="M0 0Q11.1 -10.2 0 -22.7Q-11.1 -10.2 0 0Z" fill="#7a4a60" opacity="1"/><path transform="translate(411.1 436.5) rotate(493)" d="M0 0Q11.1 -11.9 0 -26.5Q-11.1 -11.9 0 0Z" fill="#7a4a60" opacity="1"/><path transform="translate(-3.6 463.1) rotate(360)" d="M0 0Q13.9 -15.6 0 -34.7Q-13.9 -15.6 0 0Z" fill="#e8143a" opacity="1"/><path transform="translate(-3.6 463.1) rotate(431)" d="M0 0Q13.9 -14.9 0 -33.1Q-13.9 -14.9 0 0Z" fill="#c8103a" opacity="1"/><path transform="translate(-3.6 463.1) rotate(507)" d="M0 0Q13.9 -15.8 0 -35.1Q-13.9 -15.8 0 0Z" fill="#c8103a" opacity="1"/><path transform="translate(-3.6 463.1) rotate(562)" d="M0 0Q13.9 -13.0 0 -28.9Q-13.9 -13.0 0 0Z" fill="#8a3060" opacity="1"/><path transform="translate(-3.6 463.1) rotate(633)" d="M0 0Q13.9 -12.0 0 -26.7Q-13.9 -12.0 0 0Z" fill="#b01038" opacity="1"/><path transform="translate(17.2 461.9) rotate(349)" d="M0 0Q13.1 -12.4 0 -27.5Q-13.1 -12.4 0 0Z" fill="#b01038" opacity="1"/><path transform="translate(17.2 461.9) rotate(407)" d="M0 0Q13.1 -11.3 0 -25.1Q-13.1 -11.3 0 0Z" fill="#8a3060" opacity="1"/><path transform="translate(17.2 461.9) rotate(478)" d="M0 0Q13.1 -11.2 0 -24.9Q-13.1 -11.2 0 0Z" fill="#b01038" opacity="1"/><path transform="translate(17.2 461.9) rotate(563)" d="M0 0Q13.1 -12.7 0 -28.1Q-13.1 -12.7 0 0Z" fill="#8a3060" opacity="1"/><path transform="translate(17.2 461.9) rotate(619)" d="M0 0Q13.1 -11.4 0 -25.2Q-13.1 -11.4 0 0Z" fill="#8a3060" opacity="1"/><path transform="translate(58.4 468.2) rotate(24)" d="M0 0Q10.1 -10.4 0 -23.0Q-10.1 -10.4 0 0Z" fill="#8a3060" opacity="1"/><path transform="translate(58.4 468.2) rotate(154)" d="M0 0Q10.1 -11.6 0 -25.7Q-10.1 -11.6 0 0Z" fill="#8a3060" opacity="1"/><path transform="translate(58.4 468.2) rotate(268)" d="M0 0Q10.1 -10.7 0 -23.8Q-10.1 -10.7 0 0Z" fill="#dc1238" opacity="1"/><path transform="translate(73.2 476.1) rotate(249)" d="M0 0Q14.2 -15.3 0 -34.1Q-14.2 -15.3 0 0Z" fill="#dc1238" opacity="1"/><path transform="translate(73.2 476.1) rotate(352)" d="M0 0Q14.2 -13.3 0 -29.6Q-14.2 -13.3 0 0Z" fill="#e01a40" opacity="1"/><path transform="translate(73.2 476.1) rotate(431)" d="M0 0Q14.2 -15.4 0 -34.1Q-14.2 -15.4 0 0Z" fill="#dc1238" opacity="1"/><path transform="translate(73.2 476.1) rotate(520)" d="M0 0Q14.2 -16.6 0 -36.9Q-14.2 -16.6 0 0Z" fill="#dc1238" opacity="1"/><path transform="translate(324.5 464.6) rotate(62)" d="M0 0Q10.8 -10.8 0 -23.9Q-10.8 -10.8 0 0Z" fill="#5a7a5a" opacity="1"/><path transform="translate(324.5 464.6) rotate(190)" d="M0 0Q10.8 -12.5 0 -27.7Q-10.8 -12.5 0 0Z" fill="#5a7a5a" opacity="1"/><path transform="translate(324.5 464.6) rotate(300)" d="M0 0Q10.8 -10.6 0 -23.5Q-10.8 -10.6 0 0Z" fill="#7a4a60" opacity="1"/><path transform="translate(356.8 460.6) rotate(135)" d="M0 0Q12.4 -11.0 0 -24.4Q-12.4 -11.0 0 0Z" fill="#5a7a5a" opacity="1"/><path transform="translate(356.8 460.6) rotate(223)" d="M0 0Q12.4 -11.9 0 -26.4Q-12.4 -11.9 0 0Z" fill="#5a7a5a" opacity="1"/><path transform="translate(356.8 460.6) rotate(301)" d="M0 0Q12.4 -12.5 0 -27.9Q-12.4 -12.5 0 0Z" fill="#5a7a5a" opacity="1"/><path transform="translate(356.8 460.6) rotate(404)" d="M0 0Q12.4 -11.6 0 -25.8Q-12.4 -11.6 0 0Z" fill="#5a7a5a" opacity="1"/><path transform="translate(370.1 472.0) rotate(117)" d="M0 0Q13.9 -14.4 0 -31.9Q-13.9 -14.4 0 0Z" fill="#6a7a60" opacity="1"/><path transform="translate(370.1 472.0) rotate(189)" d="M0 0Q13.9 -15.2 0 -33.9Q-13.9 -15.2 0 0Z" fill="#6a7a60" opacity="1"/><path transform="translate(370.1 472.0) rotate(283)" d="M0 0Q13.9 -14.9 0 -33.1Q-13.9 -14.9 0 0Z" fill="#6a7a60" opacity="1"/><path transform="translate(370.1 472.0) rotate(385)" d="M0 0Q13.9 -13.2 0 -29.4Q-13.9 -13.2 0 0Z" fill="#6a4058" opacity="1"/><path transform="translate(407.1 476.4) rotate(67)" d="M0 0Q11.2 -11.3 0 -25.1Q-11.2 -11.3 0 0Z" fill="#6a7a60" opacity="1"/><path transform="translate(407.1 476.4) rotate(199)" d="M0 0Q11.2 -12.0 0 -26.6Q-11.2 -12.0 0 0Z" fill="#6a7a60" opacity="1"/><path transform="translate(407.1 476.4) rotate(318)" d="M0 0Q11.2 -9.7 0 -21.5Q-11.2 -9.7 0 0Z" fill="#6a7a60" opacity="1"/><path transform="translate(-11.5 490.8) rotate(256)" d="M0 0Q9.8 -9.2 0 -20.4Q-9.8 -9.2 0 0Z" fill="#e01a40" opacity="1"/><path transform="translate(-11.5 490.8) rotate(375)" d="M0 0Q9.8 -8.6 0 -19.2Q-9.8 -8.6 0 0Z" fill="#e01a40" opacity="1"/><path transform="translate(-11.5 490.8) rotate(493)" d="M0 0Q9.8 -11.4 0 -25.3Q-9.8 -11.4 0 0Z" fill="#e01a40" opacity="1"/><path transform="translate(21.3 489.7) rotate(279)" d="M0 0Q9.8 -9.2 0 -20.3Q-9.8 -9.2 0 0Z" fill="#e01a40" opacity="1"/><path transform="translate(21.3 489.7) rotate(332)" d="M0 0Q9.8 -8.7 0 -19.4Q-9.8 -8.7 0 0Z" fill="#c8103a" opacity="1"/><path transform="translate(21.3 489.7) rotate(411)" d="M0 0Q9.8 -11.4 0 -25.3Q-9.8 -11.4 0 0Z" fill="#e01a40" opacity="1"/><path transform="translate(21.3 489.7) rotate(491)" d="M0 0Q9.8 -10.9 0 -24.3Q-9.8 -10.9 0 0Z" fill="#e01a40" opacity="1"/><path transform="translate(21.3 489.7) rotate(559)" d="M0 0Q9.8 -9.3 0 -20.6Q-9.8 -9.3 0 0Z" fill="#e01a40" opacity="1"/><path transform="translate(56.9 489.6) rotate(174)" d="M0 0Q11.8 -12.6 0 -27.9Q-11.8 -12.6 0 0Z" fill="#e8143a" opacity="1"/><path transform="translate(56.9 489.6) rotate(265)" d="M0 0Q11.8 -12.6 0 -28.0Q-11.8 -12.6 0 0Z" fill="#e01a40" opacity="1"/><path transform="translate(56.9 489.6) rotate(358)" d="M0 0Q11.8 -10.6 0 -23.7Q-11.8 -10.6 0 0Z" fill="#e01a40" opacity="1"/><path transform="translate(56.9 489.6) rotate(438)" d="M0 0Q11.8 -13.5 0 -30.0Q-11.8 -13.5 0 0Z" fill="#e01a40" opacity="1"/><path transform="translate(75.7 489.0) rotate(225)" d="M0 0Q12.8 -13.9 0 -30.9Q-12.8 -13.9 0 0Z" fill="#e01a40" opacity="1"/><path transform="translate(75.7 489.0) rotate(307)" d="M0 0Q12.8 -12.7 0 -28.3Q-12.8 -12.7 0 0Z" fill="#d82448" opacity="1"/><path transform="translate(75.7 489.0) rotate(372)" d="M0 0Q12.8 -14.0 0 -31.1Q-12.8 -14.0 0 0Z" fill="#e01a40" opacity="1"/><path transform="translate(75.7 489.0) rotate(454)" d="M0 0Q12.8 -11.0 0 -24.5Q-12.8 -11.0 0 0Z" fill="#e01a40" opacity="1"/><path transform="translate(75.7 489.0) rotate(516)" d="M0 0Q12.8 -12.9 0 -28.7Q-12.8 -12.9 0 0Z" fill="#e01a40" opacity="1"/><path transform="translate(347.9 505.0) rotate(269)" d="M0 0Q13.5 -13.5 0 -30.0Q-13.5 -13.5 0 0Z" fill="#c83050" opacity="1"/><path transform="translate(347.9 505.0) rotate(399)" d="M0 0Q13.5 -12.7 0 -28.1Q-13.5 -12.7 0 0Z" fill="#6a4058" opacity="1"/><path transform="translate(347.9 505.0) rotate(519)" d="M0 0Q13.5 -13.3 0 -29.6Q-13.5 -13.3 0 0Z" fill="#6a7a60" opacity="1"/><path transform="translate(389.8 512.0) rotate(108)" d="M0 0Q10.4 -10.4 0 -23.2Q-10.4 -10.4 0 0Z" fill="#6a4058" opacity="1"/><path transform="translate(389.8 512.0) rotate(233)" d="M0 0Q10.4 -9.7 0 -21.5Q-10.4 -9.7 0 0Z" fill="#4a3a48" opacity="1"/><path transform="translate(389.8 512.0) rotate(347)" d="M0 0Q10.4 -10.3 0 -22.9Q-10.4 -10.3 0 0Z" fill="#4a3a48" opacity="1"/><path transform="translate(399.2 510.0) rotate(18)" d="M0 0Q10.7 -9.4 0 -20.9Q-10.7 -9.4 0 0Z" fill="#8a5a68" opacity="1"/><path transform="translate(399.2 510.0) rotate(93)" d="M0 0Q10.7 -11.4 0 -25.4Q-10.7 -11.4 0 0Z" fill="#7a4a60" opacity="1"/><path transform="translate(399.2 510.0) rotate(191)" d="M0 0Q10.7 -10.7 0 -23.8Q-10.7 -10.7 0 0Z" fill="#7a4a60" opacity="1"/><path transform="translate(399.2 510.0) rotate(276)" d="M0 0Q10.7 -11.5 0 -25.6Q-10.7 -11.5 0 0Z" fill="#7a4a60" opacity="1"/><path transform="translate(-13.1 530.5) rotate(149)" d="M0 0Q12.1 -11.4 0 -25.3Q-12.1 -11.4 0 0Z" fill="#a02050" opacity="1"/><path transform="translate(-13.1 530.5) rotate(223)" d="M0 0Q12.1 -12.4 0 -27.6Q-12.1 -12.4 0 0Z" fill="#a02050" opacity="1"/><path transform="translate(-13.1 530.5) rotate(305)" d="M0 0Q12.1 -13.3 0 -29.5Q-12.1 -13.3 0 0Z" fill="#a02050" opacity="1"/><path transform="translate(-13.1 530.5) rotate(376)" d="M0 0Q12.1 -13.0 0 -28.9Q-12.1 -13.0 0 0Z" fill="#a02050" opacity="1"/><path transform="translate(-13.1 530.5) rotate(452)" d="M0 0Q12.1 -12.2 0 -27.2Q-12.1 -12.2 0 0Z" fill="#a02050" opacity="1"/><path transform="translate(24.3 535.0) rotate(55)" d="M0 0Q14.2 -14.0 0 -31.1Q-14.2 -14.0 0 0Z" fill="#8a2050" opacity="1"/><path transform="translate(24.3 535.0) rotate(166)" d="M0 0Q14.2 -13.8 0 -30.7Q-14.2 -13.8 0 0Z" fill="#d82050" opacity="1"/><path transform="translate(24.3 535.0) rotate(250)" d="M0 0Q14.2 -14.4 0 -32.0Q-14.2 -14.4 0 0Z" fill="#d82050" opacity="1"/><path transform="translate(24.3 535.0) rotate(332)" d="M0 0Q14.2 -16.1 0 -35.9Q-14.2 -16.1 0 0Z" fill="#d82050" opacity="1"/><path transform="translate(82.8 533.5) rotate(160)" d="M0 0Q12.0 -10.9 0 -24.3Q-12.0 -10.9 0 0Z" fill="#a02050" opacity="1"/><path transform="translate(82.8 533.5) rotate(253)" d="M0 0Q12.0 -12.9 0 -28.6Q-12.0 -12.9 0 0Z" fill="#8a2050" opacity="1"/><path transform="translate(82.8 533.5) rotate(335)" d="M0 0Q12.0 -14.0 0 -31.0Q-12.0 -14.0 0 0Z" fill="#8a2050" opacity="1"/><path transform="translate(82.8 533.5) rotate(440)" d="M0 0Q12.0 -12.7 0 -28.2Q-12.0 -12.7 0 0Z" fill="#d82050" opacity="1"/><path transform="translate(325.4 524.5) rotate(-10)" d="M0 0Q12.7 -12.0 0 -26.7Q-12.7 -12.0 0 0Z" fill="#7a4a60" opacity="1"/><path transform="translate(325.4 524.5) rotate(127)" d="M0 0Q12.7 -11.0 0 -24.5Q-12.7 -11.0 0 0Z" fill="#7a4a60" opacity="1"/><path transform="translate(325.4 524.5) rotate(232)" d="M0 0Q12.7 -11.7 0 -26.1Q-12.7 -11.7 0 0Z" fill="#7a4a60" opacity="1"/><path transform="translate(349.3 519.8) rotate(101)" d="M0 0Q13.6 -12.4 0 -27.6Q-13.6 -12.4 0 0Z" fill="#5a7a5a" opacity="1"/><path transform="translate(349.3 519.8) rotate(167)" d="M0 0Q13.6 -14.8 0 -32.8Q-13.6 -14.8 0 0Z" fill="#8a5a68" opacity="1"/><path transform="translate(349.3 519.8) rotate(243)" d="M0 0Q13.6 -13.1 0 -29.2Q-13.6 -13.1 0 0Z" fill="#4a3a48" opacity="1"/><path transform="translate(349.3 519.8) rotate(321)" d="M0 0Q13.6 -14.4 0 -31.9Q-13.6 -14.4 0 0Z" fill="#8a5a68" opacity="1"/><path transform="translate(349.3 519.8) rotate(405)" d="M0 0Q13.6 -12.4 0 -27.5Q-13.6 -12.4 0 0Z" fill="#6a7a60" opacity="1"/><path transform="translate(384.6 527.2) rotate(72)" d="M0 0Q11.6 -12.9 0 -28.7Q-11.6 -12.9 0 0Z" fill="#6a7a60" opacity="1"/><path transform="translate(384.6 527.2) rotate(201)" d="M0 0Q11.6 -13.0 0 -28.9Q-11.6 -13.0 0 0Z" fill="#6a7a60" opacity="1"/><path transform="translate(384.6 527.2) rotate(326)" d="M0 0Q11.6 -12.1 0 -26.8Q-11.6 -12.1 0 0Z" fill="#8a5a68" opacity="1"/><path transform="translate(401.3 522.6) rotate(33)" d="M0 0Q10.5 -10.8 0 -23.9Q-10.5 -10.8 0 0Z" fill="#8a5a68" opacity="1"/><path transform="translate(401.3 522.6) rotate(116)" d="M0 0Q10.5 -11.4 0 -25.3Q-10.5 -11.4 0 0Z" fill="#8a5a68" opacity="1"/><path transform="translate(401.3 522.6) rotate(176)" d="M0 0Q10.5 -11.1 0 -24.7Q-10.5 -11.1 0 0Z" fill="#8a5a68" opacity="1"/><path transform="translate(401.3 522.6) rotate(259)" d="M0 0Q10.5 -12.0 0 -26.6Q-10.5 -12.0 0 0Z" fill="#8a5a68" opacity="1"/><path transform="translate(401.3 522.6) rotate(320)" d="M0 0Q10.5 -11.2 0 -24.9Q-10.5 -11.2 0 0Z" fill="#8a5a68" opacity="1"/><path transform="translate(-15.7 551.8) rotate(278)" d="M0 0Q11.2 -12.4 0 -27.6Q-11.2 -12.4 0 0Z" fill="#a02050" opacity="1"/><path transform="translate(-15.7 551.8) rotate(345)" d="M0 0Q11.2 -10.8 0 -24.0Q-11.2 -10.8 0 0Z" fill="#a02050" opacity="1"/><path transform="translate(-15.7 551.8) rotate(415)" d="M0 0Q11.2 -11.9 0 -26.5Q-11.2 -11.9 0 0Z" fill="#a02050" opacity="1"/><path transform="translate(-15.7 551.8) rotate(488)" d="M0 0Q11.2 -10.8 0 -24.0Q-11.2 -10.8 0 0Z" fill="#a02050" opacity="1"/><path transform="translate(-15.7 551.8) rotate(573)" d="M0 0Q11.2 -12.1 0 -26.9Q-11.2 -12.1 0 0Z" fill="#a02050" opacity="1"/><path transform="translate(19.4 555.5) rotate(227)" d="M0 0Q11.4 -10.6 0 -23.6Q-11.4 -10.6 0 0Z" fill="#8a2050" opacity="1"/><path transform="translate(19.4 555.5) rotate(305)" d="M0 0Q11.4 -12.4 0 -27.6Q-11.4 -12.4 0 0Z" fill="#b03060" opacity="1"/><path transform="translate(19.4 555.5) rotate(388)" d="M0 0Q11.4 -11.5 0 -25.5Q-11.4 -11.5 0 0Z" fill="#b03060" opacity="1"/><path transform="translate(19.4 555.5) rotate(463)" d="M0 0Q11.4 -10.0 0 -22.2Q-11.4 -10.0 0 0Z" fill="#8a2050" opacity="1"/><path transform="translate(19.4 555.5) rotate(532)" d="M0 0Q11.4 -13.2 0 -29.3Q-11.4 -13.2 0 0Z" fill="#b03060" opacity="1"/><path transform="translate(81.4 549.5) rotate(16)" d="M0 0Q13.5 -13.9 0 -30.8Q-13.5 -13.9 0 0Z" fill="#c81a48" opacity="1"/><path transform="translate(81.4 549.5) rotate(76)" d="M0 0Q13.5 -14.7 0 -32.7Q-13.5 -14.7 0 0Z" fill="#c81a48" opacity="1"/><path transform="translate(81.4 549.5) rotate(162)" d="M0 0Q13.5 -15.6 0 -34.6Q-13.5 -15.6 0 0Z" fill="#c81a48" opacity="1"/><path transform="translate(81.4 549.5) rotate(233)" d="M0 0Q13.5 -14.6 0 -32.6Q-13.5 -14.6 0 0Z" fill="#c81a48" opacity="1"/><path transform="translate(81.4 549.5) rotate(296)" d="M0 0Q13.5 -15.2 0 -33.8Q-13.5 -15.2 0 0Z" fill="#8a2050" opacity="1"/><path transform="translate(331.0 562.5) rotate(159)" d="M0 0Q12.9 -15.1 0 -33.5Q-12.9 -15.1 0 0Z" fill="#6a4058" opacity="1"/><path transform="translate(331.0 562.5) rotate(230)" d="M0 0Q12.9 -14.4 0 -32.1Q-12.9 -14.4 0 0Z" fill="#5a7a5a" opacity="1"/><path transform="translate(331.0 562.5) rotate(300)" d="M0 0Q12.9 -14.5 0 -32.2Q-12.9 -14.5 0 0Z" fill="#6a4058" opacity="1"/><path transform="translate(331.0 562.5) rotate(388)" d="M0 0Q12.9 -12.4 0 -27.6Q-12.9 -12.4 0 0Z" fill="#c83050" opacity="1"/><path transform="translate(331.0 562.5) rotate(448)" d="M0 0Q12.9 -13.9 0 -31.0Q-12.9 -13.9 0 0Z" fill="#5a7a5a" opacity="1"/><path transform="translate(353.8 549.4) rotate(78)" d="M0 0Q13.2 -11.5 0 -25.5Q-13.2 -11.5 0 0Z" fill="#7a4a60" opacity="1"/><path transform="translate(353.8 549.4) rotate(185)" d="M0 0Q13.2 -12.7 0 -28.2Q-13.2 -12.7 0 0Z" fill="#7a4a60" opacity="1"/><path transform="translate(353.8 549.4) rotate(273)" d="M0 0Q13.2 -12.9 0 -28.7Q-13.2 -12.9 0 0Z" fill="#5a7a5a" opacity="1"/><path transform="translate(353.8 549.4) rotate(350)" d="M0 0Q13.2 -11.8 0 -26.2Q-13.2 -11.8 0 0Z" fill="#7a4a60" opacity="1"/><path transform="translate(373.5 569.8) rotate(236)" d="M0 0Q13.8 -12.1 0 -26.9Q-13.8 -12.1 0 0Z" fill="#6a7a60" opacity="1"/><path transform="translate(373.5 569.8) rotate(310)" d="M0 0Q13.8 -12.5 0 -27.8Q-13.8 -12.5 0 0Z" fill="#6a7a60" opacity="1"/><path transform="translate(373.5 569.8) rotate(368)" d="M0 0Q13.8 -13.3 0 -29.6Q-13.8 -13.3 0 0Z" fill="#6a7a60" opacity="1"/><path transform="translate(373.5 569.8) rotate(443)" d="M0 0Q13.8 -12.9 0 -28.7Q-13.8 -12.9 0 0Z" fill="#6a7a60" opacity="1"/><path transform="translate(373.5 569.8) rotate(522)" d="M0 0Q13.8 -12.1 0 -26.9Q-13.8 -12.1 0 0Z" fill="#6a7a60" opacity="1"/><path transform="translate(419.5 552.1) rotate(282)" d="M0 0Q12.7 -14.4 0 -32.0Q-12.7 -14.4 0 0Z" fill="#6a7a60" opacity="1"/><path transform="translate(419.5 552.1) rotate(352)" d="M0 0Q12.7 -12.2 0 -27.2Q-12.7 -12.2 0 0Z" fill="#6a7a60" opacity="1"/><path transform="translate(419.5 552.1) rotate(430)" d="M0 0Q12.7 -14.2 0 -31.7Q-12.7 -14.2 0 0Z" fill="#6a7a60" opacity="1"/><path transform="translate(419.5 552.1) rotate(500)" d="M0 0Q12.7 -11.1 0 -24.7Q-12.7 -11.1 0 0Z" fill="#6a7a60" opacity="1"/><path transform="translate(419.5 552.1) rotate(558)" d="M0 0Q12.7 -10.9 0 -24.3Q-12.7 -10.9 0 0Z" fill="#6a7a60" opacity="1"/></g><!-- hair (slide coords = screen - 318,177) -->
<path d="M165 140 C150 141 138 149 131 162 C126 178 123 198 119 216 C114 234 104 252 92 268 C84 282 80 298 79 315 L250 315 C250 300 248 287 244 278 C234 270 226 260 221 248 C215 234 212 216 207 196 C204 176 200 160 194 152 C186 144 176 140 165 140 Z" fill="#30203e"/>
<path d="M92 268 C84 284 80 300 79 315 L112 315 C108 298 100 282 92 268Z" fill="#45304a"/>
<path d="M196 250 C206 262 220 280 232 300 L236 315 L214 315 C210 295 202 272 196 250Z" fill="#5a3c52" opacity="0.9"/>
<path d="M206 205 C212 230 222 252 240 272 L234 278 C220 262 210 240 206 205Z" fill="#4e3450"/>
<g fill="none" stroke="#5a3e5e" stroke-width="2.2" opacity="0.8">
<path d="M128 180 C122 210 112 240 98 262 C90 276 86 290 84 310"/>
<path d="M134 200 C130 230 118 260 108 290"/>
<path d="M200 180 C206 210 212 240 226 262 C236 274 242 290 244 310"/>
<path d="M195 215 C202 240 214 262 232 288"/>
<path d="M118 240 C110 262 100 280 94 300" stroke="#4a3450"/>
</g>
<!-- dress top -->
<path d="M130 276 C150 280 195 280 232 274 L242 315 L116 315 Z" fill="#3a2444"/>
<path d="M158 290 l8 -4 l8 4 l-8 6z" fill="#c8a850"/>
<path d="M140 305 q25 -10 50 0" stroke="#a08850" stroke-width="3" fill="none" opacity="0.6"/>
<!-- neck -->
<path d="M161 228 L185 226 L186 270 C176 278 166 278 160 270 Z" fill="#d6aea4"/>
<!-- face -->
<path d="M162 155 C148 157 140 170 139 190 C139 212 148 232 165 241 C178 235 185 215 186 192 C186 170 178 155 162 155 Z" fill="#eed2cc"/>
<path d="M162 146 C156 154 146 168 138 190 L136 172 C142 158 152 148 162 146Z" fill="#2a1934"/>
<path d="M145 193 q6 -3 12 0 q-6 3 -12 0z M170 193 q6 -3 12 0 q-6 3 -12 0z" fill="#3a2530"/>
<path d="M144 186 q7 -3 13 -1 M169 185 q7 -2 13 1" stroke="#5a3a40" stroke-width="1.4" fill="none"/>
<path d="M159 228 q6 -3 12 0 q-6 3 -12 0z" fill="#c04a5e"/>
<!-- hand near face -->
<path d="M161 224 C152 224 140 226 130 236 C122 244 118 254 116 264 C112 280 108 296 104 312 L122 312 C125 298 128 284 132 276 C136 270 142 266 150 264 C156 262 158 256 155 250 C152 246 148 244 148 240 C150 236 156 232 161 230 Z" fill="#ecccc8"/>
<path d="M130 240 C138 236 150 232 160 226" stroke="#d8a8a8" stroke-width="1" fill="none"/>
<!-- shoulder right -->
<path d="M236 276 C243 278 247 288 248 312 L237 312 C236 298 235 286 236 276Z" fill="#e4c4bc"/>
<!-- bottom dress -->
<path d="M40 478 L300 478 L284 570 L34 570 Z" fill="#382a5a"/>
<g opacity="0.5" filter="url(#bl2)">
<path d="M112 478 L150 478 L142 530 L118 540Z" fill="#4c3a7a"/>
<path d="M175 478 L235 478 L248 515 L188 512Z" fill="#52408a"/>
<path d="M150 525 L215 522 L232 570 L140 570Z" fill="#2a2050"/>
<path d="M240 500 L292 498 L286 570 L250 570Z" fill="#4a3878"/>
<path d="M200 540 L240 530 L250 560 L210 565Z" fill="#5a4690"/>
<path d="M110 545 L140 540 L135 570 L105 570Z" fill="#4a3878"/>
</g>
<path d="M88 420 C74 450 50 505 22 570 L46 570 C60 525 78 480 98 440 Z" fill="#2a1c44"/>
<path d="M70 330 L88 320 L88 360 L72 352Z" fill="#2a1934" opacity="0.8"/>
<!-- paper -->
<defs><linearGradient id="pg" x1="0" y1="0" x2="1" y2="1"><stop offset="0" stop-color="#f2f2f1"/><stop offset="0.5" stop-color="#f0f0ef"/><stop offset="1" stop-color="#e3e3e3"/></linearGradient>
<linearGradient id="hg" x1="0" y1="0" x2="0.3" y2="1"><stop offset="0" stop-color="#f2d8cc"/><stop offset="0.4" stop-color="#eac4a8"/><stop offset="1" stop-color="#dcaa86"/></linearGradient></defs>
<rect x="86" y="312" width="238" height="166" fill="url(#pg)"/>
<!-- left hand -->
<path d="M41 485 C52 470 72 450 86 439 L88 446 C94 448 104 450 110 450 C115 450 117 455 115 460 C112 470 108 480 104 487 C102 500 101 510 100 520 C98 535 95 552 92 570 L53 570 C54 555 54 540 52 528 C48 515 44 500 41 485 Z" fill="url(#hg)"/>
<path d="M72 462 C78 455 84 450 88 447 L92 470 C86 478 78 480 72 476Z" fill="#d09070" opacity="0.35" filter="url(#bl2)"/>
<path d="M104 478 C112 476 122 479 127 485 C122 492 112 494 104 492 Z" fill="#c8764a"/>
<path d="M60 505 C66 525 70 548 72 570 L86 570 C88 548 86 525 80 500Z" fill="#d8a07a" opacity="0.4" filter="url(#bl4)"/>
<!-- right hand -->
<path d="M323 444 C330 446 336 449 342 452 C350 458 356 464 362 470 C366 475 370 479 373.5 483 C372 492 371 500 369.6 511 C367 522 365 532 364 540 L362 570 L321 570 C320 555 318 540 317 524 C316 515 315 507 315 501 C310 492 305 486 303 479.5 C300 473 297 467 297.5 462 C298 456 301 454 304 455 C310 456 316 452 323 448 Z" fill="url(#hg)"/>
<path d="M288 478 C296 476 306 478 311 484 C308 494 298 499 289 497 Z" fill="#c8764a"/>
<path d="M323 460 C330 470 336 480 338 492 L330 496 C326 486 324 474 323 460Z" fill="#d09070" opacity="0.35" filter="url(#bl2)"/>
<path d="M330 500 C340 520 344 545 345 570 L358 570 C360 540 358 515 352 495Z" fill="#d8a07a" opacity="0.4" filter="url(#bl4)"/>

</g>
</symbol>
</defs></svg><svg style="left:318px;top:177px" width="428" height="570" viewBox="0 0 428 570"><use href="#photo" x="0" y="0" width="428" height="570"/></svg><svg style="left:35px;top:176px" width="68" height="91" viewBox="0 0 428 570" preserveAspectRatio="none"><use href="#photo" width="428" height="570"/></svg>
<svg style="left:35px;top:289px" width="68" height="91" viewBox="0 0 428 570" preserveAspectRatio="none"><use href="#photo" width="428" height="570"/></svg>
<svg style="left:35px;top:402px" width="68" height="91" viewBox="0 0 428 570" preserveAspectRatio="none"><use href="#photo" width="428" height="570"/></svg>
<svg style="left:35px;top:515px" width="68" height="91" viewBox="0 0 428 570" preserveAspectRatio="none"><use href="#photo" width="428" height="570"/></svg>
<svg style="left:35px;top:176px" width="68" height="91" viewBox="0 0 68 91"><rect x="40" y="8" width="14" height="4" fill="#fff"/><text x="41" y="11.5" font-size="3.5" fill="#d02020" font-family="Liberation Sans" font-weight="bold">1. 背景图</text><text x="14" y="52" font-size="3.5" fill="#e03030" font-family="Liberation Sans" font-weight="bold">2. 空间和文...</text><text x="15" y="59" font-size="3.5" fill="#e03030" font-family="Liberation Sans">3. 文字</text><text x="25" y="61" font-size="5.5" fill="#555" font-family="Liberation Sans" font-weight="bold">Dear</text><text x="22" y="67" font-size="5.5" fill="#302848" font-family="Liberation Sans" font-weight="bold">Dilraba</text></svg>
<svg style="left:35px;top:289px" width="68" height="91" viewBox="0 0 68 91"><text x="27" y="61" font-size="5" fill="#666" font-family="Liberation Sans">Dear</text><text x="23" y="67" font-size="5.5" fill="#302848" font-family="Liberation Sans" font-weight="bold">Dilraba</text></svg>
<svg style="left:35px;top:402px" width="68" height="91" viewBox="0 0 68 91"><text x="27" y="61" font-size="5" fill="#666" font-family="Liberation Sans">Dear</text><text x="23" y="67" font-size="5.5" fill="#302848" font-family="Liberation Sans" font-weight="bold">Dilraba</text></svg>
<svg style="left:35px;top:515px" width="68" height="91" viewBox="0 0 68 91"><text x="27" y="61" font-size="5.5" fill="#a8c4e4" font-family="Liberation Sans" font-weight="bold">Dear</text><text x="22" y="67" font-size="5.5" fill="#a8c4e4" font-family="Liberation Sans" font-weight="bold">Dilraba</text></svg>
<div class="a" style="left:489px;top:556px;font-family:'Liberation Sans',sans-serif;font-size:35px;line-height:36px;color:#afc9e5;font-weight:normal;-webkit-text-stroke:1.1px #afc9e5;letter-spacing:0.5px">Dear</div>
<div class="a" style="left:471px;top:592px;font-family:'Liberation Sans',sans-serif;font-size:35px;line-height:36px;color:#afc9e5;font-weight:normal;-webkit-text-stroke:1.1px #afc9e5;letter-spacing:-0.3px">Dilraba</div>
<svg style="left:460px;top:510px" width="140" height="125" viewBox="460 510 140 125">
<g fill="none" stroke="#8a8a8a" stroke-width="1.3">
<rect x="470.5" y="561.5" width="114" height="63"/>
<path d="M527.5 536v21"/>
</g>
<g fill="none" stroke-linecap="butt">
<path d="M535.5 521 A9 9 0 1 0 533 533" stroke="#8a8a8a" stroke-width="4.6"/>
<path d="M535.5 521 A9 9 0 1 0 533 533" stroke="#f4f4f3" stroke-width="2"/>
</g>
<path d="M529 531 L542 524 L538 536 z" fill="#f4f4f3" stroke="#8a8a8a" stroke-width="1.2" stroke-linejoin="round"/>
<g fill="#fbfbfb" stroke="#8a8a8a" stroke-width="1.5">
<circle cx="470.5" cy="561.5" r="4.8"/><circle cx="527.5" cy="561.5" r="4.8"/><circle cx="584.5" cy="561.5" r="4.8"/>
<circle cx="470.5" cy="593" r="4.8"/><circle cx="584.5" cy="593" r="4.8"/>
<circle cx="470.5" cy="624.5" r="4.8"/><circle cx="527.5" cy="624.5" r="4.8"/><circle cx="584.5" cy="624.5" r="4.8"/>
</g>
<g fill="#000">
<path d="M545.5 562.5 l-3 3.5 h2.3 v3 h1.4 v-3 h2.3z"/>
<path d="M545.5 580.5 l-3 -3.5 h2.3 v-3 h1.4 v3 h2.3z"/>
<path d="M536.5 571.5 l3.5 -3 v2.3 h3 v1.4 h-3 v2.3z"/>
<path d="M554.5 571.5 l-3.5 -3 v2.3 h-3 v1.4 h3 v2.3z"/>
</g>
</svg>
<svg style="left:35px;top:628px" width="68" height="91" viewBox="0 0 68 91">
<rect width="68" height="91" fill="#120e12"/>
<path d="M8 12 C16 2 40 0 52 8 C60 18 64 40 68 60 L68 91 L0 91 L0 50 C2 35 4 20 8 12Z" fill="#2a2232"/>
<path d="M20 8 C30 6 37 14 37 26 C37 38 32 47 24 47 C17 46 14 38 15 26 C15 17 16 10 20 8Z" fill="#e6b8a0"/>
<path d="M17 33 q3 -1 6 1 q-3 2 -6 -1z" fill="#b01838"/>
<path d="M1 88 L8 38 C10 33 14 31 18 31 C22 33 26 36 27 42 L28 53 C24 62 20 75 17 91 L1 91Z" fill="#dcae90"/>
<path d="M8 40 C12 38 18 40 22 44" stroke="#c89070" stroke-width="1.5" fill="none"/>
<rect x="24" y="19" width="29" height="38" fill="#9a1e50"/>
<path d="M26 21 h5 c6 0 8 3 8 7 c0 5 -3 7 -8 7 h-5z M29 24 v8 h2 c3 0 5 -1 5 -4 c0 -3 -2 -4 -5 -4z" fill="#f0b8c8" fill-rule="evenodd"/>
<path d="M40 31h11M27 39h24M27 46h20M27 49h16" stroke="#e8a0b8" stroke-width="1.4"/>
<path d="M25 74h22M25 78h24M25 82h22M25 85h18" stroke="#c8c8d8" stroke-width="1"/>
<path d="M58 28h10v5H58z" fill="#c8a070"/>
</svg>
<div class="a" style="left:33px;top:740px;width:72px;height:20px;border:1px solid #d0d0d0;background:#f0c8c0;overflow:hidden"><div class="a" style="left:1px;top:1px;width:36px;height:20px;background:#cfe0f0"></div><div class="a" style="left:2px;top:2px;font-size:22px;line-height:22px;font-weight:bold;color:#f4f4f4">STA</div></div>


<!-- RIGHT PANE -->
<div class="a" style="left:933px;top:132px;width:1px;height:623px;background:#c6c6c6"></div>
<div class="t" style="left:947px;top:146px;font-size:21px;line-height:24px;color:#d81e28">设置形状格式</div>
<svg style="left:1148px;top:151px" width="10" height="6"><path d="M0 0h10L5 6z" fill="#666"/></svg>
<svg style="left:1189px;top:148px" width="11" height="10" viewBox="0 0 11 10"><path d="M1 0.5l9 9M10 0.5l-9 9" stroke="#555" stroke-width="1.8"/></svg>
<svg style="left:952px;top:180px" width="26" height="25" viewBox="0 0 26 25"><path d="M2 12l9-9 9 9-9 9z" fill="#fff" stroke="#555" stroke-width="1.3"/><path d="M11 3V1" stroke="#555" stroke-width="1.3"/><circle cx="11" cy="7" r="1.4" fill="#555"/><path d="M20 12c3 0 5 3 4 7-1-3-3-4-4-3z" fill="#555"/></svg>
<svg style="left:993px;top:180px" width="23" height="26" viewBox="0 0 23 26"><path d="M11.5 1.5l10 7.5-3.8 12H5.3L1.5 9z" fill="#fbe0da" stroke="#d9262b" stroke-width="1.2"/><path d="M5 20.5h13" stroke="#d9262b" stroke-width="2.4"/><path d="M5 23h13" stroke="#f5c8c0" stroke-width="2"/></svg>
<svg style="left:1032px;top:182px" width="24" height="23" viewBox="0 0 24 23"><rect x="1" y="1" width="22" height="21" fill="#fff" stroke="#666" stroke-width="1.3"/><path d="M3 20v-5l6-5 8 7 1.5-1.5 2.5 2.5V20z" fill="#666"/><circle cx="17.5" cy="6" r="2.3" fill="#666"/></svg>
<div class="a" style="left:947px;top:222px;width:253px;height:1px;background:#cfcfcf"></div>
<svg style="left:996px;top:214px" width="16" height="9"><path d="M0 9L8 1l8 8" fill="#e6e6e6" stroke="#cfcfcf"/></svg>
<svg style="left:955px;top:233px" width="7" height="7"><path d="M7 0v7H0z" fill="#444"/></svg>
<div class="t" style="left:969px;top:230px;color:#c8262b;font-weight:bold">艺术效果</div>
<div class="t" style="left:969px;top:257px;color:#444">艺术效果</div>
<div class="a" style="left:1140px;top:251px;width:44px;height:26px;background:#f3f3f3;border:1px solid #c6c6c6"></div>
<svg style="left:1149px;top:257px" width="16" height="14" viewBox="0 0 16 14"><rect x="0.5" y="0.5" width="15" height="13" fill="#fff" stroke="#555"/><path d="M2 3h5M9 3h5M2 6h4M10 6h4M2 9h5M9 9h5M2 12h12" stroke="#3c8dcc" stroke-width="1.5"/></svg>
<svg style="left:1171px;top:263px" width="7" height="4"><path d="M0 0h7L3.5 4z" fill="#666"/></svg>
<div class="a" style="left:970px;top:285px;width:56px;height:22px;background:#efefef"></div>
<div class="t" style="left:978px;top:289px;color:#a8a8a8">重置(<u>R</u>)</div>
<div class="a" style="left:917px;top:158px;width:15px;height:556px;background:#d6d6d6"></div>
<div class="a" style="left:917px;top:158px;width:15px;height:15px;background:#f7f7f7;border:1px solid #c0c0c0"></div>
<svg style="left:920px;top:163px" width="9" height="5"><path d="M0 5L4.5 0 9 5z" fill="#666"/></svg>
<div class="a" style="left:917px;top:305px;width:15px;height:44px;background:#f7f7f7;border:1px solid #c0c0c0"></div>
<div class="a" style="left:917px;top:701px;width:15px;height:14px;background:#f3f3f3;border:1px solid #d0d0d0"></div>
<svg style="left:921px;top:706px" width="7" height="4"><path d="M0 0h7L3.5 4z" fill="#666"/></svg>
<svg style="left:921px;top:720px" width="8" height="27" viewBox="0 0 8 27"><path d="M0 4.5L4 0 8 4.5zM0 8.5L4 4 8 8.5zM0 18h8L4 22.5zM0 22h8L4 26.5z" fill="#666"/></svg>

</body></html>
